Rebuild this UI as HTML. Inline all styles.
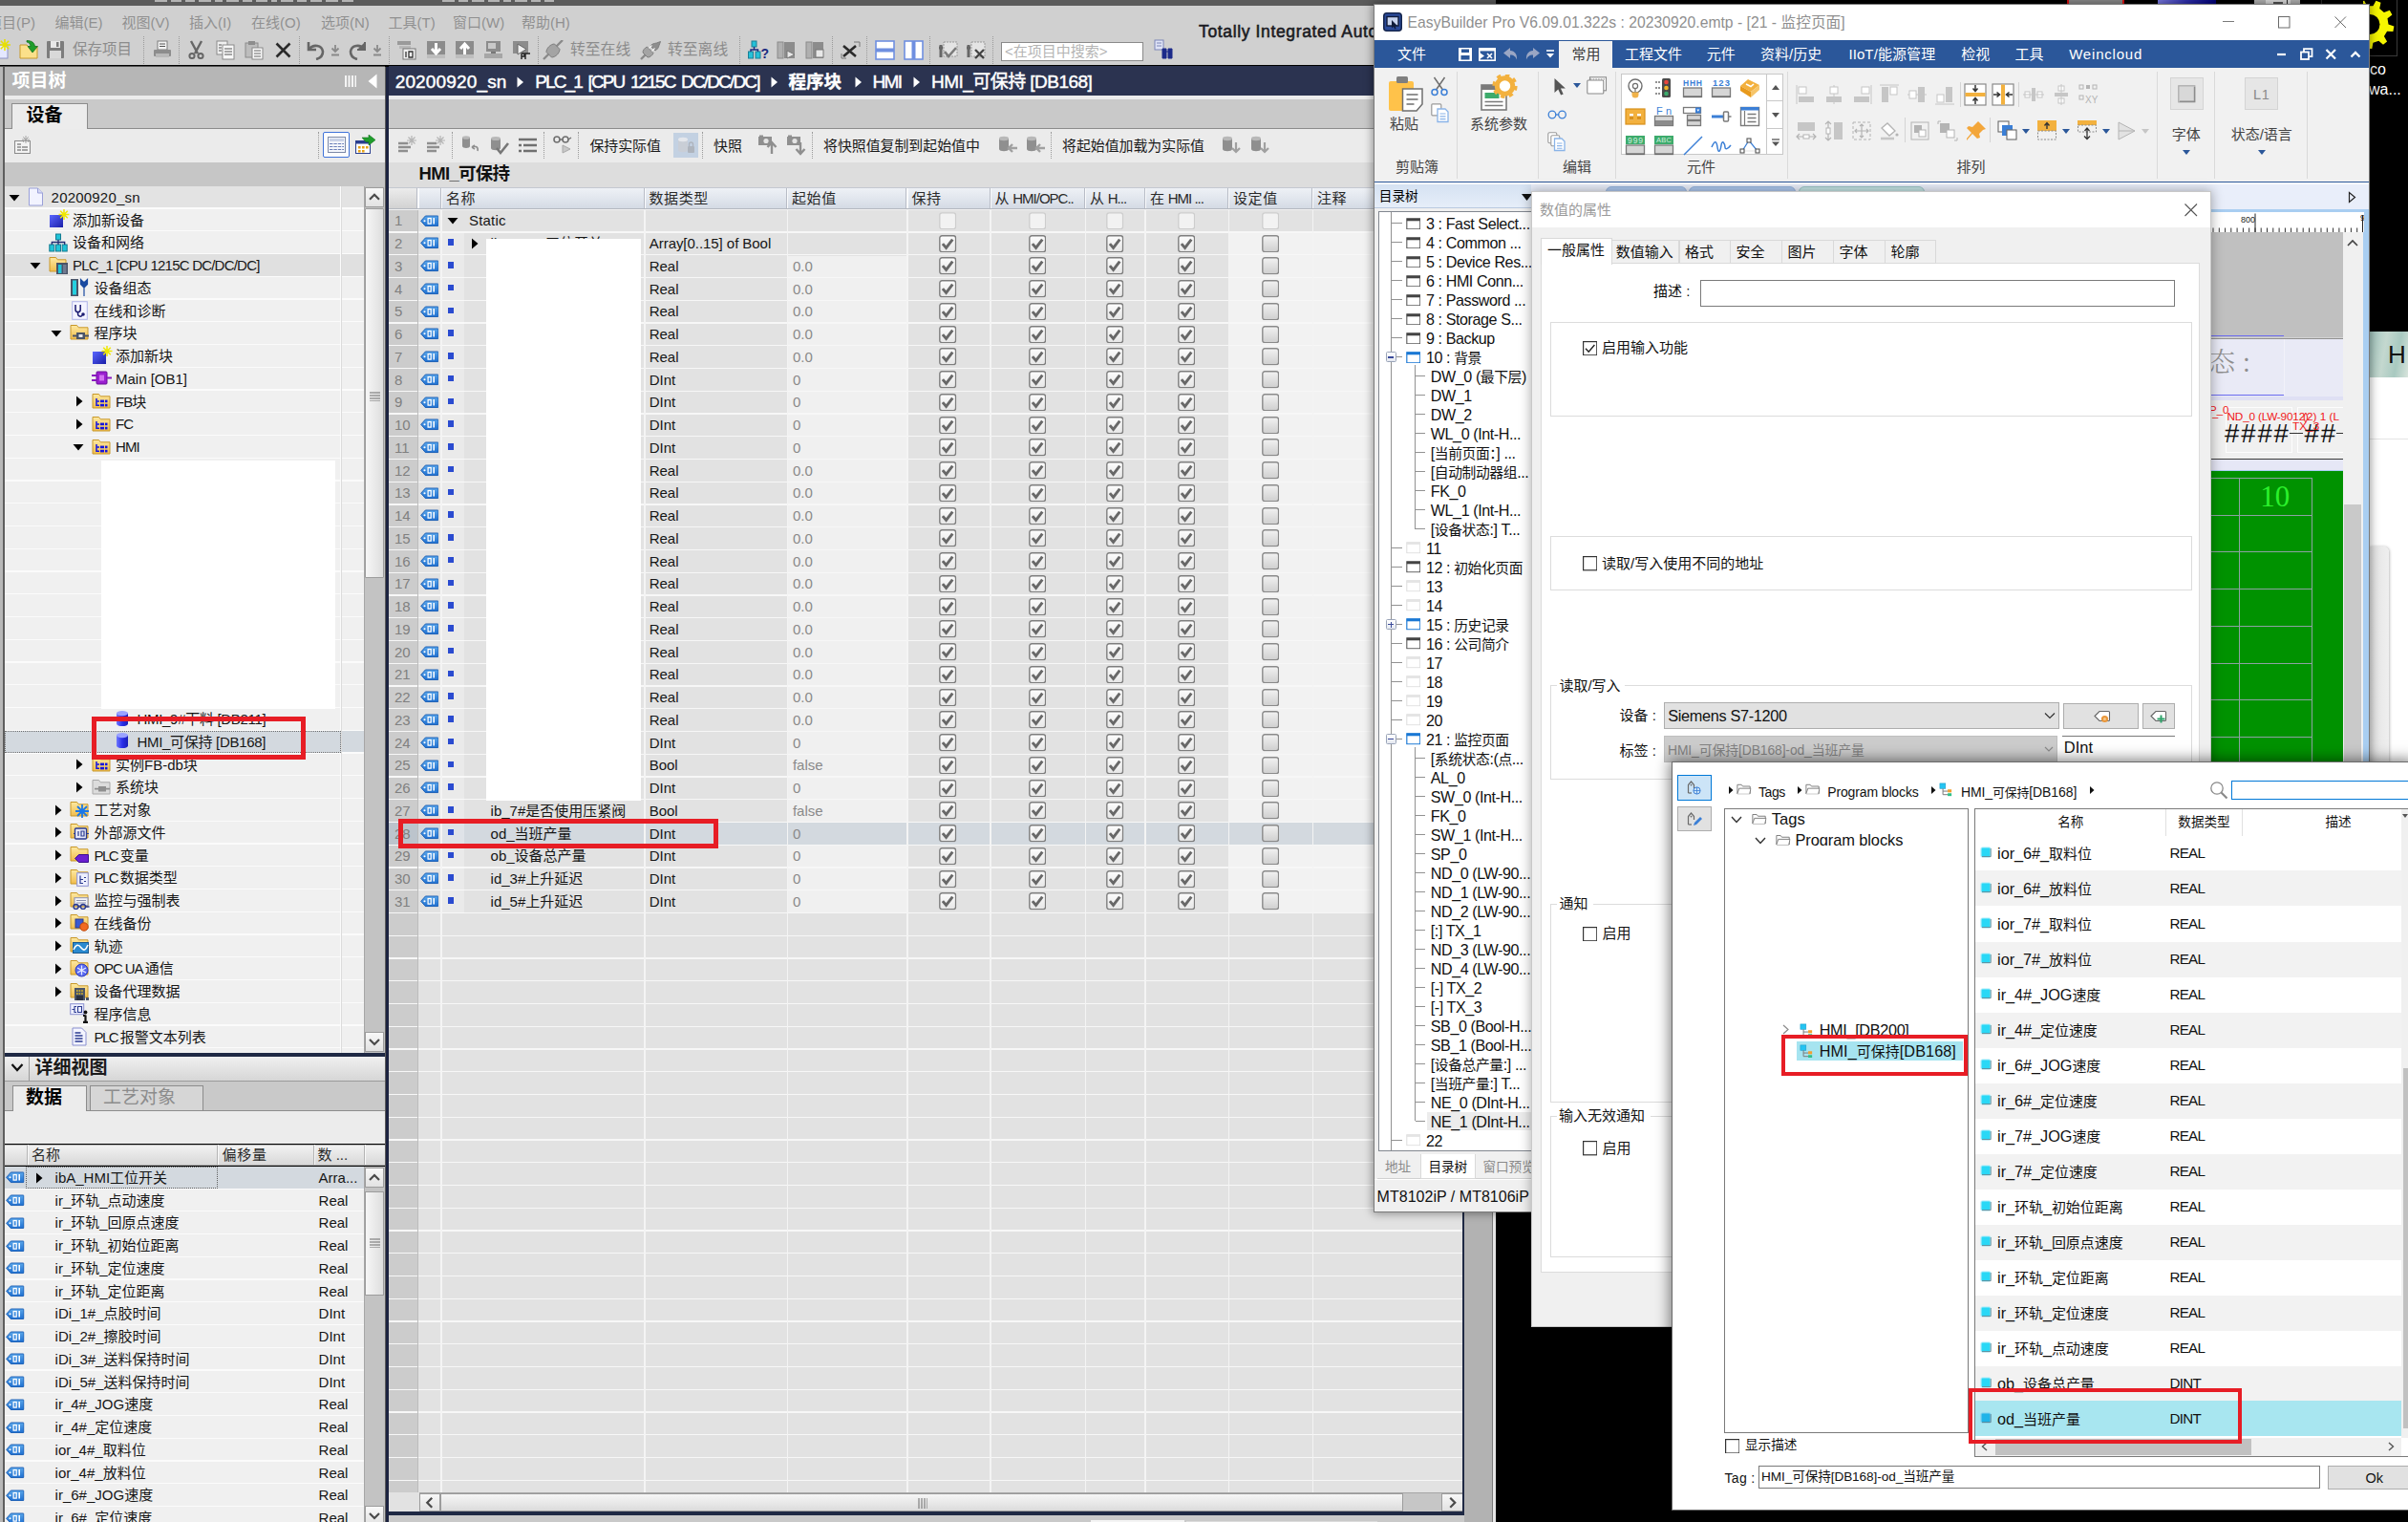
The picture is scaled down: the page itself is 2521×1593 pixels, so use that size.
<!DOCTYPE html>
<html lang="zh"><head><meta charset="utf-8"><title>TIA Portal / EasyBuilder Pro</title><style>
html,body{margin:0;padding:0}
body{width:2521px;height:1593px;overflow:hidden;position:relative;background:#000;font-family:'Liberation Sans','Noto Sans CJK SC',sans-serif}
#r{position:absolute;left:0;top:0;width:2521px;height:1593px;overflow:hidden}
#r div,#r svg{position:absolute}
.t{font-family:'Liberation Sans','Noto Sans CJK SC',sans-serif}
.e{font-family:'Liberation Sans','Noto Sans CJK SC',sans-serif;font-size:15.6px;color:#1a1a1a}
.c{font-size:.92em}
</style></head><body>
<svg width="0" height="0" style="position:absolute"><defs>
<linearGradient id="gtag" x1="0" y1="0" x2="0" y2="1"><stop offset="0" stop-color="#5aa6ea"/><stop offset="1" stop-color="#1e6fd0"/></linearGradient>
<linearGradient id="gfold" x1="0" y1="0" x2="0" y2="1"><stop offset="0" stop-color="#fde9a2"/><stop offset="1" stop-color="#f1bd4c"/></linearGradient>
<linearGradient id="gdb" x1="0" y1="0" x2="1" y2="0"><stop offset="0" stop-color="#6f78ff"/><stop offset=".5" stop-color="#2a2fe8"/><stop offset="1" stop-color="#1a1fb8"/></linearGradient>
<linearGradient id="gadd" x1="0" y1="0" x2="1" y2="1"><stop offset="0" stop-color="#5a66ff"/><stop offset="1" stop-color="#1a1fa8"/></linearGradient>
<linearGradient id="gchk" x1="0" y1="0" x2="0" y2="1"><stop offset="0" stop-color="#fdfdfd"/><stop offset="1" stop-color="#e6e6e6"/></linearGradient>
<linearGradient id="gchk2" x1="0" y1="0" x2="0" y2="1"><stop offset="0" stop-color="#f2f2f2"/><stop offset="1" stop-color="#cfcfcf"/></linearGradient>
<symbol id="tag" viewBox="0 0 20 13"><path d="M0.6 6.5L5.5 1h13.2a.8.8 0 0 1 .8.8v9.4a.8.8 0 0 1-.8.8H5.5z" fill="url(#gtag)" stroke="#1558b0" stroke-width=".9"/><circle cx="4.6" cy="6.5" r="1.1" fill="#fff"/><rect x="8.3" y="3.6" width="3.2" height="5.8" fill="none" stroke="#fff" stroke-width="1.3"/><path d="M14.6 3.2v6.6" stroke="#fff" stroke-width="1.6"/></symbol>
<symbol id="fold" viewBox="0 0 20 18"><path d="M1 2.5h6.5l1.8 2.3H19v12.2H1z" fill="url(#gfold)" stroke="#c8982a" stroke-width="1"/></symbol>
<symbol id="foldb" viewBox="0 0 20 18"><path d="M1 2.5h6.5l1.8 2.3H19v12.2H1z" fill="url(#gfold)" stroke="#c8982a" stroke-width="1"/><path d="M5 7v7.2h3M5 10h3" stroke="#1414e0" stroke-width="1.5" fill="none"/><rect x="9" y="8.6" width="4" height="2.6" fill="#1414e0"/><rect x="9" y="12.8" width="4" height="2.6" fill="#1414e0"/><rect x="14" y="8.6" width="2.5" height="2.6" fill="#1414e0"/><rect x="14" y="12.8" width="2.5" height="2.6" fill="#1414e0"/></symbol>
<symbol id="foldg" viewBox="0 0 20 18"><path d="M1 2.5h6.5l1.8 2.3H19v12.2H1z" fill="#dcdcdc" stroke="#a8a8a8" stroke-width="1"/><rect x="7" y="9" width="8" height="5.5" fill="#8f8f8f"/><path d="M3 11.7h4M15 11.7h4" stroke="#8f8f8f" stroke-width="1.8"/></symbol>
<symbol id="db" viewBox="0 0 14 18"><path d="M1 3.5v11c0 3.4 12 3.4 12 0v-11z" fill="url(#gdb)"/><ellipse cx="7" cy="3.6" rx="6" ry="2.6" fill="#9aa2ff"/></symbol>
<symbol id="addn" viewBox="0 0 22 20"><rect x="1" y="6" width="14" height="13" fill="url(#gadd)"/><path d="M16 0v11M10.5 5.5h11M12.2 1.7l7.6 7.6M19.8 1.7l-7.6 7.6" stroke="#f0e800" stroke-width="1.5"/></symbol>
<symbol id="aR" viewBox="0 0 8 12"><path d="M1 0.5l6.5 5.5L1 11.5z" fill="#000"/></symbol>
<symbol id="aD" viewBox="0 0 12 8"><path d="M0.5 1h11L6 7.5z" fill="#000"/></symbol>
<symbol id="ck1" viewBox="0 0 17 17"><rect x=".75" y=".75" width="15.5" height="15.5" rx="2.2" fill="url(#gchk)" stroke="#7e7e7e" stroke-width="1.3"/><path d="M3.6 8.4l3.4 4 6.2-8.2" stroke="#686868" stroke-width="2.7" fill="none"/></symbol>
<symbol id="ck0" viewBox="0 0 17 17"><rect x=".75" y=".75" width="15.5" height="15.5" rx="2.2" fill="url(#gchk2)" stroke="#8a8a8a" stroke-width="1.3"/></symbol>
<symbol id="ckd" viewBox="0 0 17 17"><rect x=".75" y=".75" width="15.5" height="15.5" rx="2.2" fill="#f2f2f2" stroke="#cdcdcd" stroke-width="1.2"/></symbol>
<symbol id="ebw" viewBox="0 0 16 13"><rect x=".8" y=".8" width="14.4" height="11.4" fill="#fff" stroke="#555" stroke-width="1.1"/><rect x=".8" y=".8" width="14.4" height="2.6" fill="#444"/></symbol>
<symbol id="ebwb" viewBox="0 0 16 13"><rect x=".8" y=".8" width="14.4" height="11.4" fill="#fff" stroke="#1a78d4" stroke-width="1.2"/><rect x=".8" y=".8" width="14.4" height="2.6" fill="#1a78d4"/></symbol>
<symbol id="ebwe" viewBox="0 0 16 13"><rect x=".8" y=".8" width="14.4" height="11.4" fill="#fff" stroke="#dcdcdc" stroke-width="1"/><rect x=".8" y=".8" width="14.4" height="2.2" fill="#e4e4e4"/></symbol>
<symbol id="cy2" viewBox="0 0 12 12"><rect x="1" y="1" width="10" height="10" rx="1.5" fill="#1fb4e8" stroke="#7fd0ee" stroke-width="1.2"/><path d="M2 10.6h9.2V2" stroke="#5a6a74" stroke-width="1" fill="none" opacity=".7"/></symbol>
<symbol id="cy" viewBox="0 0 12 12"><rect x="1" y="1" width="10" height="10" rx="1.5" fill="#29d8f6" stroke="#a8ecfa" stroke-width="1.2"/><path d="M2 10.6h9.2V2" stroke="#5a6a74" stroke-width="1" fill="none" opacity=".7"/></symbol>
<symbol id="tfold" viewBox="0 0 18 14"><path d="M1 1.5h5l1.5 2H16.5V12.5H1z" fill="none" stroke="#7a7a7a" stroke-width="1.1"/><path d="M1 12.5l2.2-6.5h14.3l-1.5 6.5" fill="#fff" stroke="#7a7a7a" stroke-width="1.1"/></symbol>
<symbol id="ttag" viewBox="0 0 16 16"><rect x="1" y="1" width="6.500" height="6" fill="#24c4f2" stroke="#1a9ac8" stroke-width=".6"/><path d="M4.500 7v7h5.500M4.500 10h5.500" stroke="#7a7a7a" stroke-width="1.100" fill="none"/><rect x="10" y="8" width="4.500" height="3.400" fill="#f2a030"/><rect x="10" y="12.400" width="4.500" height="3.400" fill="#2fc08a"/></symbol>
</defs></svg>
<div id="r">
<div style="left:0px;top:0px;width:1566px;height:6px;background:#5b5b5b"></div>
<div style="left:0px;top:5.5px;width:1600px;height:31px;background:#d0d0d0"></div>
<div style="left:0px;top:36px;width:1600px;height:32px;background:#d0d0d0"></div>
<div style="left:162px;top:0px;width:13px;height:1.6px;background:#b4b4b4"></div>
<div style="left:179px;top:0px;width:11px;height:1.6px;background:#b4b4b4"></div>
<div style="left:194px;top:0px;width:10px;height:1.6px;background:#b4b4b4"></div>
<div style="left:208px;top:0px;width:13px;height:1.6px;background:#b4b4b4"></div>
<div style="left:225px;top:0px;width:8px;height:1.6px;background:#b4b4b4"></div>
<div style="left:237px;top:0px;width:13px;height:1.6px;background:#b4b4b4"></div>
<div style="left:254px;top:0px;width:10px;height:1.6px;background:#b4b4b4"></div>
<div style="left:268px;top:0px;width:12px;height:1.6px;background:#b4b4b4"></div>
<div style="left:284px;top:0px;width:6px;height:1.6px;background:#b4b4b4"></div>
<div style="left:294px;top:0px;width:13px;height:1.6px;background:#b4b4b4"></div>
<div style="left:311px;top:0px;width:10px;height:1.6px;background:#b4b4b4"></div>
<div style="left:325px;top:0px;width:12px;height:1.6px;background:#b4b4b4"></div>
<div style="left:341px;top:0px;width:13px;height:1.6px;background:#b4b4b4"></div>
<div style="left:358px;top:0px;width:12px;height:1.6px;background:#b4b4b4"></div>
<div style="left:463px;top:0px;width:13px;height:1.6px;background:#b4b4b4"></div>
<div style="left:480px;top:0px;width:10px;height:1.6px;background:#b4b4b4"></div>
<div style="left:494px;top:0px;width:13px;height:1.6px;background:#b4b4b4"></div>
<div style="left:511px;top:0px;width:12px;height:1.6px;background:#b4b4b4"></div>
<div style="left:527px;top:0px;width:8px;height:1.6px;background:#b4b4b4"></div>
<div style="left:539px;top:0px;width:13px;height:1.6px;background:#b4b4b4"></div>
<div style="left:556px;top:0px;width:10px;height:1.6px;background:#b4b4b4"></div>
<div style="left:570px;top:0px;width:10px;height:1.6px;background:#b4b4b4"></div>
<div class="t" style="left:-13px;top:12.3px;height:24px;line-height:24px;white-space:pre;color:#909090;font-size:15px">项目(P)</div>
<div class="t" style="left:57.5px;top:12.3px;height:24px;line-height:24px;white-space:pre;color:#909090;font-size:15px">编辑(E)</div>
<div class="t" style="left:127.5px;top:12.3px;height:24px;line-height:24px;white-space:pre;color:#909090;font-size:15px">视图(V)</div>
<div class="t" style="left:198px;top:12.3px;height:24px;line-height:24px;white-space:pre;color:#909090;font-size:15px">插入(I)</div>
<div class="t" style="left:263px;top:12.3px;height:24px;line-height:24px;white-space:pre;color:#909090;font-size:15px">在线(O)</div>
<div class="t" style="left:336px;top:12.3px;height:24px;line-height:24px;white-space:pre;color:#909090;font-size:15px">选项(N)</div>
<div class="t" style="left:406.5px;top:12.3px;height:24px;line-height:24px;white-space:pre;color:#909090;font-size:15px">工具(T)</div>
<div class="t" style="left:474px;top:12.3px;height:24px;line-height:24px;white-space:pre;color:#909090;font-size:15px">窗口(W)</div>
<div class="t" style="left:546px;top:12.3px;height:24px;line-height:24px;white-space:pre;color:#909090;font-size:15px">帮助(H)</div>
<div class="t" style="left:76px;top:40.3px;height:24px;line-height:24px;white-space:pre;color:#8c8c8c;font-size:15.5px">保存项目</div>
<div class="t" style="left:597px;top:40.3px;height:24px;line-height:24px;white-space:pre;color:#8c8c8c;font-size:15.8px">转至在线</div>
<div class="t" style="left:699px;top:40.3px;height:24px;line-height:24px;white-space:pre;color:#8c8c8c;font-size:15.8px">转至离线</div>
<div style="left:150px;top:38px;width:0px;height:29px;border-left:1px dotted #9a9a9a"></div>
<div style="left:186.5px;top:38px;width:0px;height:29px;border-left:1px dotted #9a9a9a"></div>
<div style="left:313px;top:38px;width:0px;height:29px;border-left:1px dotted #9a9a9a"></div>
<div style="left:406.5px;top:38px;width:0px;height:29px;border-left:1px dotted #9a9a9a"></div>
<div style="left:562.5px;top:38px;width:0px;height:29px;border-left:1px dotted #9a9a9a"></div>
<div style="left:774px;top:38px;width:0px;height:29px;border-left:1px dotted #9a9a9a"></div>
<div style="left:871px;top:38px;width:0px;height:29px;border-left:1px dotted #9a9a9a"></div>
<div style="left:906.5px;top:38px;width:0px;height:29px;border-left:1px dotted #9a9a9a"></div>
<div style="left:973px;top:38px;width:0px;height:29px;border-left:1px dotted #9a9a9a"></div>
<div style="left:1039px;top:38px;width:0px;height:29px;border-left:1px dotted #9a9a9a"></div>
<svg style="left:-3px;top:41px;" width="14" height="21" viewBox="0 0 14 21"><rect x="0" y="6" width="11" height="14" fill="#e4e8ff" stroke="#8c93c6"/><path d="M8 0v12M2 6h12M3.8 1.8l8.4 8.4M12.2 1.8l-8.4 8.4" stroke="#e8e000" stroke-width="1.6"/></svg>
<svg style="left:20px;top:41px;" width="22" height="22" viewBox="0 0 22 22"><path d="M1 6h7l2 2h9v12h-18z" fill="#fbe08a" stroke="#c89a2a"/><path d="M8 1.500c5 0 8 2 8.500 6h3l-5.500 6.500-5-6.500h3c-.3-2.500-1.500-4-4-4.500z" fill="#1f9e2c" stroke="#0d6a16" stroke-width=".7"/></svg>
<svg style="left:48px;top:42px;" width="20" height="20" viewBox="0 0 20 20"><rect x="1" y="1" width="18" height="18" rx="1" fill="#7d7d7d"/><rect x="5" y="1" width="10" height="7" fill="#e8e8e8"/><rect x="4" y="11" width="12" height="8" fill="#d9d9d9"/><rect x="11" y="2" width="2.5" height="5" fill="#7d7d7d"/></svg>
<svg style="left:160px;top:42px;" width="20" height="20" viewBox="0 0 20 20"><rect x="5" y="1" width="10" height="9" fill="#f4f4f4" stroke="#7d7d7d"/><path d="M7 4h6M7 6.5h6" stroke="#555"/><rect x="1" y="10" width="18" height="7" rx="1" fill="#8d8d8d"/><rect x="3" y="14" width="14" height="4" fill="#b9b9b9"/></svg>
<svg style="left:197px;top:42px;" width="17" height="21" viewBox="0 0 17 21"><path d="M3 1l7 13M14 1l-7 13" stroke="#666" stroke-width="2.4"/><circle cx="4" cy="16.5" r="2.6" fill="none" stroke="#666" stroke-width="2"/><circle cx="13" cy="16.5" r="2.6" fill="none" stroke="#666" stroke-width="2"/></svg>
<svg style="left:226px;top:42px;" width="21" height="21" viewBox="0 0 21 21"><rect x="1" y="1" width="11" height="14" fill="#f0f0f0" stroke="#8a8a8a"/><rect x="7" y="5" width="12" height="15" fill="#f8f8f8" stroke="#8a8a8a"/><path d="M9 9h8M9 12h8M9 15h8" stroke="#555" stroke-width="1.2"/><path d="M3 5h3M3 8h3M3 11h3" stroke="#555" stroke-width="1.2"/></svg>
<svg style="left:256px;top:42px;" width="21" height="21" viewBox="0 0 21 21"><rect x="1" y="3" width="13" height="15" fill="#bdbdbd" stroke="#8a8a8a"/><rect x="4" y="1" width="7" height="4" fill="#8d8d8d"/><rect x="8" y="8" width="11" height="12" fill="#f8f8f8" stroke="#8a8a8a"/><path d="M10 11h7M10 14h7M10 17h7" stroke="#666" stroke-width="1.2"/></svg>
<svg style="left:288px;top:44px;" width="17" height="17" viewBox="0 0 17 17"><path d="M1.5 1.5l14 14M15.5 1.5l-14 14" stroke="#2a2a2a" stroke-width="2.6"/></svg>
<svg style="left:320px;top:42px;" width="22" height="21" viewBox="0 0 22 21"><path d="M3 2v8h8" fill="none" stroke="#666" stroke-width="2.6"/><path d="M4 9c4-5 13-4 14 3 0 4-3 7-7 8" fill="none" stroke="#666" stroke-width="2.6"/></svg>
<svg style="left:346px;top:47px;" width="10" height="12" viewBox="0 0 10 12"><path d="M5 0v6M1.5 3.5l3.5 3.5 3.5-3.5M1 10.5h8" stroke="#8a8a8a" stroke-width="1.8" fill="none"/></svg>
<svg style="left:363px;top:42px;" width="22" height="21" viewBox="0 0 22 21"><path d="M19 2v8h-8" fill="#666" stroke="#666" stroke-width="2"/><path d="M18 9c-4-5-13-4-14 3 0 4 3 7 7 8" fill="none" stroke="#666" stroke-width="2.6"/></svg>
<svg style="left:390px;top:47px;" width="10" height="12" viewBox="0 0 10 12"><path d="M5 0v6M1.5 3.5l3.5 3.5 3.5-3.5M1 10.5h8" stroke="#8a8a8a" stroke-width="1.8" fill="none"/></svg>
<svg style="left:415px;top:42px;" width="21" height="21" viewBox="0 0 21 21"><rect x="1" y="1" width="14" height="4" fill="#9a9a9a"/><rect x="3" y="6" width="12" height="3" fill="#b8b8b8"/><rect x="7" y="9" width="13" height="11" fill="#f2f2f2" stroke="#777"/><path d="M10 12v6M13 12h4v6h-4z" stroke="#333" fill="none" stroke-width="1.3"/></svg>
<svg style="left:445.5px;top:42px;" width="21" height="21" viewBox="0 0 21 21"><rect x="1" y="1" width="19" height="17" fill="#8c8c8c"/><rect x="1" y="15" width="19" height="4" fill="#bdbdbd"/><path d="M10.5 3v9M6 9l4.5 5 4.5-5" stroke="#fff" stroke-width="3" fill="none"/></svg>
<svg style="left:475.5px;top:42px;" width="21" height="21" viewBox="0 0 21 21"><rect x="1" y="1" width="19" height="17" fill="#8c8c8c"/><rect x="1" y="15" width="19" height="4" fill="#bdbdbd"/><path d="M10.5 15v-9M6 9l4.5-5 4.5 5" stroke="#fff" stroke-width="3" fill="none"/></svg>
<svg style="left:506px;top:42px;" width="21" height="21" viewBox="0 0 21 21"><rect x="3" y="1" width="15" height="11" fill="#8c8c8c"/><rect x="5" y="3" width="8" height="6" fill="#c9c9c9"/><rect x="1" y="14" width="19" height="5" fill="#a6a6a6"/><rect x="8" y="12" width="5" height="2" fill="#777"/></svg>
<svg style="left:536px;top:42px;" width="21" height="21" viewBox="0 0 21 21"><rect x="1" y="1" width="16" height="13" fill="#8c8c8c"/><path d="M6 4v11l9-5.5z" fill="#efefef" stroke="#666"/><path d="M10 14v6M10 14h3v3h-3M14 20v-6M14 14h5" stroke="#222" stroke-width="1.4" fill="none"/></svg>
<svg style="left:568px;top:42px;" width="22" height="21" viewBox="0 0 22 21"><path d="M1 20l6-6M14 7l7-7" stroke="#8a8a8a" stroke-width="2.4"/><path d="M4 12.500l5.500 5.500c4 0 8.500-4.500 8.500-8.500l-5.500-5.500c-4 0-8.500 4.500-8.500 8.500z" fill="#a4a4a4" stroke="#7e7e7e"/></svg>
<svg style="left:670px;top:42px;" width="22" height="21" viewBox="0 0 22 21"><path d="M1 20l5-5" stroke="#8a8a8a" stroke-width="2.400"/><path d="M3 13l5 5c2.500 0 5-2 6-4.500l-6.500-6.500c-2.500 1-4.500 3.500-4.500 6z" fill="#a4a4a4" stroke="#7e7e7e"/><path d="M11 6l5 5c2-1 3.500-3 4-5.500l1.500-4-4 1.500c-2.500.5-5.500 1-6.500 3z" fill="#8e8e8e" stroke="#7e7e7e"/><path d="M9.500 8.500l3-3M12.500 11.500l3-3" stroke="#f0f0f0" stroke-width="1.200"/></svg>
<svg style="left:783px;top:42px;" width="22" height="21" viewBox="0 0 22 21"><rect x="4" y="1" width="5" height="6" fill="#25c1d8" stroke="#1b7f96"/><rect x="0.5" y="12" width="5" height="7" fill="#25c1d8" stroke="#1b7f96"/><rect x="8" y="12" width="5" height="7" fill="#25c1d8" stroke="#1b7f96"/><path d="M6.5 7v3M3 12v-2h7.5v2" stroke="#1a2a80" fill="none" stroke-width="1.4"/><text x="13.5" y="19" font-size="14" font-weight="bold" fill="#1a2a80" font-family="Liberation Sans,sans-serif">?</text></svg>
<svg style="left:813px;top:42px;" width="21" height="21" viewBox="0 0 21 21"><rect x="1" y="2" width="6" height="17" fill="#b0b0b0" stroke="#8a8a8a"/><rect x="8" y="2" width="11" height="17" fill="#8c8c8c"/><path d="M11 11v8l8-4z" fill="#e8e8e8" stroke="#777"/></svg>
<svg style="left:843px;top:42px;" width="21" height="21" viewBox="0 0 21 21"><rect x="1" y="2" width="6" height="17" fill="#b0b0b0" stroke="#8a8a8a"/><rect x="8" y="2" width="11" height="17" fill="#8c8c8c"/><rect x="11" y="10" width="8" height="8" fill="#e8e8e8" stroke="#777"/></svg>
<svg style="left:880px;top:43px;" width="21" height="19" viewBox="0 0 21 19"><path d="M3 5l13 11M16 5l-13 11" stroke="#2a2a2a" stroke-width="2.6"/><path d="M14 1h6v5" stroke="#777" fill="none"/><path d="M1 13v5h5" stroke="#777" fill="none"/></svg>
<svg style="left:916px;top:42px;" width="21" height="21" viewBox="0 0 21 21"><rect x="1" y="1" width="19" height="19" fill="#fff" stroke="#6f8fe0" stroke-width="1.6"/><rect x="1" y="8.5" width="19" height="4" fill="#6f8fe0"/></svg>
<svg style="left:946px;top:42px;" width="21" height="21" viewBox="0 0 21 21"><rect x="1" y="1" width="19" height="19" fill="#fff" stroke="#6f8fe0" stroke-width="1.6"/><rect x="8.5" y="1" width="4" height="19" fill="#6f8fe0"/></svg>
<svg style="left:982px;top:42px;" width="22" height="21" viewBox="0 0 22 21"><rect x="6" y="2" width="14" height="15" fill="#e4e4e4" stroke="#999" stroke-dasharray="2 1"/><path d="M3 5v13M1 8h4" stroke="#666" stroke-width="3"/><path d="M7 12l4 5 8-9" stroke="#7a7a7a" stroke-width="2.6" fill="none"/></svg>
<svg style="left:1011px;top:42px;" width="22" height="21" viewBox="0 0 22 21"><rect x="6" y="2" width="14" height="15" fill="#e4e4e4" stroke="#999" stroke-dasharray="2 1"/><path d="M3 5v13M1 8h4" stroke="#666" stroke-width="3"/><path d="M10 10l9 9M19 10l-9 9" stroke="#444" stroke-width="2.4" fill="none"/></svg>
<svg style="left:1208px;top:41px;" width="22" height="22" viewBox="0 0 22 22"><rect x="1" y="1" width="9" height="10" fill="#dfe3f6" stroke="#7d86b8"/><path d="M3 4h5M3 7h5" stroke="#7d86b8"/><path d="M9 10h4v10h-4zM15 10h4v10h-4zM13 13h2" fill="#1c2b8a" stroke="#1c2b8a"/></svg>
<div style="left:1047.8px;top:43.6px;width:149px;height:20.7px;background:#fff;border:1px solid #8a8a8a;box-sizing:border-box"></div>
<div class="t" style="left:1052px;top:42px;height:24px;line-height:24px;white-space:pre;color:#b4b4b4;font-size:15px">&lt;在项目中搜索&gt;</div>
<div class="t" style="left:1255px;top:20.6px;height:24px;line-height:24px;white-space:pre;color:#1a1a22;font-size:17.5px;-webkit-text-stroke:.55px #1a1a22;letter-spacing:.64px">Totally Integrated Automation</div>
<div style="left:0px;top:68.5px;width:403px;height:1.9px;background:linear-gradient(#707070,#333)"></div>
<div style="left:0px;top:70.3px;width:2.6px;height:1523px;background:#b8b8b8"></div>
<div style="left:2.6px;top:70.3px;width:2px;height:1523px;background:#5e5e5e"></div>
<div style="left:4.6px;top:70.3px;width:398.4px;height:30px;background:#b6b6b6"></div>
<div class="t" style="left:12.5px;top:72.8px;height:24px;line-height:24px;white-space:pre;color:#fff;font-size:19px;font-weight:bold">项目树</div>
<svg style="left:359.5px;top:78px;" width="14" height="14" viewBox="0 0 14 14"><path d="M1 1h2v12h-2zM4.5 1h2v12h-2zM8 1h2v12h-2zM11.5 1h1.5v12h-1.5z" fill="#f4f4f4"/></svg>
<svg style="left:385px;top:77px;" width="10" height="16" viewBox="0 0 10 16"><path d="M9.5 0.5v15l-9-7.5z" fill="#fff"/></svg>
<div style="left:4.6px;top:100px;width:398.4px;height:4px;background:#ececec"></div>
<div style="left:4.6px;top:104px;width:398.4px;height:31px;background:#c9c9c9;border-bottom:1px solid #8c8c8c;box-sizing:border-box"></div>
<div style="left:12.2px;top:108px;width:79.6px;height:27px;background:#ececec;border:1px solid #8c8c8c;border-bottom:none;box-sizing:border-box"></div>
<div class="t" style="left:27.4px;top:109px;height:24px;line-height:24px;white-space:pre;color:#000;font-size:19px;font-weight:bold">设备</div>
<div style="left:4.6px;top:135px;width:398.4px;height:34.6px;background:#ebebeb"></div>
<div style="left:333px;top:138px;width:0px;height:28px;border-left:1px dotted #9a9a9a"></div>
<div style="left:338.4px;top:137.8px;width:27.4px;height:27.2px;background:#fdfdfd;border:1px solid #3f73d9;border-radius:2px;box-sizing:border-box"></div>
<svg style="left:342.5px;top:142.5px;" width="19" height="18" viewBox="0 0 19 18"><rect x="0.5" y="0.5" width="18" height="16" fill="#f4f6fb" stroke="#7d8aa8"/><rect x="2" y="2" width="15" height="3" fill="#c9d2e6"/><path d="M2 7.5h15M2 10.5h15M2 13.5h15" stroke="#6b7fb8" stroke-width="1.2" stroke-dasharray="3.4 1"/></svg>
<svg style="left:371.5px;top:141px;" width="22" height="21" viewBox="0 0 22 21"><rect x="0.5" y="6.5" width="15" height="13" fill="#fff" stroke="#2a3f8f"/><rect x="0.5" y="6.5" width="15" height="3" fill="#2a3f8f"/><path d="M3 12h2.6v2.6h-2.6zM7 12h2.6v2.6h-2.6zM11 12h2.6v2.6h-2.6zM3 16h2.6v2.6h-2.6zM7 16h2.6v2.6h-2.6z" fill="#e8a317"/><path d="M7 3h7v-3l7 5.5-7 5.5v-3.5h-3z" fill="#1f9e2c" stroke="#12701c" stroke-width=".6"/></svg>
<svg style="left:13.5px;top:142px;" width="21" height="20" viewBox="0 0 21 20"><rect x="1.5" y="5.5" width="16" height="13" fill="#f2f2f2" stroke="#8a8a8a"/><path d="M4 9h4M4 12h4M4 15h4M9 12h6M9 15h6" stroke="#8a8a8a" stroke-width="1.4"/><path d="M13 0v8M9 4h8M10.2 1.2l5.6 5.6M15.8 1.2l-5.6 5.6" stroke="#a6a6a6" stroke-width="1"/></svg>
<div style="left:4.6px;top:169.6px;width:398.4px;height:25.2px;background:#c6c6c6"></div>
<div style="left:4.6px;top:195.1px;width:376px;height:906.5px;overflow:hidden;background:repeating-linear-gradient(#f0f0f0 0,#f0f0f0 22.35px,#fbfbfb 22.35px,#fbfbfb 23.75px)"></div>
<div style="left:4.6px;top:195.1px;width:376px;height:22.4px;background:#e3e3e3"></div>
<div style="left:4.6px;top:266.35px;width:376px;height:22.4px;background:#e0e0e0"></div>
<div style="left:355.6px;top:195.1px;width:1.6px;height:906.5px;background:#fbfbfb"></div>
<div style="left:357.2px;top:195.1px;width:0.8px;height:906.5px;background:#dcdcdc"></div>
<div style="left:4.6px;top:764.5px;width:352.6px;height:23.2px;background:#d3d9df;border:1px dotted #6e6e6e;box-sizing:border-box"></div>
<div style="left:358px;top:764.9px;width:22.6px;height:22.6px;background:#d3d9df"></div>
<div style="left:4.6px;top:195.1px;width:376px;height:906.5px;overflow:hidden">
<svg style="left:4px;top:7.68px;" width="12" height="8"><use href="#aD"/></svg>
<svg style="left:24px;top:1.18px;" width="17" height="20" viewBox="0 0 17 20"><path d="M1.5 1h9l5 5v13h-14z" fill="#f2f3ff" stroke="#9aa0d8"/><path d="M10.5 1v5h5" fill="#d5d8f5" stroke="#9aa0d8"/></svg>
<div class="t" style="left:49px;top:-0.22px;height:24px;line-height:24px;white-space:pre;color:#161616;font-size:15px;letter-spacing:.2px;">20200920_sn</div>
<svg style="left:46.4px;top:23.92px;" width="22" height="20"><use href="#addn"/></svg>
<div class="t" style="left:71.4px;top:23.52px;height:24px;line-height:24px;white-space:pre;color:#161616;font-size:15px;">添加新设备</div>
<svg style="left:46.4px;top:48.67px;" width="20" height="20" viewBox="0 0 20 20"><rect x="7.5" y="1" width="5" height="6" fill="#20c4d8" stroke="#157a90"/><rect x="0.8" y="12" width="5" height="7" fill="#20c4d8" stroke="#157a90"/><rect x="7.5" y="12" width="5" height="7" fill="#20c4d8" stroke="#157a90"/><rect x="14.2" y="12" width="5" height="7" fill="#20c4d8" stroke="#157a90"/><path d="M10 7v5M3.3 12V9.5h13.4V12" stroke="#1a2a70" fill="none" stroke-width="1.3"/></svg>
<div class="t" style="left:71.4px;top:47.27px;height:24px;line-height:24px;white-space:pre;color:#161616;font-size:15px;">设备和网络</div>
<svg style="left:26.4px;top:78.92px;" width="12" height="8"><use href="#aD"/></svg>
<svg style="left:46.4px;top:71.42px;" width="21" height="21" viewBox="0 0 21 21"><path d="M1 2.5h6.5l1.8 2.3H18v12.2H1z" fill="url(#gfold)" stroke="#c8982a"/><rect x="8" y="8" width="12" height="12" fill="#4a5468"/><rect x="10" y="10" width="3.5" height="9" fill="#20c4d8"/><rect x="15" y="10" width="3.5" height="9" fill="#707a90"/></svg>
<div class="t" style="left:71.4px;top:71.02px;height:24px;line-height:24px;white-space:pre;color:#161616;font-size:15px;letter-spacing:-0.78px;">PLC_1 [CPU 1215C DC/DC/DC]</div>
<svg style="left:68.9px;top:96.17px;" width="20" height="20" viewBox="0 0 20 20"><rect x="1" y="1" width="8" height="18" fill="#4a5468"/><rect x="3" y="2.5" width="4" height="15" fill="#25d0e0"/><path d="M15 19v-9l-3.5-3.5v-5l2.5 2.5h2l2.5-2.5v5l-3.5 3.5" fill="#1a4aa0" stroke="#1a4aa0" stroke-width="1.2"/></svg>
<div class="t" style="left:93.9px;top:94.77px;height:24px;line-height:24px;white-space:pre;color:#161616;font-size:15px;">设备组态</div>
<svg style="left:70.9px;top:119.93px;" width="17" height="20" viewBox="0 0 17 20"><rect x=".7" y=".7" width="15.6" height="18.6" fill="#f4f4ff" stroke="#b0b4e8"/><path d="M4 4v5a2.6 2.6 0 0 0 5.2 0V4M6.6 11.6v2.5a2.5 2.5 0 0 0 4.5 1" stroke="#1a1a70" stroke-width="1.5" fill="none"/><circle cx="12" cy="14" r="1.8" fill="#1a1a70"/></svg>
<div class="t" style="left:93.9px;top:118.53px;height:24px;line-height:24px;white-space:pre;color:#161616;font-size:15px;">在线和诊断</div>
<svg style="left:48.9px;top:150.18px;" width="12" height="8"><use href="#aD"/></svg>
<svg style="left:68.9px;top:142.68px;" width="21" height="21" viewBox="0 0 21 21"><path d="M1 2.5h6.5l1.8 2.3H19v12.2H1z" fill="url(#gfold)" stroke="#c8982a"/><rect x="7" y="10" width="9" height="7" fill="#4a5468"/><rect x="9.5" y="12" width="4" height="3" fill="#e8e8e8"/><path d="M3 13.5h4M16 13.5h4" stroke="#4a5468" stroke-width="2.2"/></svg>
<div class="t" style="left:93.9px;top:142.28px;height:24px;line-height:24px;white-space:pre;color:#161616;font-size:15px;">程序块</div>
<svg style="left:91.4px;top:166.43px;" width="22" height="20"><use href="#addn"/></svg>
<div class="t" style="left:116.4px;top:166.03px;height:24px;line-height:24px;white-space:pre;color:#161616;font-size:15px;">添加新块</div>
<svg style="left:91.4px;top:193.18px;" width="21" height="16" viewBox="0 0 21 16"><rect x="5" y="1" width="11" height="13" rx="1" fill="#9a1fd0" stroke="#6a0e98"/><rect x="8" y="4.5" width="5" height="6" fill="#d070f0"/><path d="M0 5h5M0 10h5M16 7.5h5" stroke="#8a18c0" stroke-width="2.2"/></svg>
<div class="t" style="left:116.4px;top:189.78px;height:24px;line-height:24px;white-space:pre;color:#161616;font-size:15px;">Main [OB1]</div>
<svg style="left:74.9px;top:218.93px;" width="8" height="12"><use href="#aR"/></svg>
<svg style="left:91.4px;top:214.93px;" width="20" height="18"><use href="#foldb"/></svg>
<div class="t" style="left:116.4px;top:213.53px;height:24px;line-height:24px;white-space:pre;color:#161616;font-size:15px;letter-spacing:-.9px;">FB块</div>
<svg style="left:74.9px;top:242.68px;" width="8" height="12"><use href="#aR"/></svg>
<svg style="left:91.4px;top:238.68px;" width="20" height="18"><use href="#foldb"/></svg>
<div class="t" style="left:116.4px;top:237.28px;height:24px;line-height:24px;white-space:pre;color:#161616;font-size:15px;letter-spacing:-.9px;">FC</div>
<svg style="left:71.4px;top:268.93px;" width="12" height="8"><use href="#aD"/></svg>
<svg style="left:91.4px;top:262.43px;" width="20" height="18"><use href="#foldb"/></svg>
<div class="t" style="left:116.4px;top:261.03px;height:24px;line-height:24px;white-space:pre;color:#161616;font-size:15px;letter-spacing:-.9px;">HMI</div>
<svg style="left:116.4px;top:547.42px;" width="14" height="18"><use href="#db"/></svg>
<div class="t" style="left:138.9px;top:546.02px;height:24px;line-height:24px;white-space:pre;color:#161616;font-size:15px;letter-spacing:-0.3px;">HMI_9#下料 [DB211]</div>
<svg style="left:116.4px;top:571.17px;" width="14" height="18"><use href="#db"/></svg>
<div class="t" style="left:138.9px;top:569.77px;height:24px;line-height:24px;white-space:pre;color:#161616;font-size:15px;letter-spacing:-0.3px;">HMI_可保持 [DB168]</div>
<svg style="left:74.9px;top:598.92px;" width="8" height="12"><use href="#aR"/></svg>
<svg style="left:91.4px;top:594.92px;" width="20" height="18"><use href="#foldb"/></svg>
<div class="t" style="left:116.4px;top:593.52px;height:24px;line-height:24px;white-space:pre;color:#161616;font-size:15px;">实例FB-db块</div>
<svg style="left:74.9px;top:622.67px;" width="8" height="12"><use href="#aR"/></svg>
<svg style="left:91.4px;top:618.67px;" width="20" height="18"><use href="#foldg"/></svg>
<div class="t" style="left:116.4px;top:617.27px;height:24px;line-height:24px;white-space:pre;color:#161616;font-size:15px;">系统块</div>
<svg style="left:52.4px;top:646.42px;" width="8" height="12"><use href="#aR"/></svg>
<svg style="left:68.9px;top:641.42px;" width="20" height="18"><use href="#fold"/></svg>
<svg style="left:74.9px;top:646.42px;" width="14" height="14" viewBox="0 0 14 14"><path d="M7 0v14M0 7h14M2 2l10 10M12 2l-10 10" stroke="#1a78e8" stroke-width="1.8"/><circle cx="7" cy="7" r="2" fill="#1a78e8"/></svg>
<div class="t" style="left:93.9px;top:641.02px;height:24px;line-height:24px;white-space:pre;color:#161616;font-size:15px;">工艺对象</div>
<svg style="left:52.4px;top:670.17px;" width="8" height="12"><use href="#aR"/></svg>
<svg style="left:68.9px;top:665.17px;" width="20" height="18"><use href="#fold"/></svg>
<svg style="left:72.9px;top:671.17px;" width="16" height="13" viewBox="0 0 16 13"><rect x="1.5" y="1" width="12" height="11" rx="1" fill="#e8eaf8" stroke="#2a3a90" stroke-width="1.3"/><path d="M5 4v5M8 4h3v5h-3z" stroke="#2a3a90" fill="none" stroke-width="1.2"/><path d="M0 6.5h2M13 6.5h3" stroke="#2a3a90"/></svg>
<div class="t" style="left:93.9px;top:664.77px;height:24px;line-height:24px;white-space:pre;color:#161616;font-size:15px;">外部源文件</div>
<svg style="left:52.4px;top:693.92px;" width="8" height="12"><use href="#aR"/></svg>
<svg style="left:68.9px;top:688.92px;" width="20" height="18"><use href="#fold"/></svg>
<svg style="left:73.9px;top:698.92px;" width="15" height="9" viewBox="0 0 15 9"><path d="M0.5 4.5l4-4h10v8h-10z" fill="#6a1fd0" stroke="#3a0e90"/></svg>
<div class="t" style="left:93.9px;top:688.52px;height:24px;line-height:24px;white-space:pre;color:#161616;font-size:15px;"><span style="letter-spacing:-1.5px">PLC </span>变量</div>
<svg style="left:52.4px;top:717.67px;" width="8" height="12"><use href="#aR"/></svg>
<svg style="left:68.9px;top:712.67px;" width="20" height="18"><use href="#fold"/></svg>
<svg style="left:75.9px;top:717.67px;" width="13" height="15" viewBox="0 0 13 15"><rect x=".7" y=".7" width="11.6" height="13.6" fill="#eef0ff" stroke="#8a90d0"/><path d="M4 3.5v8h3M4 7.5h3M8 5.5h2M8 9.5h2" stroke="#2a3a90" stroke-width="1.2" fill="none"/></svg>
<div class="t" style="left:93.9px;top:712.27px;height:24px;line-height:24px;white-space:pre;color:#161616;font-size:15px;"><span style="letter-spacing:-1.5px">PLC </span>数据类型</div>
<svg style="left:52.4px;top:741.42px;" width="8" height="12"><use href="#aR"/></svg>
<svg style="left:68.9px;top:736.42px;" width="20" height="18"><use href="#fold"/></svg>
<svg style="left:70.9px;top:743.42px;" width="19" height="13" viewBox="0 0 19 13"><rect x="3" y=".7" width="14" height="8" fill="#f4f4f8" stroke="#8a90b0"/><path d="M5 3.5h10M5 6h10" stroke="#8a90b0"/><circle cx="4.5" cy="10" r="2.5" fill="none" stroke="#2a3a90" stroke-width="1.4"/><circle cx="12" cy="10" r="2.5" fill="none" stroke="#2a3a90" stroke-width="1.4"/><path d="M7 10h2.5M14.5 10h4" stroke="#2a3a90" stroke-width="1.3"/></svg>
<div class="t" style="left:93.9px;top:736.02px;height:24px;line-height:24px;white-space:pre;color:#161616;font-size:15px;">监控与强制表</div>
<svg style="left:52.4px;top:765.17px;" width="8" height="12"><use href="#aR"/></svg>
<svg style="left:68.9px;top:760.17px;" width="20" height="18"><use href="#fold"/></svg>
<svg style="left:73.9px;top:766.17px;" width="15" height="14" viewBox="0 0 15 14"><rect x="1" y="1" width="8" height="9" fill="#3a5ad0" stroke="#2a3a90"/><circle cx="10" cy="9" r="4.2" fill="#f26a1f" stroke="#c04a10"/></svg>
<div class="t" style="left:93.9px;top:759.77px;height:24px;line-height:24px;white-space:pre;color:#161616;font-size:15px;">在线备份</div>
<svg style="left:52.4px;top:788.92px;" width="8" height="12"><use href="#aR"/></svg>
<svg style="left:68.9px;top:783.92px;" width="20" height="18"><use href="#fold"/></svg>
<svg style="left:71.9px;top:790.92px;" width="17" height="12" viewBox="0 0 17 12"><rect x=".5" y=".5" width="16" height="11" fill="#2a8ad0" stroke="#1a5a90"/><path d="M1 8c3-6 5-6 8-2s5 2 7-3" stroke="#fff" stroke-width="1.6" fill="none"/></svg>
<div class="t" style="left:93.9px;top:783.52px;height:24px;line-height:24px;white-space:pre;color:#161616;font-size:15px;">轨迹</div>
<svg style="left:52.4px;top:812.67px;" width="8" height="12"><use href="#aR"/></svg>
<svg style="left:68.9px;top:807.67px;" width="20" height="18"><use href="#fold"/></svg>
<svg style="left:73.9px;top:812.67px;" width="15" height="15" viewBox="0 0 15 15"><circle cx="7.5" cy="7.5" r="6.5" fill="#5a6af0" stroke="#2a3ac0"/><path d="M7.5 2.5v10M3 5l9 5M12 5l-9 5" stroke="#e8ecff" stroke-width="1.3"/></svg>
<div class="t" style="left:93.9px;top:807.27px;height:24px;line-height:24px;white-space:pre;color:#161616;font-size:15px;"><span style="letter-spacing:-1.1px">OPC UA </span>通信</div>
<svg style="left:52.4px;top:836.42px;" width="8" height="12"><use href="#aR"/></svg>
<svg style="left:68.9px;top:831.42px;" width="20" height="18"><use href="#fold"/></svg>
<svg style="left:72.9px;top:837.42px;" width="16" height="15" viewBox="0 0 16 15"><rect x="1" y="1" width="11" height="13" fill="#4a5468"/><path d="M3 4h7M3 7h7" stroke="#e8c020" stroke-width="1.6" stroke-dasharray="1.6 1"/><rect x="3" y="9" width="7" height="5" fill="#2a3040"/><rect x="13" y="11" width="3" height="3" fill="#4a5468"/></svg>
<div class="t" style="left:93.9px;top:831.02px;height:24px;line-height:24px;white-space:pre;color:#161616;font-size:15px;">设备代理数据</div>
<svg style="left:68.9px;top:855.17px;" width="21" height="21" viewBox="0 0 21 21"><rect x=".7" y=".7" width="14" height="11" fill="#eef0ff" stroke="#8a90d0"/><path d="M2.5 6.5h2.5v-3h2M5 6.5v3h2M8.5 3.5h4v6h-4z" stroke="#2a3a90" fill="none" stroke-width="1.1"/><circle cx="16.5" cy="9.5" r="1.9" fill="#111"/><path d="M16.5 12.5v7M14 13h2.5M14 19.8h5" stroke="#111" stroke-width="2.2" fill="none"/></svg>
<div class="t" style="left:93.9px;top:854.77px;height:24px;line-height:24px;white-space:pre;color:#161616;font-size:15px;">程序信息</div>
<svg style="left:70.9px;top:879.92px;" width="17" height="20" viewBox="0 0 17 20"><path d="M1 1h9.5l4.5 4.5v13.5h-14z" fill="#f4f5ff" stroke="#8a90d0"/><path d="M3.5 6h6M3.5 9h8M3.5 12h8M3.5 15h8" stroke="#2a3a90" stroke-width="1.3"/></svg>
<div class="t" style="left:93.9px;top:878.52px;height:24px;line-height:24px;white-space:pre;color:#161616;font-size:15px;"><span style="letter-spacing:-1.5px">PLC </span>报警文本列表</div>
<div class="t" style="left:93.9px;top:902.27px;height:24px;line-height:24px;white-space:pre;color:#161616;font-size:15px;"></div>
</div>
<div style="left:105.8px;top:481.5px;width:245.4px;height:260px;background:#fff"></div>
<div style="left:380.6px;top:195.1px;width:22.4px;height:906.5px;background:#c3c3c3;border-left:1px solid #a6a6a6;box-sizing:border-box"></div>
<div style="left:382px;top:196px;width:20px;height:20.5px;background:linear-gradient(#f8f8f8,#e2e2e2);border:1px solid #9c9c9c;box-sizing:border-box"></div>
<svg style="left:382px;top:196px;" width="20" height="20.5" viewBox="0 0 20 20.5"><path d="M5.0 12.75l5-5 5 5" stroke="#4a4a4a" stroke-width="2.2" fill="none"/></svg>
<div style="left:382px;top:1080px;width:20px;height:21px;background:linear-gradient(#f8f8f8,#e2e2e2);border:1px solid #9c9c9c;box-sizing:border-box"></div>
<svg style="left:382px;top:1080px;" width="20" height="21" viewBox="0 0 20 21"><path d="M5.0 8.0l5 5 5-5" stroke="#4a4a4a" stroke-width="2.2" fill="none"/></svg>
<div style="left:382px;top:218px;width:20.4px;height:387px;background:linear-gradient(90deg,#f6f6f6,#dedede);border:1px solid #9c9c9c;box-sizing:border-box;border-radius:1px"></div>
<svg style="left:387px;top:410px;" width="11" height="10" viewBox="0 0 11 10"><path d="M0 1h11M0 4h11M0 7h11M0 10h11" stroke="#6a6a6a" stroke-width="1"/></svg>
<div style="left:96.2px;top:750.2px;width:223.6px;height:44.6px;border:5.2px solid #e71d25;box-sizing:border-box"></div>
<div style="left:4.6px;top:1101.6px;width:398.4px;height:4px;background:#1f2944"></div>
<div style="left:4.6px;top:1105.6px;width:398.4px;height:26px;background:linear-gradient(#f0f0f0,#d6d6d6);border-bottom:1px solid #9a9a9a;box-sizing:border-box"></div>
<svg style="left:10.5px;top:1112px;" width="14" height="11" viewBox="0 0 14 11"><path d="M1.5 2l5.5 6 5.5-6" stroke="#111" stroke-width="2.2" fill="none"/></svg>
<div style="left:30.4px;top:1106px;width:1px;height:25px;background:#9a9a9a"></div>
<div class="t" style="left:36.6px;top:1105.8px;height:24px;line-height:24px;white-space:pre;color:#1a1a1a;font-size:19px;font-weight:bold">详细视图</div>
<div style="left:4.6px;top:1131.6px;width:398.4px;height:31.6px;background:#c9c9c9;border-bottom:1px solid #8c8c8c;box-sizing:border-box"></div>
<div style="left:13.3px;top:1135.8px;width:78.2px;height:27.4px;background:#ececec;border:1px solid #8c8c8c;border-bottom:none;box-sizing:border-box"></div>
<div class="t" style="left:27px;top:1136.5px;height:24px;line-height:24px;white-space:pre;color:#000;font-size:19px;font-weight:bold">数据</div>
<div style="left:94.2px;top:1135.8px;width:118.6px;height:26.4px;background:#d6d6d6;border:1px solid #8c8c8c;border-bottom:none;box-sizing:border-box"></div>
<div class="t" style="left:108px;top:1136.5px;height:24px;line-height:24px;white-space:pre;color:#8c8c8c;font-size:19px">工艺对象</div>
<div style="left:4.6px;top:1163.2px;width:398.4px;height:34.3px;background:#ececec"></div>
<div style="left:4.6px;top:1197.5px;width:398.4px;height:22px;background:linear-gradient(#f2f2f2,#d8d8d8);border-top:1px solid #b8b8b8;border-bottom:1px solid #a8a8a8;box-sizing:border-box"></div>
<div style="left:28px;top:1198px;width:1px;height:21px;background:#b4b4b4"></div>
<div style="left:29px;top:1198px;width:1px;height:21px;background:#f8f8f8"></div>
<div style="left:227.4px;top:1198px;width:1px;height:21px;background:#b4b4b4"></div>
<div style="left:228.4px;top:1198px;width:1px;height:21px;background:#f8f8f8"></div>
<div style="left:327.5px;top:1198px;width:1px;height:21px;background:#b4b4b4"></div>
<div style="left:328.5px;top:1198px;width:1px;height:21px;background:#f8f8f8"></div>
<div style="left:381px;top:1198px;width:1px;height:21px;background:#b4b4b4"></div>
<div style="left:382px;top:1198px;width:1px;height:21px;background:#f8f8f8"></div>
<div class="t" style="left:33px;top:1197px;height:24px;line-height:24px;white-space:pre;color:#2a2a2a;font-size:15px">名称</div>
<div class="t" style="left:232.5px;top:1197px;height:24px;line-height:24px;white-space:pre;color:#2a2a2a;font-size:15px;letter-spacing:.8px">偏移量</div>
<div class="t" style="left:332.5px;top:1197px;height:24px;line-height:24px;white-space:pre;color:#2a2a2a;font-size:15px">数 ...</div>
<div style="left:4.6px;top:1221.3px;width:376px;height:371.7px;overflow:hidden;background:repeating-linear-gradient(#f0f0f0 0,#f0f0f0 22.35px,#fbfbfb 22.35px,#fbfbfb 23.75px)">
<div style="left:0px;top:0px;width:376px;height:22.5px;background:#d3d9df"></div>
<div style="left:22px;top:-0.5px;width:201.5px;height:23.5px;border:1px dotted #5e5e5e;box-sizing:border-box"></div>
<svg style="left:1.5px;top:4.98px;" width="19.5" height="12.6"><use href="#tag"/></svg>
<svg style="left:32.5px;top:5.28px;" width="8" height="12"><use href="#aR"/></svg>
<div class="t" style="left:53px;top:-0.42px;height:24px;line-height:24px;white-space:pre;color:#161616;font-size:15px">ibA_HMI工位开关</div>
<div class="t" style="left:329px;top:-0.42px;height:24px;line-height:24px;white-space:pre;color:#161616;font-size:15px">Arra...</div>
<svg style="left:1.5px;top:28.72px;" width="19.5" height="12.6"><use href="#tag"/></svg>
<div class="t" style="left:53px;top:23.32px;height:24px;line-height:24px;white-space:pre;color:#161616;font-size:15px">ir_环轨_点动速度</div>
<div class="t" style="left:329px;top:23.32px;height:24px;line-height:24px;white-space:pre;color:#161616;font-size:15px">Real</div>
<svg style="left:1.5px;top:52.48px;" width="19.5" height="12.6"><use href="#tag"/></svg>
<div class="t" style="left:53px;top:47.07px;height:24px;line-height:24px;white-space:pre;color:#161616;font-size:15px">ir_环轨_回原点速度</div>
<div class="t" style="left:329px;top:47.07px;height:24px;line-height:24px;white-space:pre;color:#161616;font-size:15px">Real</div>
<svg style="left:1.5px;top:76.23px;" width="19.5" height="12.6"><use href="#tag"/></svg>
<div class="t" style="left:53px;top:70.83px;height:24px;line-height:24px;white-space:pre;color:#161616;font-size:15px">ir_环轨_初始位距离</div>
<div class="t" style="left:329px;top:70.83px;height:24px;line-height:24px;white-space:pre;color:#161616;font-size:15px">Real</div>
<svg style="left:1.5px;top:99.98px;" width="19.5" height="12.6"><use href="#tag"/></svg>
<div class="t" style="left:53px;top:94.58px;height:24px;line-height:24px;white-space:pre;color:#161616;font-size:15px">ir_环轨_定位速度</div>
<div class="t" style="left:329px;top:94.58px;height:24px;line-height:24px;white-space:pre;color:#161616;font-size:15px">Real</div>
<svg style="left:1.5px;top:123.73px;" width="19.5" height="12.6"><use href="#tag"/></svg>
<div class="t" style="left:53px;top:118.33px;height:24px;line-height:24px;white-space:pre;color:#161616;font-size:15px">ir_环轨_定位距离</div>
<div class="t" style="left:329px;top:118.33px;height:24px;line-height:24px;white-space:pre;color:#161616;font-size:15px">Real</div>
<svg style="left:1.5px;top:147.47px;" width="19.5" height="12.6"><use href="#tag"/></svg>
<div class="t" style="left:53px;top:142.08px;height:24px;line-height:24px;white-space:pre;color:#161616;font-size:15px">iDi_1#_点胶时间</div>
<div class="t" style="left:329px;top:142.08px;height:24px;line-height:24px;white-space:pre;color:#161616;font-size:15px">DInt</div>
<svg style="left:1.5px;top:171.22px;" width="19.5" height="12.6"><use href="#tag"/></svg>
<div class="t" style="left:53px;top:165.83px;height:24px;line-height:24px;white-space:pre;color:#161616;font-size:15px">iDi_2#_擦胶时间</div>
<div class="t" style="left:329px;top:165.83px;height:24px;line-height:24px;white-space:pre;color:#161616;font-size:15px">DInt</div>
<svg style="left:1.5px;top:194.97px;" width="19.5" height="12.6"><use href="#tag"/></svg>
<div class="t" style="left:53px;top:189.58px;height:24px;line-height:24px;white-space:pre;color:#161616;font-size:15px">iDi_3#_送料保持时间</div>
<div class="t" style="left:329px;top:189.58px;height:24px;line-height:24px;white-space:pre;color:#161616;font-size:15px">DInt</div>
<svg style="left:1.5px;top:218.72px;" width="19.5" height="12.6"><use href="#tag"/></svg>
<div class="t" style="left:53px;top:213.33px;height:24px;line-height:24px;white-space:pre;color:#161616;font-size:15px">iDi_5#_送料保持时间</div>
<div class="t" style="left:329px;top:213.33px;height:24px;line-height:24px;white-space:pre;color:#161616;font-size:15px">DInt</div>
<svg style="left:1.5px;top:242.47px;" width="19.5" height="12.6"><use href="#tag"/></svg>
<div class="t" style="left:53px;top:237.08px;height:24px;line-height:24px;white-space:pre;color:#161616;font-size:15px">ir_4#_JOG速度</div>
<div class="t" style="left:329px;top:237.08px;height:24px;line-height:24px;white-space:pre;color:#161616;font-size:15px">Real</div>
<svg style="left:1.5px;top:266.22px;" width="19.5" height="12.6"><use href="#tag"/></svg>
<div class="t" style="left:53px;top:260.82px;height:24px;line-height:24px;white-space:pre;color:#161616;font-size:15px">ir_4#_定位速度</div>
<div class="t" style="left:329px;top:260.82px;height:24px;line-height:24px;white-space:pre;color:#161616;font-size:15px">Real</div>
<svg style="left:1.5px;top:289.97px;" width="19.5" height="12.6"><use href="#tag"/></svg>
<div class="t" style="left:53px;top:284.57px;height:24px;line-height:24px;white-space:pre;color:#161616;font-size:15px">ior_4#_取料位</div>
<div class="t" style="left:329px;top:284.57px;height:24px;line-height:24px;white-space:pre;color:#161616;font-size:15px">Real</div>
<svg style="left:1.5px;top:313.72px;" width="19.5" height="12.6"><use href="#tag"/></svg>
<div class="t" style="left:53px;top:308.32px;height:24px;line-height:24px;white-space:pre;color:#161616;font-size:15px">ior_4#_放料位</div>
<div class="t" style="left:329px;top:308.32px;height:24px;line-height:24px;white-space:pre;color:#161616;font-size:15px">Real</div>
<svg style="left:1.5px;top:337.47px;" width="19.5" height="12.6"><use href="#tag"/></svg>
<div class="t" style="left:53px;top:332.07px;height:24px;line-height:24px;white-space:pre;color:#161616;font-size:15px">ir_6#_JOG速度</div>
<div class="t" style="left:329px;top:332.07px;height:24px;line-height:24px;white-space:pre;color:#161616;font-size:15px">Real</div>
<svg style="left:1.5px;top:361.22px;" width="19.5" height="12.6"><use href="#tag"/></svg>
<div class="t" style="left:53px;top:355.82px;height:24px;line-height:24px;white-space:pre;color:#161616;font-size:15px">ir_6#_定位速度</div>
<div class="t" style="left:329px;top:355.82px;height:24px;line-height:24px;white-space:pre;color:#161616;font-size:15px">Real</div>
</div>
<div style="left:380.6px;top:1221.3px;width:22.4px;height:371.7px;background:#c3c3c3;border-left:1px solid #a6a6a6;box-sizing:border-box"></div>
<div style="left:382px;top:1221.5px;width:20px;height:21px;background:linear-gradient(#f8f8f8,#e2e2e2);border:1px solid #9c9c9c;box-sizing:border-box"></div>
<svg style="left:382px;top:1221.5px;" width="20" height="21" viewBox="0 0 20 21"><path d="M5.0 13.0l5-5 5 5" stroke="#4a4a4a" stroke-width="2.2" fill="none"/></svg>
<div style="left:382px;top:1575.5px;width:20px;height:21px;background:linear-gradient(#f8f8f8,#e2e2e2);border:1px solid #9c9c9c;box-sizing:border-box"></div>
<svg style="left:382px;top:1575.5px;" width="20" height="21" viewBox="0 0 20 21"><path d="M5.0 8.0l5 5 5-5" stroke="#4a4a4a" stroke-width="2.2" fill="none"/></svg>
<div style="left:382px;top:1246.5px;width:20.4px;height:109px;background:linear-gradient(90deg,#f6f6f6,#dedede);border:1px solid #9c9c9c;box-sizing:border-box"></div>
<svg style="left:387px;top:1296px;" width="11" height="10" viewBox="0 0 11 10"><path d="M0 1h11M0 4h11M0 7h11M0 10h11" stroke="#6a6a6a" stroke-width="1"/></svg>
<div style="left:402.9px;top:70.3px;width:0.7px;height:1523px;background:#5a5a5a"></div>
<div style="left:403.6px;top:70.3px;width:3.5px;height:1523px;background:#1c2340"></div>
<div style="left:406.7px;top:68.8px;width:1157.9px;height:31.5px;background:#2b3350"></div>
<div class="t" style="left:413.7px;top:73.6px;height:24px;line-height:24px;white-space:pre;color:#fff;font-size:19px;-webkit-text-stroke:.45px #fff;letter-spacing:.15px;">20200920_sn</div>
<div class="t" style="left:560.2px;top:73.6px;height:24px;line-height:24px;white-space:pre;color:#fff;font-size:19px;-webkit-text-stroke:.45px #fff;letter-spacing:-1.85px;word-spacing:3px;">PLC_1 [CPU 1215C DC/DC/DC]</div>
<div class="t" style="left:825.5px;top:73.6px;height:24px;line-height:24px;white-space:pre;color:#fff;font-size:19px;-webkit-text-stroke:.45px #fff;font-weight:bold;font-size:18.5px;">程序块</div>
<div class="t" style="left:913.5px;top:73.6px;height:24px;line-height:24px;white-space:pre;color:#fff;font-size:19px;-webkit-text-stroke:.45px #fff;letter-spacing:-1.6px;">HMI</div>
<div class="t" style="left:975px;top:73.6px;height:24px;line-height:24px;white-space:pre;color:#fff;font-size:19px;-webkit-text-stroke:.45px #fff;letter-spacing:-.54px;">HMI_可保持 [DB168]</div>
<svg style="left:540.7px;top:79.5px;" width="8" height="12" viewBox="0 0 8 12"><path d="M.5 .5l6.5 5.5-6.5 5.5z" fill="#fff"/></svg>
<svg style="left:806.8px;top:79.5px;" width="8" height="12" viewBox="0 0 8 12"><path d="M.5 .5l6.5 5.5-6.5 5.5z" fill="#fff"/></svg>
<svg style="left:894.8px;top:79.5px;" width="8" height="12" viewBox="0 0 8 12"><path d="M.5 .5l6.5 5.5-6.5 5.5z" fill="#fff"/></svg>
<svg style="left:955.8px;top:79.5px;" width="8" height="12" viewBox="0 0 8 12"><path d="M.5 .5l6.5 5.5-6.5 5.5z" fill="#fff"/></svg>
<div style="left:407.1px;top:100px;width:1157.9px;height:4px;background:#ececec"></div>
<div style="left:407.1px;top:104px;width:1157.9px;height:31px;background:#c9c9c9;border-bottom:1px solid #8c8c8c;box-sizing:border-box"></div>
<div style="left:407.1px;top:135px;width:1123.9px;height:34.6px;background:#ebebeb"></div>
<div class="t" style="left:617.4px;top:140.6px;height:24px;line-height:24px;white-space:pre;color:#1a1a1a;font-size:14.9px">保持实际值</div>
<div class="t" style="left:747px;top:140.6px;height:24px;line-height:24px;white-space:pre;color:#1a1a1a;font-size:14.9px">快照</div>
<div class="t" style="left:862px;top:140.6px;height:24px;line-height:24px;white-space:pre;color:#1a1a1a;font-size:14.9px">将快照值复制到起始值中</div>
<div class="t" style="left:1112px;top:140.6px;height:24px;line-height:24px;white-space:pre;color:#1a1a1a;font-size:14.9px">将起始值加载为实际值</div>
<div style="left:472.7px;top:138px;width:0px;height:28px;border-left:1px dotted #9a9a9a"></div>
<div style="left:569px;top:138px;width:0px;height:28px;border-left:1px dotted #9a9a9a"></div>
<div style="left:605px;top:138px;width:0px;height:28px;border-left:1px dotted #9a9a9a"></div>
<div style="left:735.3px;top:138px;width:0px;height:28px;border-left:1px dotted #9a9a9a"></div>
<div style="left:850.4px;top:138px;width:0px;height:28px;border-left:1px dotted #9a9a9a"></div>
<div style="left:1100.4px;top:138px;width:0px;height:28px;border-left:1px dotted #9a9a9a"></div>
<div style="left:704.7px;top:139px;width:26.2px;height:26px;background:#c3d1e2"></div>
<svg style="left:416px;top:141px;" width="22" height="22" viewBox="0 0 22 22"><path d="M1 9h10M1 13h13M1 17h10" stroke="#8f8f8f" stroke-width="2.4"/><path d="M15 1v10M10 6h10M11.5 2.5l7 7M18.5 2.5l-7 7" stroke="#b4b4b4" stroke-width="1.2"/></svg>
<svg style="left:446px;top:141px;" width="22" height="22" viewBox="0 0 22 22"><path d="M1 9h10M1 13h13M1 17h10" stroke="#8f8f8f" stroke-width="2.4"/><path d="M15 1v10M10 6h10M11.5 2.5l7 7M18.5 2.5l-7 7" stroke="#b4b4b4" stroke-width="1.2"/></svg>
<svg style="left:482px;top:141px;" width="21" height="22" viewBox="0 0 21 22"><path d="M2 3v9c0 2.6 8 2.6 8 0V3z" fill="#8f8f8f"/><ellipse cx="6" cy="3" rx="4" ry="1.8" fill="#b8b8b8"/><path d="M12 13c4-2 7 0 6 4M12 13l3-2M12 13l3 2" stroke="#8f8f8f" stroke-width="1.6" fill="none"/></svg>
<svg style="left:512px;top:141px;" width="22" height="22" viewBox="0 0 22 22"><path d="M2 4v10c0 3 10 3 10 0V4z" fill="#8f8f8f"/><ellipse cx="7" cy="4" rx="5" ry="2" fill="#b8b8b8"/><path d="M8 14l4 5 8-10" stroke="#777" stroke-width="2.6" fill="none"/></svg>
<svg style="left:542px;top:143px;" width="21" height="19" viewBox="0 0 21 19"><path d="M1 3h19M6 9h14M6 15h14M1 9h3M1 15h3" stroke="#707070" stroke-width="2.6"/></svg>
<svg style="left:578px;top:141px;" width="22" height="22" viewBox="0 0 22 22"><circle cx="5" cy="5" r="3" fill="none" stroke="#707070" stroke-width="1.6"/><circle cx="14" cy="5" r="3" fill="none" stroke="#707070" stroke-width="1.6"/><path d="M8 5h3M17 5l3-2" stroke="#707070" stroke-width="1.4"/><path d="M11 11v8l8-4z" fill="#c8c8c8" stroke="#a8a8a8"/></svg>
<svg style="left:708px;top:142px;" width="21" height="21" viewBox="0 0 21 21"><path d="M2 4v11c0 3 10 3 10 0V4z" fill="#c9ced6"/><ellipse cx="7" cy="4" rx="5" ry="2.2" fill="#e4e7ec"/><rect x="12" y="11" width="7" height="7" rx="1" fill="#aeb4bd"/><path d="M13.5 11V9a2 2 0 0 1 4 0v2" stroke="#aeb4bd" fill="none" stroke-width="1.4"/></svg>
<svg style="left:793px;top:140px;" width="22" height="23" viewBox="0 0 22 23"><rect x="1" y="3" width="14" height="9" fill="#8f8f8f"/><circle cx="9" cy="7.5" r="2.6" fill="#e4e4e4"/><rect x="2" y="1.5" width="4" height="2" fill="#8f8f8f"/><path d="M15 21V10M10.5 14l4.5-5 4.5 5" stroke="#8f8f8f" stroke-width="2.4" fill="none"/></svg>
<svg style="left:823px;top:140px;" width="22" height="23" viewBox="0 0 22 23"><rect x="1" y="3" width="14" height="9" fill="#8f8f8f"/><circle cx="9" cy="7.5" r="2.6" fill="#e4e4e4"/><rect x="2" y="1.5" width="4" height="2" fill="#8f8f8f"/><path d="M15 9v11M10.5 16l4.5 5 4.5-5" stroke="#8f8f8f" stroke-width="2.4" fill="none"/></svg>
<svg style="left:1043.5px;top:141px;" width="22" height="22" viewBox="0 0 22 22"><path d="M2 4v11c0 3 10 3 10 0V4z" fill="#8f8f8f"/><ellipse cx="7" cy="4" rx="5" ry="2.2" fill="#b8b8b8"/><path d="M21 14h-8M16 10l-4 4 4 4" stroke="#a0a0a0" stroke-width="2.4" fill="none"/></svg>
<svg style="left:1073px;top:141px;" width="22" height="22" viewBox="0 0 22 22"><path d="M2 4v11c0 3 10 3 10 0V4z" fill="#8f8f8f"/><ellipse cx="7" cy="4" rx="5" ry="2.2" fill="#b8b8b8"/><path d="M21 14h-8M16 10l-4 4 4 4" stroke="#a0a0a0" stroke-width="2.4" fill="none"/></svg>
<svg style="left:1278px;top:141px;" width="22" height="22" viewBox="0 0 22 22"><path d="M2 4v11c0 3 10 3 10 0V4z" fill="#8f8f8f"/><ellipse cx="7" cy="4" rx="5" ry="2.2" fill="#b8b8b8"/><path d="M16 8v9M12 14l4 4 4-4" stroke="#a0a0a0" stroke-width="2.2" fill="none"/></svg>
<svg style="left:1307.5px;top:141px;" width="22" height="22" viewBox="0 0 22 22"><path d="M2 4v11c0 3 10 3 10 0V4z" fill="#8f8f8f"/><ellipse cx="7" cy="4" rx="5" ry="2.2" fill="#b8b8b8"/><path d="M16 8v9M12 14l4 4 4-4" stroke="#a0a0a0" stroke-width="2.2" fill="none"/></svg>
<div style="left:407.1px;top:169.6px;width:1123.9px;height:26.6px;background:#dddddd"></div>
<div class="t" style="left:438.6px;top:170.2px;height:24px;line-height:24px;white-space:pre;color:#111;font-size:18.5px;font-weight:bold;letter-spacing:-.7px">HMI_可保持</div>
<div style="left:407.1px;top:196.2px;width:1123.9px;height:22.4px;background:linear-gradient(#eef1f6,#dfe4ec 60%,#d4dae4);border-top:1px solid #c4c8d0;border-bottom:1px solid #b4b8c0;box-sizing:border-box"></div>
<div style="left:407.1px;top:197px;width:29.3px;height:21px;background:linear-gradient(#ececec,#d2d2d2)"></div>
<div style="left:436.4px;top:197px;width:1px;height:21px;background:#b8bcc6"></div>
<div style="left:437.4px;top:197px;width:1.4px;height:21px;background:#fafbfd"></div>
<div style="left:460.5px;top:197px;width:1px;height:21px;background:#b8bcc6"></div>
<div style="left:461.5px;top:197px;width:1.4px;height:21px;background:#fafbfd"></div>
<div style="left:673.6px;top:197px;width:1px;height:21px;background:#b8bcc6"></div>
<div style="left:674.6px;top:197px;width:1.4px;height:21px;background:#fafbfd"></div>
<div style="left:822.8px;top:197px;width:1px;height:21px;background:#b8bcc6"></div>
<div style="left:823.8px;top:197px;width:1.4px;height:21px;background:#fafbfd"></div>
<div style="left:948.3px;top:197px;width:1px;height:21px;background:#b8bcc6"></div>
<div style="left:949.3px;top:197px;width:1.4px;height:21px;background:#fafbfd"></div>
<div style="left:1035.5px;top:197px;width:1px;height:21px;background:#b8bcc6"></div>
<div style="left:1036.5px;top:197px;width:1.4px;height:21px;background:#fafbfd"></div>
<div style="left:1134.9px;top:197px;width:1px;height:21px;background:#b8bcc6"></div>
<div style="left:1135.9px;top:197px;width:1.4px;height:21px;background:#fafbfd"></div>
<div style="left:1197.7px;top:197px;width:1px;height:21px;background:#b8bcc6"></div>
<div style="left:1198.7px;top:197px;width:1.4px;height:21px;background:#fafbfd"></div>
<div style="left:1284.9px;top:197px;width:1px;height:21px;background:#b8bcc6"></div>
<div style="left:1285.9px;top:197px;width:1.4px;height:21px;background:#fafbfd"></div>
<div style="left:1372.8px;top:197px;width:1px;height:21px;background:#b8bcc6"></div>
<div style="left:1373.8px;top:197px;width:1.4px;height:21px;background:#fafbfd"></div>
<div class="t" style="left:467px;top:195.6px;height:24px;line-height:24px;white-space:pre;color:#2a2a2a;font-size:15px;letter-spacing:.6px;">名称</div>
<div class="t" style="left:679.5px;top:195.6px;height:24px;line-height:24px;white-space:pre;color:#2a2a2a;font-size:15px;letter-spacing:.6px;">数据类型</div>
<div class="t" style="left:829px;top:195.6px;height:24px;line-height:24px;white-space:pre;color:#2a2a2a;font-size:15px;letter-spacing:.6px;">起始值</div>
<div class="t" style="left:954.5px;top:195.6px;height:24px;line-height:24px;white-space:pre;color:#2a2a2a;font-size:15px;letter-spacing:.6px;">保持</div>
<div class="t" style="left:1041.5px;top:195.6px;height:24px;line-height:24px;white-space:pre;color:#2a2a2a;font-size:15px;letter-spacing:-.2px;">从 <span style="letter-spacing:-1px">HMI/OPC..</span></div>
<div class="t" style="left:1141px;top:195.6px;height:24px;line-height:24px;white-space:pre;color:#2a2a2a;font-size:15px;letter-spacing:-.2px;">从 <span style="letter-spacing:-1px">H...</span></div>
<div class="t" style="left:1204px;top:195.6px;height:24px;line-height:24px;white-space:pre;color:#2a2a2a;font-size:15px;letter-spacing:-.2px;">在 <span style="letter-spacing:-1px">HMI ...</span></div>
<div class="t" style="left:1291px;top:195.6px;height:24px;line-height:24px;white-space:pre;color:#2a2a2a;font-size:15px;letter-spacing:.6px;">设定值</div>
<div class="t" style="left:1379px;top:195.6px;height:24px;line-height:24px;white-space:pre;color:#2a2a2a;font-size:15px;letter-spacing:.6px;">注释</div>
<div style="left:407.1px;top:218.6px;width:1123.9px;height:1.6px;background:#f2f2f2"></div>
<div style="left:407.1px;top:220px;width:1123.9px;height:1342px;overflow:hidden;background:#e2e2e2">
<div style="left:416.7px;top:47.5px;width:125.5px;height:688.75px;background:#f0f0f0"></div>
<div style="left:878.8px;top:23.75px;width:246.1px;height:712.5px;background:#f2f2f2"></div>
<div style="left:0px;top:0px;width:30.3px;height:1342px;background:#cccccc"></div>
<div style="left:0px;top:641.25px;width:1123.9px;height:23.75px;background:#d3d9df"></div>
<div style="left:0px;top:641.25px;width:30.3px;height:23.75px;background:#bcc4cc"></div>
<div style="left:0;top:0;width:1123.9px;height:1342px;background:repeating-linear-gradient(transparent 0,transparent 22.3px,#f7f7f7 22.3px,#f7f7f7 23.75px)"></div>
<div style="left:54.2px;top:0px;width:1.5px;height:1342px;background:#f4f4f4"></div>
<div style="left:267.3px;top:0px;width:1.5px;height:1342px;background:#f4f4f4"></div>
<div style="left:416.5px;top:0px;width:1.5px;height:1342px;background:#f4f4f4"></div>
<div style="left:542px;top:0px;width:1.5px;height:1342px;background:#f4f4f4"></div>
<div style="left:629.2px;top:0px;width:1.5px;height:1342px;background:#f4f4f4"></div>
<div style="left:728.6px;top:0px;width:1.5px;height:1342px;background:#f4f4f4"></div>
<div style="left:791.4px;top:0px;width:1.5px;height:1342px;background:#f4f4f4"></div>
<div style="left:878.6px;top:0px;width:1.5px;height:1342px;background:#f4f4f4"></div>
<div style="left:966.5px;top:0px;width:1.5px;height:1342px;background:#f4f4f4"></div>
<div style="left:29.7px;top:0px;width:1.1px;height:1342px;background:#bcbcbc"></div>
<div style="left:55.7px;top:23.75px;width:23px;height:712.5px;background:rgba(255,255,255,.28)"></div>
<div class="t" style="left:5.9px;top:-0.53px;height:24px;line-height:24px;white-space:pre;color:#808080;font-size:15px">1</div>
<svg style="left:32.9px;top:4.67px;" width="19.5" height="12.6"><use href="#tag"/></svg>
<svg style="left:61.4px;top:7.47px;" width="12" height="8"><use href="#aD"/></svg>
<div class="t" style="left:83.9px;top:-0.53px;height:24px;line-height:24px;white-space:pre;color:#161616;font-size:15px;letter-spacing:.2px">Static</div>
<div class="t" style="left:272.7px;top:-0.53px;height:24px;line-height:24px;white-space:pre;color:#161616;font-size:15px;letter-spacing:-.05px"></div>
<svg style="left:576.2px;top:1.97px;" width="18.4" height="18.4"><use href="#ckd"/></svg>
<svg style="left:669.7px;top:1.97px;" width="18.4" height="18.4"><use href="#ckd"/></svg>
<svg style="left:751.3px;top:1.97px;" width="18.4" height="18.4"><use href="#ckd"/></svg>
<svg style="left:826px;top:1.97px;" width="18.4" height="18.4"><use href="#ckd"/></svg>
<svg style="left:913.5px;top:1.97px;" width="18.4" height="18.4"><use href="#ckd"/></svg>
<div class="t" style="left:5.9px;top:23.23px;height:24px;line-height:24px;white-space:pre;color:#808080;font-size:15px">2</div>
<svg style="left:32.9px;top:28.43px;" width="19.5" height="12.6"><use href="#tag"/></svg>
<div style="left:61.9px;top:30.43px;width:6.4px;height:6.4px;background:#2a4bd0"></div>
<svg style="left:85.6px;top:28.73px;" width="8" height="12"><use href="#aR"/></svg>
<div class="t" style="left:106.5px;top:23.23px;height:24px;line-height:24px;white-space:pre;color:#161616;font-size:15px">ibA_HMI工位开关</div>
<div class="t" style="left:272.7px;top:23.23px;height:24px;line-height:24px;white-space:pre;color:#161616;font-size:15px;letter-spacing:-.05px">Array[0..15] of Bool</div>
<svg style="left:576.2px;top:25.73px;" width="18.4" height="18.4"><use href="#ck1"/></svg>
<svg style="left:669.7px;top:25.73px;" width="18.4" height="18.4"><use href="#ck1"/></svg>
<svg style="left:751.3px;top:25.73px;" width="18.4" height="18.4"><use href="#ck1"/></svg>
<svg style="left:826px;top:25.73px;" width="18.4" height="18.4"><use href="#ck1"/></svg>
<svg style="left:913.5px;top:25.73px;" width="18.4" height="18.4"><use href="#ck0"/></svg>
<div class="t" style="left:5.9px;top:46.98px;height:24px;line-height:24px;white-space:pre;color:#808080;font-size:15px">3</div>
<svg style="left:32.9px;top:52.18px;" width="19.5" height="12.6"><use href="#tag"/></svg>
<div style="left:61.9px;top:54.18px;width:6.4px;height:6.4px;background:#2a4bd0"></div>
<div class="t" style="left:272.7px;top:46.98px;height:24px;line-height:24px;white-space:pre;color:#161616;font-size:15px;letter-spacing:-.05px">Real</div>
<div class="t" style="left:422.8px;top:46.98px;height:24px;line-height:24px;white-space:pre;color:#8a8a8a;font-size:15px">0.0</div>
<svg style="left:576.2px;top:49.48px;" width="18.4" height="18.4"><use href="#ck1"/></svg>
<svg style="left:669.7px;top:49.48px;" width="18.4" height="18.4"><use href="#ck1"/></svg>
<svg style="left:751.3px;top:49.48px;" width="18.4" height="18.4"><use href="#ck1"/></svg>
<svg style="left:826px;top:49.48px;" width="18.4" height="18.4"><use href="#ck1"/></svg>
<svg style="left:913.5px;top:49.48px;" width="18.4" height="18.4"><use href="#ck0"/></svg>
<div class="t" style="left:5.9px;top:70.72px;height:24px;line-height:24px;white-space:pre;color:#808080;font-size:15px">4</div>
<svg style="left:32.9px;top:75.92px;" width="19.5" height="12.6"><use href="#tag"/></svg>
<div style="left:61.9px;top:77.92px;width:6.4px;height:6.4px;background:#2a4bd0"></div>
<div class="t" style="left:272.7px;top:70.72px;height:24px;line-height:24px;white-space:pre;color:#161616;font-size:15px;letter-spacing:-.05px">Real</div>
<div class="t" style="left:422.8px;top:70.72px;height:24px;line-height:24px;white-space:pre;color:#8a8a8a;font-size:15px">0.0</div>
<svg style="left:576.2px;top:73.22px;" width="18.4" height="18.4"><use href="#ck1"/></svg>
<svg style="left:669.7px;top:73.22px;" width="18.4" height="18.4"><use href="#ck1"/></svg>
<svg style="left:751.3px;top:73.22px;" width="18.4" height="18.4"><use href="#ck1"/></svg>
<svg style="left:826px;top:73.22px;" width="18.4" height="18.4"><use href="#ck1"/></svg>
<svg style="left:913.5px;top:73.22px;" width="18.4" height="18.4"><use href="#ck0"/></svg>
<div class="t" style="left:5.9px;top:94.47px;height:24px;line-height:24px;white-space:pre;color:#808080;font-size:15px">5</div>
<svg style="left:32.9px;top:99.67px;" width="19.5" height="12.6"><use href="#tag"/></svg>
<div style="left:61.9px;top:101.67px;width:6.4px;height:6.4px;background:#2a4bd0"></div>
<div class="t" style="left:272.7px;top:94.47px;height:24px;line-height:24px;white-space:pre;color:#161616;font-size:15px;letter-spacing:-.05px">Real</div>
<div class="t" style="left:422.8px;top:94.47px;height:24px;line-height:24px;white-space:pre;color:#8a8a8a;font-size:15px">0.0</div>
<svg style="left:576.2px;top:96.97px;" width="18.4" height="18.4"><use href="#ck1"/></svg>
<svg style="left:669.7px;top:96.97px;" width="18.4" height="18.4"><use href="#ck1"/></svg>
<svg style="left:751.3px;top:96.97px;" width="18.4" height="18.4"><use href="#ck1"/></svg>
<svg style="left:826px;top:96.97px;" width="18.4" height="18.4"><use href="#ck1"/></svg>
<svg style="left:913.5px;top:96.97px;" width="18.4" height="18.4"><use href="#ck0"/></svg>
<div class="t" style="left:5.9px;top:118.22px;height:24px;line-height:24px;white-space:pre;color:#808080;font-size:15px">6</div>
<svg style="left:32.9px;top:123.42px;" width="19.5" height="12.6"><use href="#tag"/></svg>
<div style="left:61.9px;top:125.42px;width:6.4px;height:6.4px;background:#2a4bd0"></div>
<div class="t" style="left:272.7px;top:118.22px;height:24px;line-height:24px;white-space:pre;color:#161616;font-size:15px;letter-spacing:-.05px">Real</div>
<div class="t" style="left:422.8px;top:118.22px;height:24px;line-height:24px;white-space:pre;color:#8a8a8a;font-size:15px">0.0</div>
<svg style="left:576.2px;top:120.72px;" width="18.4" height="18.4"><use href="#ck1"/></svg>
<svg style="left:669.7px;top:120.72px;" width="18.4" height="18.4"><use href="#ck1"/></svg>
<svg style="left:751.3px;top:120.72px;" width="18.4" height="18.4"><use href="#ck1"/></svg>
<svg style="left:826px;top:120.72px;" width="18.4" height="18.4"><use href="#ck1"/></svg>
<svg style="left:913.5px;top:120.72px;" width="18.4" height="18.4"><use href="#ck0"/></svg>
<div class="t" style="left:5.9px;top:141.97px;height:24px;line-height:24px;white-space:pre;color:#808080;font-size:15px">7</div>
<svg style="left:32.9px;top:147.17px;" width="19.5" height="12.6"><use href="#tag"/></svg>
<div style="left:61.9px;top:149.17px;width:6.4px;height:6.4px;background:#2a4bd0"></div>
<div class="t" style="left:272.7px;top:141.97px;height:24px;line-height:24px;white-space:pre;color:#161616;font-size:15px;letter-spacing:-.05px">Real</div>
<div class="t" style="left:422.8px;top:141.97px;height:24px;line-height:24px;white-space:pre;color:#8a8a8a;font-size:15px">0.0</div>
<svg style="left:576.2px;top:144.47px;" width="18.4" height="18.4"><use href="#ck1"/></svg>
<svg style="left:669.7px;top:144.47px;" width="18.4" height="18.4"><use href="#ck1"/></svg>
<svg style="left:751.3px;top:144.47px;" width="18.4" height="18.4"><use href="#ck1"/></svg>
<svg style="left:826px;top:144.47px;" width="18.4" height="18.4"><use href="#ck1"/></svg>
<svg style="left:913.5px;top:144.47px;" width="18.4" height="18.4"><use href="#ck0"/></svg>
<div class="t" style="left:5.9px;top:165.72px;height:24px;line-height:24px;white-space:pre;color:#808080;font-size:15px">8</div>
<svg style="left:32.9px;top:170.92px;" width="19.5" height="12.6"><use href="#tag"/></svg>
<div style="left:61.9px;top:172.92px;width:6.4px;height:6.4px;background:#2a4bd0"></div>
<div class="t" style="left:272.7px;top:165.72px;height:24px;line-height:24px;white-space:pre;color:#161616;font-size:15px;letter-spacing:-.05px">DInt</div>
<div class="t" style="left:422.8px;top:165.72px;height:24px;line-height:24px;white-space:pre;color:#8a8a8a;font-size:15px">0</div>
<svg style="left:576.2px;top:168.22px;" width="18.4" height="18.4"><use href="#ck1"/></svg>
<svg style="left:669.7px;top:168.22px;" width="18.4" height="18.4"><use href="#ck1"/></svg>
<svg style="left:751.3px;top:168.22px;" width="18.4" height="18.4"><use href="#ck1"/></svg>
<svg style="left:826px;top:168.22px;" width="18.4" height="18.4"><use href="#ck1"/></svg>
<svg style="left:913.5px;top:168.22px;" width="18.4" height="18.4"><use href="#ck0"/></svg>
<div class="t" style="left:5.9px;top:189.47px;height:24px;line-height:24px;white-space:pre;color:#808080;font-size:15px">9</div>
<svg style="left:32.9px;top:194.67px;" width="19.5" height="12.6"><use href="#tag"/></svg>
<div style="left:61.9px;top:196.67px;width:6.4px;height:6.4px;background:#2a4bd0"></div>
<div class="t" style="left:272.7px;top:189.47px;height:24px;line-height:24px;white-space:pre;color:#161616;font-size:15px;letter-spacing:-.05px">DInt</div>
<div class="t" style="left:422.8px;top:189.47px;height:24px;line-height:24px;white-space:pre;color:#8a8a8a;font-size:15px">0</div>
<svg style="left:576.2px;top:191.97px;" width="18.4" height="18.4"><use href="#ck1"/></svg>
<svg style="left:669.7px;top:191.97px;" width="18.4" height="18.4"><use href="#ck1"/></svg>
<svg style="left:751.3px;top:191.97px;" width="18.4" height="18.4"><use href="#ck1"/></svg>
<svg style="left:826px;top:191.97px;" width="18.4" height="18.4"><use href="#ck1"/></svg>
<svg style="left:913.5px;top:191.97px;" width="18.4" height="18.4"><use href="#ck0"/></svg>
<div class="t" style="left:5.9px;top:213.22px;height:24px;line-height:24px;white-space:pre;color:#808080;font-size:15px">10</div>
<svg style="left:32.9px;top:218.42px;" width="19.5" height="12.6"><use href="#tag"/></svg>
<div style="left:61.9px;top:220.42px;width:6.4px;height:6.4px;background:#2a4bd0"></div>
<div class="t" style="left:272.7px;top:213.22px;height:24px;line-height:24px;white-space:pre;color:#161616;font-size:15px;letter-spacing:-.05px">DInt</div>
<div class="t" style="left:422.8px;top:213.22px;height:24px;line-height:24px;white-space:pre;color:#8a8a8a;font-size:15px">0</div>
<svg style="left:576.2px;top:215.72px;" width="18.4" height="18.4"><use href="#ck1"/></svg>
<svg style="left:669.7px;top:215.72px;" width="18.4" height="18.4"><use href="#ck1"/></svg>
<svg style="left:751.3px;top:215.72px;" width="18.4" height="18.4"><use href="#ck1"/></svg>
<svg style="left:826px;top:215.72px;" width="18.4" height="18.4"><use href="#ck1"/></svg>
<svg style="left:913.5px;top:215.72px;" width="18.4" height="18.4"><use href="#ck0"/></svg>
<div class="t" style="left:5.9px;top:236.97px;height:24px;line-height:24px;white-space:pre;color:#808080;font-size:15px">11</div>
<svg style="left:32.9px;top:242.17px;" width="19.5" height="12.6"><use href="#tag"/></svg>
<div style="left:61.9px;top:244.17px;width:6.4px;height:6.4px;background:#2a4bd0"></div>
<div class="t" style="left:272.7px;top:236.97px;height:24px;line-height:24px;white-space:pre;color:#161616;font-size:15px;letter-spacing:-.05px">DInt</div>
<div class="t" style="left:422.8px;top:236.97px;height:24px;line-height:24px;white-space:pre;color:#8a8a8a;font-size:15px">0</div>
<svg style="left:576.2px;top:239.47px;" width="18.4" height="18.4"><use href="#ck1"/></svg>
<svg style="left:669.7px;top:239.47px;" width="18.4" height="18.4"><use href="#ck1"/></svg>
<svg style="left:751.3px;top:239.47px;" width="18.4" height="18.4"><use href="#ck1"/></svg>
<svg style="left:826px;top:239.47px;" width="18.4" height="18.4"><use href="#ck1"/></svg>
<svg style="left:913.5px;top:239.47px;" width="18.4" height="18.4"><use href="#ck0"/></svg>
<div class="t" style="left:5.9px;top:260.73px;height:24px;line-height:24px;white-space:pre;color:#808080;font-size:15px">12</div>
<svg style="left:32.9px;top:265.93px;" width="19.5" height="12.6"><use href="#tag"/></svg>
<div style="left:61.9px;top:267.93px;width:6.4px;height:6.4px;background:#2a4bd0"></div>
<div class="t" style="left:272.7px;top:260.73px;height:24px;line-height:24px;white-space:pre;color:#161616;font-size:15px;letter-spacing:-.05px">Real</div>
<div class="t" style="left:422.8px;top:260.73px;height:24px;line-height:24px;white-space:pre;color:#8a8a8a;font-size:15px">0.0</div>
<svg style="left:576.2px;top:263.23px;" width="18.4" height="18.4"><use href="#ck1"/></svg>
<svg style="left:669.7px;top:263.23px;" width="18.4" height="18.4"><use href="#ck1"/></svg>
<svg style="left:751.3px;top:263.23px;" width="18.4" height="18.4"><use href="#ck1"/></svg>
<svg style="left:826px;top:263.23px;" width="18.4" height="18.4"><use href="#ck1"/></svg>
<svg style="left:913.5px;top:263.23px;" width="18.4" height="18.4"><use href="#ck0"/></svg>
<div class="t" style="left:5.9px;top:284.48px;height:24px;line-height:24px;white-space:pre;color:#808080;font-size:15px">13</div>
<svg style="left:32.9px;top:289.68px;" width="19.5" height="12.6"><use href="#tag"/></svg>
<div style="left:61.9px;top:291.68px;width:6.4px;height:6.4px;background:#2a4bd0"></div>
<div class="t" style="left:272.7px;top:284.48px;height:24px;line-height:24px;white-space:pre;color:#161616;font-size:15px;letter-spacing:-.05px">Real</div>
<div class="t" style="left:422.8px;top:284.48px;height:24px;line-height:24px;white-space:pre;color:#8a8a8a;font-size:15px">0.0</div>
<svg style="left:576.2px;top:286.98px;" width="18.4" height="18.4"><use href="#ck1"/></svg>
<svg style="left:669.7px;top:286.98px;" width="18.4" height="18.4"><use href="#ck1"/></svg>
<svg style="left:751.3px;top:286.98px;" width="18.4" height="18.4"><use href="#ck1"/></svg>
<svg style="left:826px;top:286.98px;" width="18.4" height="18.4"><use href="#ck1"/></svg>
<svg style="left:913.5px;top:286.98px;" width="18.4" height="18.4"><use href="#ck0"/></svg>
<div class="t" style="left:5.9px;top:308.23px;height:24px;line-height:24px;white-space:pre;color:#808080;font-size:15px">14</div>
<svg style="left:32.9px;top:313.43px;" width="19.5" height="12.6"><use href="#tag"/></svg>
<div style="left:61.9px;top:315.43px;width:6.4px;height:6.4px;background:#2a4bd0"></div>
<div class="t" style="left:272.7px;top:308.23px;height:24px;line-height:24px;white-space:pre;color:#161616;font-size:15px;letter-spacing:-.05px">Real</div>
<div class="t" style="left:422.8px;top:308.23px;height:24px;line-height:24px;white-space:pre;color:#8a8a8a;font-size:15px">0.0</div>
<svg style="left:576.2px;top:310.73px;" width="18.4" height="18.4"><use href="#ck1"/></svg>
<svg style="left:669.7px;top:310.73px;" width="18.4" height="18.4"><use href="#ck1"/></svg>
<svg style="left:751.3px;top:310.73px;" width="18.4" height="18.4"><use href="#ck1"/></svg>
<svg style="left:826px;top:310.73px;" width="18.4" height="18.4"><use href="#ck1"/></svg>
<svg style="left:913.5px;top:310.73px;" width="18.4" height="18.4"><use href="#ck0"/></svg>
<div class="t" style="left:5.9px;top:331.98px;height:24px;line-height:24px;white-space:pre;color:#808080;font-size:15px">15</div>
<svg style="left:32.9px;top:337.18px;" width="19.5" height="12.6"><use href="#tag"/></svg>
<div style="left:61.9px;top:339.18px;width:6.4px;height:6.4px;background:#2a4bd0"></div>
<div class="t" style="left:272.7px;top:331.98px;height:24px;line-height:24px;white-space:pre;color:#161616;font-size:15px;letter-spacing:-.05px">Real</div>
<div class="t" style="left:422.8px;top:331.98px;height:24px;line-height:24px;white-space:pre;color:#8a8a8a;font-size:15px">0.0</div>
<svg style="left:576.2px;top:334.48px;" width="18.4" height="18.4"><use href="#ck1"/></svg>
<svg style="left:669.7px;top:334.48px;" width="18.4" height="18.4"><use href="#ck1"/></svg>
<svg style="left:751.3px;top:334.48px;" width="18.4" height="18.4"><use href="#ck1"/></svg>
<svg style="left:826px;top:334.48px;" width="18.4" height="18.4"><use href="#ck1"/></svg>
<svg style="left:913.5px;top:334.48px;" width="18.4" height="18.4"><use href="#ck0"/></svg>
<div class="t" style="left:5.9px;top:355.73px;height:24px;line-height:24px;white-space:pre;color:#808080;font-size:15px">16</div>
<svg style="left:32.9px;top:360.93px;" width="19.5" height="12.6"><use href="#tag"/></svg>
<div style="left:61.9px;top:362.93px;width:6.4px;height:6.4px;background:#2a4bd0"></div>
<div class="t" style="left:272.7px;top:355.73px;height:24px;line-height:24px;white-space:pre;color:#161616;font-size:15px;letter-spacing:-.05px">Real</div>
<div class="t" style="left:422.8px;top:355.73px;height:24px;line-height:24px;white-space:pre;color:#8a8a8a;font-size:15px">0.0</div>
<svg style="left:576.2px;top:358.23px;" width="18.4" height="18.4"><use href="#ck1"/></svg>
<svg style="left:669.7px;top:358.23px;" width="18.4" height="18.4"><use href="#ck1"/></svg>
<svg style="left:751.3px;top:358.23px;" width="18.4" height="18.4"><use href="#ck1"/></svg>
<svg style="left:826px;top:358.23px;" width="18.4" height="18.4"><use href="#ck1"/></svg>
<svg style="left:913.5px;top:358.23px;" width="18.4" height="18.4"><use href="#ck0"/></svg>
<div class="t" style="left:5.9px;top:379.48px;height:24px;line-height:24px;white-space:pre;color:#808080;font-size:15px">17</div>
<svg style="left:32.9px;top:384.68px;" width="19.5" height="12.6"><use href="#tag"/></svg>
<div style="left:61.9px;top:386.68px;width:6.4px;height:6.4px;background:#2a4bd0"></div>
<div class="t" style="left:272.7px;top:379.48px;height:24px;line-height:24px;white-space:pre;color:#161616;font-size:15px;letter-spacing:-.05px">Real</div>
<div class="t" style="left:422.8px;top:379.48px;height:24px;line-height:24px;white-space:pre;color:#8a8a8a;font-size:15px">0.0</div>
<svg style="left:576.2px;top:381.98px;" width="18.4" height="18.4"><use href="#ck1"/></svg>
<svg style="left:669.7px;top:381.98px;" width="18.4" height="18.4"><use href="#ck1"/></svg>
<svg style="left:751.3px;top:381.98px;" width="18.4" height="18.4"><use href="#ck1"/></svg>
<svg style="left:826px;top:381.98px;" width="18.4" height="18.4"><use href="#ck1"/></svg>
<svg style="left:913.5px;top:381.98px;" width="18.4" height="18.4"><use href="#ck0"/></svg>
<div class="t" style="left:5.9px;top:403.23px;height:24px;line-height:24px;white-space:pre;color:#808080;font-size:15px">18</div>
<svg style="left:32.9px;top:408.43px;" width="19.5" height="12.6"><use href="#tag"/></svg>
<div style="left:61.9px;top:410.43px;width:6.4px;height:6.4px;background:#2a4bd0"></div>
<div class="t" style="left:272.7px;top:403.23px;height:24px;line-height:24px;white-space:pre;color:#161616;font-size:15px;letter-spacing:-.05px">Real</div>
<div class="t" style="left:422.8px;top:403.23px;height:24px;line-height:24px;white-space:pre;color:#8a8a8a;font-size:15px">0.0</div>
<svg style="left:576.2px;top:405.73px;" width="18.4" height="18.4"><use href="#ck1"/></svg>
<svg style="left:669.7px;top:405.73px;" width="18.4" height="18.4"><use href="#ck1"/></svg>
<svg style="left:751.3px;top:405.73px;" width="18.4" height="18.4"><use href="#ck1"/></svg>
<svg style="left:826px;top:405.73px;" width="18.4" height="18.4"><use href="#ck1"/></svg>
<svg style="left:913.5px;top:405.73px;" width="18.4" height="18.4"><use href="#ck0"/></svg>
<div class="t" style="left:5.9px;top:426.98px;height:24px;line-height:24px;white-space:pre;color:#808080;font-size:15px">19</div>
<svg style="left:32.9px;top:432.18px;" width="19.5" height="12.6"><use href="#tag"/></svg>
<div style="left:61.9px;top:434.18px;width:6.4px;height:6.4px;background:#2a4bd0"></div>
<div class="t" style="left:272.7px;top:426.98px;height:24px;line-height:24px;white-space:pre;color:#161616;font-size:15px;letter-spacing:-.05px">Real</div>
<div class="t" style="left:422.8px;top:426.98px;height:24px;line-height:24px;white-space:pre;color:#8a8a8a;font-size:15px">0.0</div>
<svg style="left:576.2px;top:429.48px;" width="18.4" height="18.4"><use href="#ck1"/></svg>
<svg style="left:669.7px;top:429.48px;" width="18.4" height="18.4"><use href="#ck1"/></svg>
<svg style="left:751.3px;top:429.48px;" width="18.4" height="18.4"><use href="#ck1"/></svg>
<svg style="left:826px;top:429.48px;" width="18.4" height="18.4"><use href="#ck1"/></svg>
<svg style="left:913.5px;top:429.48px;" width="18.4" height="18.4"><use href="#ck0"/></svg>
<div class="t" style="left:5.9px;top:450.73px;height:24px;line-height:24px;white-space:pre;color:#808080;font-size:15px">20</div>
<svg style="left:32.9px;top:455.93px;" width="19.5" height="12.6"><use href="#tag"/></svg>
<div style="left:61.9px;top:457.93px;width:6.4px;height:6.4px;background:#2a4bd0"></div>
<div class="t" style="left:272.7px;top:450.73px;height:24px;line-height:24px;white-space:pre;color:#161616;font-size:15px;letter-spacing:-.05px">Real</div>
<div class="t" style="left:422.8px;top:450.73px;height:24px;line-height:24px;white-space:pre;color:#8a8a8a;font-size:15px">0.0</div>
<svg style="left:576.2px;top:453.23px;" width="18.4" height="18.4"><use href="#ck1"/></svg>
<svg style="left:669.7px;top:453.23px;" width="18.4" height="18.4"><use href="#ck1"/></svg>
<svg style="left:751.3px;top:453.23px;" width="18.4" height="18.4"><use href="#ck1"/></svg>
<svg style="left:826px;top:453.23px;" width="18.4" height="18.4"><use href="#ck1"/></svg>
<svg style="left:913.5px;top:453.23px;" width="18.4" height="18.4"><use href="#ck0"/></svg>
<div class="t" style="left:5.9px;top:474.48px;height:24px;line-height:24px;white-space:pre;color:#808080;font-size:15px">21</div>
<svg style="left:32.9px;top:479.68px;" width="19.5" height="12.6"><use href="#tag"/></svg>
<div style="left:61.9px;top:481.68px;width:6.4px;height:6.4px;background:#2a4bd0"></div>
<div class="t" style="left:272.7px;top:474.48px;height:24px;line-height:24px;white-space:pre;color:#161616;font-size:15px;letter-spacing:-.05px">Real</div>
<div class="t" style="left:422.8px;top:474.48px;height:24px;line-height:24px;white-space:pre;color:#8a8a8a;font-size:15px">0.0</div>
<svg style="left:576.2px;top:476.98px;" width="18.4" height="18.4"><use href="#ck1"/></svg>
<svg style="left:669.7px;top:476.98px;" width="18.4" height="18.4"><use href="#ck1"/></svg>
<svg style="left:751.3px;top:476.98px;" width="18.4" height="18.4"><use href="#ck1"/></svg>
<svg style="left:826px;top:476.98px;" width="18.4" height="18.4"><use href="#ck1"/></svg>
<svg style="left:913.5px;top:476.98px;" width="18.4" height="18.4"><use href="#ck0"/></svg>
<div class="t" style="left:5.9px;top:498.23px;height:24px;line-height:24px;white-space:pre;color:#808080;font-size:15px">22</div>
<svg style="left:32.9px;top:503.43px;" width="19.5" height="12.6"><use href="#tag"/></svg>
<div style="left:61.9px;top:505.43px;width:6.4px;height:6.4px;background:#2a4bd0"></div>
<div class="t" style="left:272.7px;top:498.23px;height:24px;line-height:24px;white-space:pre;color:#161616;font-size:15px;letter-spacing:-.05px">Real</div>
<div class="t" style="left:422.8px;top:498.23px;height:24px;line-height:24px;white-space:pre;color:#8a8a8a;font-size:15px">0.0</div>
<svg style="left:576.2px;top:500.73px;" width="18.4" height="18.4"><use href="#ck1"/></svg>
<svg style="left:669.7px;top:500.73px;" width="18.4" height="18.4"><use href="#ck1"/></svg>
<svg style="left:751.3px;top:500.73px;" width="18.4" height="18.4"><use href="#ck1"/></svg>
<svg style="left:826px;top:500.73px;" width="18.4" height="18.4"><use href="#ck1"/></svg>
<svg style="left:913.5px;top:500.73px;" width="18.4" height="18.4"><use href="#ck0"/></svg>
<div class="t" style="left:5.9px;top:521.98px;height:24px;line-height:24px;white-space:pre;color:#808080;font-size:15px">23</div>
<svg style="left:32.9px;top:527.18px;" width="19.5" height="12.6"><use href="#tag"/></svg>
<div style="left:61.9px;top:529.18px;width:6.4px;height:6.4px;background:#2a4bd0"></div>
<div class="t" style="left:272.7px;top:521.98px;height:24px;line-height:24px;white-space:pre;color:#161616;font-size:15px;letter-spacing:-.05px">Real</div>
<div class="t" style="left:422.8px;top:521.98px;height:24px;line-height:24px;white-space:pre;color:#8a8a8a;font-size:15px">0.0</div>
<svg style="left:576.2px;top:524.48px;" width="18.4" height="18.4"><use href="#ck1"/></svg>
<svg style="left:669.7px;top:524.48px;" width="18.4" height="18.4"><use href="#ck1"/></svg>
<svg style="left:751.3px;top:524.48px;" width="18.4" height="18.4"><use href="#ck1"/></svg>
<svg style="left:826px;top:524.48px;" width="18.4" height="18.4"><use href="#ck1"/></svg>
<svg style="left:913.5px;top:524.48px;" width="18.4" height="18.4"><use href="#ck0"/></svg>
<div class="t" style="left:5.9px;top:545.73px;height:24px;line-height:24px;white-space:pre;color:#808080;font-size:15px">24</div>
<svg style="left:32.9px;top:550.93px;" width="19.5" height="12.6"><use href="#tag"/></svg>
<div style="left:61.9px;top:552.93px;width:6.4px;height:6.4px;background:#2a4bd0"></div>
<div class="t" style="left:272.7px;top:545.73px;height:24px;line-height:24px;white-space:pre;color:#161616;font-size:15px;letter-spacing:-.05px">DInt</div>
<div class="t" style="left:422.8px;top:545.73px;height:24px;line-height:24px;white-space:pre;color:#8a8a8a;font-size:15px">0</div>
<svg style="left:576.2px;top:548.23px;" width="18.4" height="18.4"><use href="#ck1"/></svg>
<svg style="left:669.7px;top:548.23px;" width="18.4" height="18.4"><use href="#ck1"/></svg>
<svg style="left:751.3px;top:548.23px;" width="18.4" height="18.4"><use href="#ck1"/></svg>
<svg style="left:826px;top:548.23px;" width="18.4" height="18.4"><use href="#ck1"/></svg>
<svg style="left:913.5px;top:548.23px;" width="18.4" height="18.4"><use href="#ck0"/></svg>
<div class="t" style="left:5.9px;top:569.48px;height:24px;line-height:24px;white-space:pre;color:#808080;font-size:15px">25</div>
<svg style="left:32.9px;top:574.68px;" width="19.5" height="12.6"><use href="#tag"/></svg>
<div style="left:61.9px;top:576.68px;width:6.4px;height:6.4px;background:#2a4bd0"></div>
<div class="t" style="left:272.7px;top:569.48px;height:24px;line-height:24px;white-space:pre;color:#161616;font-size:15px;letter-spacing:-.05px">Bool</div>
<div class="t" style="left:422.8px;top:569.48px;height:24px;line-height:24px;white-space:pre;color:#8a8a8a;font-size:15px">false</div>
<svg style="left:576.2px;top:571.98px;" width="18.4" height="18.4"><use href="#ck1"/></svg>
<svg style="left:669.7px;top:571.98px;" width="18.4" height="18.4"><use href="#ck1"/></svg>
<svg style="left:751.3px;top:571.98px;" width="18.4" height="18.4"><use href="#ck1"/></svg>
<svg style="left:826px;top:571.98px;" width="18.4" height="18.4"><use href="#ck1"/></svg>
<svg style="left:913.5px;top:571.98px;" width="18.4" height="18.4"><use href="#ck0"/></svg>
<div class="t" style="left:5.9px;top:593.23px;height:24px;line-height:24px;white-space:pre;color:#808080;font-size:15px">26</div>
<svg style="left:32.9px;top:598.43px;" width="19.5" height="12.6"><use href="#tag"/></svg>
<div style="left:61.9px;top:600.43px;width:6.4px;height:6.4px;background:#2a4bd0"></div>
<div class="t" style="left:272.7px;top:593.23px;height:24px;line-height:24px;white-space:pre;color:#161616;font-size:15px;letter-spacing:-.05px">DInt</div>
<div class="t" style="left:422.8px;top:593.23px;height:24px;line-height:24px;white-space:pre;color:#8a8a8a;font-size:15px">0</div>
<svg style="left:576.2px;top:595.73px;" width="18.4" height="18.4"><use href="#ck1"/></svg>
<svg style="left:669.7px;top:595.73px;" width="18.4" height="18.4"><use href="#ck1"/></svg>
<svg style="left:751.3px;top:595.73px;" width="18.4" height="18.4"><use href="#ck1"/></svg>
<svg style="left:826px;top:595.73px;" width="18.4" height="18.4"><use href="#ck1"/></svg>
<svg style="left:913.5px;top:595.73px;" width="18.4" height="18.4"><use href="#ck0"/></svg>
<div class="t" style="left:5.9px;top:616.98px;height:24px;line-height:24px;white-space:pre;color:#808080;font-size:15px">27</div>
<svg style="left:32.9px;top:622.18px;" width="19.5" height="12.6"><use href="#tag"/></svg>
<div style="left:61.9px;top:624.18px;width:6.4px;height:6.4px;background:#2a4bd0"></div>
<div class="t" style="left:106.5px;top:616.98px;height:24px;line-height:24px;white-space:pre;color:#161616;font-size:15px">ib_7#是否使用压紧阀</div>
<div class="t" style="left:272.7px;top:616.98px;height:24px;line-height:24px;white-space:pre;color:#161616;font-size:15px;letter-spacing:-.05px">Bool</div>
<div class="t" style="left:422.8px;top:616.98px;height:24px;line-height:24px;white-space:pre;color:#8a8a8a;font-size:15px">false</div>
<svg style="left:576.2px;top:619.48px;" width="18.4" height="18.4"><use href="#ck1"/></svg>
<svg style="left:669.7px;top:619.48px;" width="18.4" height="18.4"><use href="#ck1"/></svg>
<svg style="left:751.3px;top:619.48px;" width="18.4" height="18.4"><use href="#ck1"/></svg>
<svg style="left:826px;top:619.48px;" width="18.4" height="18.4"><use href="#ck1"/></svg>
<svg style="left:913.5px;top:619.48px;" width="18.4" height="18.4"><use href="#ck0"/></svg>
<div class="t" style="left:5.9px;top:640.73px;height:24px;line-height:24px;white-space:pre;color:#808080;font-size:15px">28</div>
<svg style="left:32.9px;top:645.93px;" width="19.5" height="12.6"><use href="#tag"/></svg>
<div style="left:61.9px;top:647.93px;width:6.4px;height:6.4px;background:#2a4bd0"></div>
<div class="t" style="left:106.5px;top:640.73px;height:24px;line-height:24px;white-space:pre;color:#161616;font-size:15px">od_当班产量</div>
<div class="t" style="left:272.7px;top:640.73px;height:24px;line-height:24px;white-space:pre;color:#161616;font-size:15px;letter-spacing:-.05px">DInt</div>
<div class="t" style="left:422.8px;top:640.73px;height:24px;line-height:24px;white-space:pre;color:#8a8a8a;font-size:15px">0</div>
<svg style="left:576.2px;top:643.23px;" width="18.4" height="18.4"><use href="#ck1"/></svg>
<svg style="left:669.7px;top:643.23px;" width="18.4" height="18.4"><use href="#ck1"/></svg>
<svg style="left:751.3px;top:643.23px;" width="18.4" height="18.4"><use href="#ck1"/></svg>
<svg style="left:826px;top:643.23px;" width="18.4" height="18.4"><use href="#ck1"/></svg>
<svg style="left:913.5px;top:643.23px;" width="18.4" height="18.4"><use href="#ck0"/></svg>
<div class="t" style="left:5.9px;top:664.48px;height:24px;line-height:24px;white-space:pre;color:#808080;font-size:15px">29</div>
<svg style="left:32.9px;top:669.68px;" width="19.5" height="12.6"><use href="#tag"/></svg>
<div style="left:61.9px;top:671.68px;width:6.4px;height:6.4px;background:#2a4bd0"></div>
<div class="t" style="left:106.5px;top:664.48px;height:24px;line-height:24px;white-space:pre;color:#161616;font-size:15px">ob_设备总产量</div>
<div class="t" style="left:272.7px;top:664.48px;height:24px;line-height:24px;white-space:pre;color:#161616;font-size:15px;letter-spacing:-.05px">DInt</div>
<div class="t" style="left:422.8px;top:664.48px;height:24px;line-height:24px;white-space:pre;color:#8a8a8a;font-size:15px">0</div>
<svg style="left:576.2px;top:666.98px;" width="18.4" height="18.4"><use href="#ck1"/></svg>
<svg style="left:669.7px;top:666.98px;" width="18.4" height="18.4"><use href="#ck1"/></svg>
<svg style="left:751.3px;top:666.98px;" width="18.4" height="18.4"><use href="#ck1"/></svg>
<svg style="left:826px;top:666.98px;" width="18.4" height="18.4"><use href="#ck1"/></svg>
<svg style="left:913.5px;top:666.98px;" width="18.4" height="18.4"><use href="#ck0"/></svg>
<div class="t" style="left:5.9px;top:688.23px;height:24px;line-height:24px;white-space:pre;color:#808080;font-size:15px">30</div>
<svg style="left:32.9px;top:693.43px;" width="19.5" height="12.6"><use href="#tag"/></svg>
<div style="left:61.9px;top:695.43px;width:6.4px;height:6.4px;background:#2a4bd0"></div>
<div class="t" style="left:106.5px;top:688.23px;height:24px;line-height:24px;white-space:pre;color:#161616;font-size:15px">id_3#上升延迟</div>
<div class="t" style="left:272.7px;top:688.23px;height:24px;line-height:24px;white-space:pre;color:#161616;font-size:15px;letter-spacing:-.05px">DInt</div>
<div class="t" style="left:422.8px;top:688.23px;height:24px;line-height:24px;white-space:pre;color:#8a8a8a;font-size:15px">0</div>
<svg style="left:576.2px;top:690.73px;" width="18.4" height="18.4"><use href="#ck1"/></svg>
<svg style="left:669.7px;top:690.73px;" width="18.4" height="18.4"><use href="#ck1"/></svg>
<svg style="left:751.3px;top:690.73px;" width="18.4" height="18.4"><use href="#ck1"/></svg>
<svg style="left:826px;top:690.73px;" width="18.4" height="18.4"><use href="#ck1"/></svg>
<svg style="left:913.5px;top:690.73px;" width="18.4" height="18.4"><use href="#ck0"/></svg>
<div class="t" style="left:5.9px;top:711.98px;height:24px;line-height:24px;white-space:pre;color:#808080;font-size:15px">31</div>
<svg style="left:32.9px;top:717.18px;" width="19.5" height="12.6"><use href="#tag"/></svg>
<div style="left:61.9px;top:719.18px;width:6.4px;height:6.4px;background:#2a4bd0"></div>
<div class="t" style="left:106.5px;top:711.98px;height:24px;line-height:24px;white-space:pre;color:#161616;font-size:15px">id_5#上升延迟</div>
<div class="t" style="left:272.7px;top:711.98px;height:24px;line-height:24px;white-space:pre;color:#161616;font-size:15px;letter-spacing:-.05px">DInt</div>
<div class="t" style="left:422.8px;top:711.98px;height:24px;line-height:24px;white-space:pre;color:#8a8a8a;font-size:15px">0</div>
<svg style="left:576.2px;top:714.48px;" width="18.4" height="18.4"><use href="#ck1"/></svg>
<svg style="left:669.7px;top:714.48px;" width="18.4" height="18.4"><use href="#ck1"/></svg>
<svg style="left:751.3px;top:714.48px;" width="18.4" height="18.4"><use href="#ck1"/></svg>
<svg style="left:826px;top:714.48px;" width="18.4" height="18.4"><use href="#ck1"/></svg>
<svg style="left:913.5px;top:714.48px;" width="18.4" height="18.4"><use href="#ck0"/></svg>
</div>
<div style="left:509px;top:250.2px;width:162px;height:588px;background:#fff"></div>
<div style="left:417px;top:856.6px;width:335px;height:31.2px;border:5.2px solid #e71d25;box-sizing:border-box"></div>
<div style="left:407.1px;top:1562px;width:1123.9px;height:20.4px;background:#e2e2e2"></div>
<div style="left:438.8px;top:1562px;width:1093.2px;height:20.4px;background:#c6c6c6;border-top:1px solid #a6a6a6;box-sizing:border-box"></div>
<div style="left:439px;top:1563px;width:21.5px;height:19.4px;background:linear-gradient(#f8f8f8,#e2e2e2);border:1px solid #9c9c9c;box-sizing:border-box"></div>
<svg style="left:439px;top:1563px;" width="21.5" height="19.4" viewBox="0 0 21.5 19.4"><path d="M13.25 4.699999999999999l-5 5 5 5" stroke="#4a4a4a" stroke-width="2.2" fill="none"/></svg>
<div style="left:1508.5px;top:1563px;width:23.5px;height:19.4px;background:linear-gradient(#f8f8f8,#e2e2e2);border:1px solid #9c9c9c;box-sizing:border-box"></div>
<svg style="left:1508.5px;top:1563px;" width="23.5" height="19.4" viewBox="0 0 23.5 19.4"><path d="M9.25 4.699999999999999l5 5-5 5" stroke="#4a4a4a" stroke-width="2.2" fill="none"/></svg>
<div style="left:461px;top:1563px;width:1007.5px;height:19.4px;background:linear-gradient(#f6f6f6,#dcdcdc);border:1px solid #9c9c9c;box-sizing:border-box"></div>
<svg style="left:961px;top:1567.5px;" width="10" height="11" viewBox="0 0 10 11"><path d="M1 0v11M4 0v11M7 0v11M10 0v11" stroke="#6a6a6a" stroke-width="1"/></svg>
<div style="left:407.1px;top:1582.4px;width:1124.9px;height:3.6px;background:#1f2944"></div>
<div style="left:407.1px;top:1586px;width:1157.9px;height:7px;background:#c9c9c9"></div>
<div style="left:1141.5px;top:1590.5px;width:98px;height:2.5px;background:#f4f4f4"></div>
<div style="left:1242px;top:1591.5px;width:200px;height:1.5px;background:#dcdcdc"></div>
<div style="left:1531px;top:104px;width:1.6px;height:1482px;background:#1f2944"></div>
<div style="left:1532.6px;top:135px;width:30px;height:1458px;background:#b2b2b2"></div>
<div style="left:1562.4px;top:135px;width:0.9px;height:1458px;background:#7a7a7a"></div>
<div style="left:1563.3px;top:135px;width:2.6px;height:1458px;background:#e6e6e6"></div>
<div style="left:2163.8px;top:0px;width:60.2px;height:4.7px;background:#8c8c8c;border-left:2px solid #e01010;border-right:2px solid #e01010;box-sizing:border-box"></div>
<div style="left:2258.7px;top:0px;width:61.3px;height:4.7px;background:linear-gradient(90deg,#7c7ce4,#3030b0 50%,#00007a)"></div>
<div style="left:2360px;top:0px;width:47.7px;height:4.7px;background:#b4b4b4"></div>
<div style="left:2372px;top:0px;width:26px;height:4.7px;background:#dedede"></div>
<div style="left:2380px;top:2px;width:10px;height:2.7px;background:#555"></div>
<div style="left:2394px;top:0px;width:1px;height:5px;background:#2a2a2a"></div>
<div style="left:2430px;top:0px;width:1px;height:5px;background:#2a2a2a"></div>
<svg style="left:2474px;top:0px;" width="40" height="58" viewBox="0 0 40 58"><path d="M26.5 25.5 L32.4 27.6 L31.4 32.9 L25.1 32.7 L21.9 38.0 L25.1 43.5 L21.0 46.8 L16.3 42.7 L10.4 44.7 L9.3 50.9 L4.0 50.8 L3.1 44.6 L-2.7 42.4 L-7.6 46.4 L-11.6 43.0 L-8.3 37.6 L-11.3 32.2 L-17.6 32.2 L-18.5 26.9 L-12.5 25.0 L-11.3 18.8 L-16.1 14.8 L-13.4 10.2 L-7.6 12.6 L-2.8 8.6 L-3.9 2.4 L1.2 0.7 L4.2 6.2 L10.4 6.3 L13.5 0.8 L18.5 2.7 L17.2 8.9 L21.9 13.0 L27.8 10.8 L30.4 15.5 L25.5 19.3Z" fill="#f6f600"/><circle cx="7" cy="25.5" r="10.500" fill="#000"/></svg>
<div style="left:2509px;top:0px;width:1px;height:58px;background:#3a3a3a"></div>
<div style="left:2480px;top:57.5px;width:30px;height:1px;background:#3a3a3a"></div>
<div class="e" style="left:2481px;top:61.2px;height:24px;line-height:24px;white-space:pre;color:#fff;font-size:16px">co</div>
<div class="e" style="left:2480px;top:82.2px;height:24px;line-height:24px;white-space:pre;color:#fff;font-size:16px">wa...</div>
<div style="left:2480px;top:346.5px;width:41px;height:48px;background:linear-gradient(100deg,#9fc4bd,#c4d8cf 40%,#a8c9c0 70%,#d8e4dc)"></div>
<div class="e" style="left:2500px;top:359px;height:24px;line-height:24px;white-space:pre;color:#111;font-size:26px">H</div>
<div style="left:2480px;top:394.5px;width:41px;height:403px;background:#fff"></div>
<div style="left:2480px;top:459px;width:41px;height:1px;background:#e4e4e4"></div>
<div style="left:2480px;top:572px;width:20.5px;height:226px;background:linear-gradient(90deg,#e2e2e2,#efefef);border-radius:0 6px 0 0;box-shadow:1px 0 3px rgba(0,0,0,.25)"></div>
<div style="left:1438px;top:3.8px;width:1043px;height:1264.8px;background:#fff;box-shadow:0 0 9px 1px rgba(0,0,0,.4);border:1px solid #7a7a7a;box-sizing:border-box"></div>
<div style="left:1439px;top:4.8px;width:1041px;height:37.4px;background:#fff"></div>
<svg style="left:1448px;top:13px;" width="20" height="20" viewBox="0 0 20 20"><rect x=".8" y=".8" width="18.4" height="18.4" rx="3" fill="#2a4a9a" stroke="#16264e" stroke-width="1.6"/><rect x="4" y="4.5" width="12" height="9.5" fill="#c8d4ee" stroke="#101c3a" stroke-width="1.4"/><path d="M9 8l6 6-2.6.2 1.2 2.6-1.4.6-1.2-2.6L9 16.4z" fill="#101c3a"/></svg>
<div class="e" style="left:1473.6px;top:11.6px;height:24px;line-height:24px;white-space:pre;color:#8f8f8f;font-size:15.7px;letter-spacing:.02px">EasyBuilder Pro V6.09.01.322s : 20230920.emtp - [21 - 监控页面]</div>
<svg style="left:2327px;top:15px;" width="13" height="15" viewBox="0 0 13 15"><path d="M0 7.5h12" stroke="#7a7a7a" stroke-width="1"/></svg>
<svg style="left:2385px;top:17px;" width="13" height="13" viewBox="0 0 13 13"><rect x=".5" y=".5" width="11.5" height="11.5" fill="none" stroke="#6a6a6a" stroke-width="1"/></svg>
<svg style="left:2444px;top:17px;" width="13" height="13" viewBox="0 0 13 13"><path d="M.5 .5l11.500 11.500M12 .5L.5 12" stroke="#6a6a6a" stroke-width="1"/></svg>
<div style="left:1439px;top:42px;width:1041px;height:29.2px;background:#2b579a"></div>
<div class="e" style="left:1463px;top:45.4px;height:24px;line-height:24px;white-space:pre;color:#fff;font-size:15px">文件</div>
<svg style="left:1526px;top:49px;" width="16" height="16" viewBox="0 0 16 16"><path d="M1 1h14v14H1z" fill="#fff"/><rect x="4" y="2.500" width="8" height="3.500" fill="#2b579a"/><rect x="3.5" y="9" width="9" height="4.500" fill="#2b579a"/></svg>
<svg style="left:1548px;top:49px;" width="18" height="16" viewBox="0 0 18 16"><rect x=".8" y="1.8" width="16.4" height="12.4" fill="none" stroke="#fff" stroke-width="1.6"/><rect x=".8" y="1" width="16.4" height="3.4" fill="#fff"/><path d="M1 6l5 3.5L1 13z" fill="#fff"/><path d="M9 7l5 5M14 7l-5 5" stroke="#fff" stroke-width="1.6"/></svg>
<svg style="left:1574px;top:50px;" width="15" height="13" viewBox="0 0 15 13"><path d="M7 0L0 5.5 7 11V7.5c4 0 6 2 7 5 .4-6-2-9-7-9.5z" fill="#9aa6c4"/></svg>
<svg style="left:1597px;top:50px;" width="15" height="13" viewBox="0 0 15 13"><path d="M8 0l7 5.5L8 11V7.5c-4 0-6 2-7 5-.4-6 2-9 7-9.5z" fill="#9aa6c4"/></svg>
<svg style="left:1619px;top:52px;" width="8" height="9" viewBox="0 0 8 9"><path d="M0 1h8" stroke="#fff" stroke-width="1.6"/><path d="M0 4h8L4 8.6z" fill="#fff"/></svg>
<div style="left:1631.8px;top:42.6px;width:56.4px;height:28.8px;background:#f1f1f1"></div>
<div class="e" style="left:1645.5px;top:45.4px;height:24px;line-height:24px;white-space:pre;color:#3a3a3a;font-size:15px">常用</div>
<div class="e" style="left:1701px;top:45.4px;height:24px;line-height:24px;white-space:pre;color:#fff;font-size:15px;letter-spacing:0px">工程文件</div>
<div class="e" style="left:1786.8px;top:45.4px;height:24px;line-height:24px;white-space:pre;color:#fff;font-size:15px;letter-spacing:0px">元件</div>
<div class="e" style="left:1843px;top:45.4px;height:24px;line-height:24px;white-space:pre;color:#fff;font-size:15px;letter-spacing:0px">资料/历史</div>
<div class="e" style="left:1935.4px;top:45.4px;height:24px;line-height:24px;white-space:pre;color:#fff;font-size:15px;letter-spacing:0.1px">IIoT/能源管理</div>
<div class="e" style="left:2053.3px;top:45.4px;height:24px;line-height:24px;white-space:pre;color:#fff;font-size:15px;letter-spacing:0px">检视</div>
<div class="e" style="left:2109.5px;top:45.4px;height:24px;line-height:24px;white-space:pre;color:#fff;font-size:15px;letter-spacing:0px">工具</div>
<div class="e" style="left:2166.2px;top:45.4px;height:24px;line-height:24px;white-space:pre;color:#fff;font-size:15px;letter-spacing:0.8px">Weincloud</div>
<svg style="left:2383px;top:51.5px;" width="12" height="10" viewBox="0 0 12 10"><path d="M1 5h9" stroke="#fff" stroke-width="2.2"/></svg>
<svg style="left:2407.5px;top:50px;" width="14" height="13" viewBox="0 0 14 13"><rect x="1" y="4.5" width="8" height="7.5" fill="none" stroke="#fff" stroke-width="1.8"/><path d="M4 4V1.2h8.5v8H9.5" fill="none" stroke="#fff" stroke-width="1.8"/></svg>
<svg style="left:2433.8px;top:50.5px;" width="13" height="12" viewBox="0 0 13 12"><path d="M1.5 1l9.5 9.5M11 1L1.5 10.5" stroke="#fff" stroke-width="2.2"/></svg>
<svg style="left:2460px;top:51.5px;" width="12" height="9" viewBox="0 0 12 9"><path d="M1.5 7.5L6 3l4.5 4.5" stroke="#fff" stroke-width="2.4" fill="none"/></svg>
<div style="left:1439px;top:71.2px;width:1041px;height:120.3px;background:#f1f1f1;border-bottom:1.4px solid #2b579a;box-sizing:border-box"></div>
<div style="left:1525.2px;top:75px;width:1px;height:112px;background:#dadada"></div>
<div style="left:1610.4px;top:75px;width:1px;height:112px;background:#dadada"></div>
<div style="left:1690.6px;top:75px;width:1px;height:112px;background:#dadada"></div>
<div style="left:1870.6px;top:75px;width:1px;height:112px;background:#dadada"></div>
<div style="left:2257.5px;top:75px;width:1px;height:112px;background:#dadada"></div>
<div style="left:2318.4px;top:75px;width:1px;height:112px;background:#dadada"></div>
<div style="left:2414.5px;top:75px;width:1px;height:112px;background:#dadada"></div>
<div class="e" style="left:1333.6px;top:163.3px;width:300px;height:24px;line-height:24px;white-space:pre;text-align:center;color:#444;font-size:15px">剪贴簿</div>
<div class="e" style="left:1501px;top:163.3px;width:300px;height:24px;line-height:24px;white-space:pre;text-align:center;color:#444;font-size:15px">编辑</div>
<div class="e" style="left:1630.9px;top:163.3px;width:300px;height:24px;line-height:24px;white-space:pre;text-align:center;color:#444;font-size:15px">元件</div>
<div class="e" style="left:1913.5px;top:163.3px;width:300px;height:24px;line-height:24px;white-space:pre;text-align:center;color:#444;font-size:15px">排列</div>
<svg style="left:1453.5px;top:79px;" width="36" height="38" viewBox="0 0 36 38"><rect x="0" y="6" width="26" height="31" rx="2" fill="#ffc24a"/><rect x="8" y="1" width="12" height="7" rx="1.5" fill="#7f7f7f"/><path d="M14.5 14h20.5v16l-6 7H14.5z" fill="#fff" stroke="#6f6f6f" stroke-width="1.5"/><path d="M18.5 20h12M18.5 25h12M18.5 30h8" stroke="#6f6f6f" stroke-width="1.5"/></svg>
<div class="e" style="left:1319.9px;top:118.4px;width:300px;height:24px;line-height:24px;white-space:pre;text-align:center;color:#444;font-size:15px">粘贴</div>
<svg style="left:1498px;top:80px;" width="19" height="21" viewBox="0 0 19 21"><path d="M3.5 1l9 13M14.5 1l-9 13" stroke="#6f6f6f" stroke-width="1.5"/><circle cx="4" cy="16.5" r="3" fill="none" stroke="#3b7fd6" stroke-width="1.5"/><circle cx="14" cy="16.5" r="3" fill="none" stroke="#3b7fd6" stroke-width="1.5"/></svg>
<svg style="left:1498px;top:108px;" width="19" height="21" viewBox="0 0 19 21"><rect x=".8" y=".8" width="10" height="12" rx="1" fill="#fff" stroke="#9a9a9a" stroke-width="1.2"/><path d="M7 6h8l3 3v10.5H7z" fill="#fff" stroke="#8ab4e8" stroke-width="1.3"/><path d="M9.5 11h6M9.5 13.8h6M9.5 16.6h6" stroke="#8ab4e8" stroke-width="1.2"/></svg>
<svg style="left:1549px;top:78px;" width="40" height="40" viewBox="0 0 40 40"><rect x="2" y="11" width="26" height="26" fill="#fff" stroke="#7a7a7a" stroke-width="1.6"/><rect x="2" y="11" width="26" height="5" fill="#7a7a7a"/><rect x="5.5" y="19" width="15" height="6" fill="#3dab6c"/><path d="M5.5 28.5h19M5.5 32.5h19" stroke="#7a7a7a" stroke-width="1.6"/><circle cx="26.5" cy="12" r="8.2" fill="#fff" stroke="#f3b13e" stroke-width="5"/><circle cx="26.5" cy="12" r="11.4" fill="none" stroke="#f3b13e" stroke-width="3.4" stroke-dasharray="4.4 4.55"/></svg>
<div class="e" style="left:1419px;top:118.4px;width:300px;height:24px;line-height:24px;white-space:pre;text-align:center;color:#444;font-size:15px">系统参数</div>
<svg style="left:1626px;top:81px;" width="14" height="20" viewBox="0 0 14 20"><path d="M1.5 1v15l3.8-3.4 2.8 6 2.6-1.2-2.8-5.8h5z" fill="#555"/></svg>
<svg style="left:1647px;top:87px;" width="8" height="5" viewBox="0 0 8 5"><path d="M0 0h8L4 5z" fill="#2b579a"/></svg>
<svg style="left:1661px;top:80px;" width="22" height="20" viewBox="0 0 22 20"><rect x="3.5" y=".8" width="17" height="14" fill="#fff" stroke="#8a8a8a" stroke-width="1.1"/><path d="M4 3h16" stroke="#8a8a8a" stroke-dasharray="1.5 1.2"/><rect x=".8" y="4" width="17" height="14" rx="1" fill="#fff" stroke="#8a8a8a" stroke-width="1.1"/></svg>
<svg style="left:1620px;top:114px;" width="21" height="12" viewBox="0 0 21 12"><circle cx="5" cy="6" r="3.8" fill="none" stroke="#3b7fd6" stroke-width="1.3"/><circle cx="15.5" cy="6" r="3.8" fill="none" stroke="#3b7fd6" stroke-width="1.3"/><path d="M8.8 6h3" stroke="#3b7fd6" stroke-width="1.3"/></svg>
<svg style="left:1620px;top:138px;" width="20" height="21" viewBox="0 0 20 21"><rect x=".8" y=".8" width="9" height="11" rx="1.5" fill="#fff" stroke="#9a9a9a" stroke-width="1.1"/><rect x="3.8" y="3.8" width="9" height="11" rx="1.5" fill="#fff" stroke="#9a9a9a" stroke-width="1.1"/><path d="M7.5 7h7.5l3 3v9.5H7.5z" fill="#fff" stroke="#8ab4e8" stroke-width="1.3"/><path d="M10 12h5.5M10 14.6h5.5M10 17.2h5.5" stroke="#8ab4e8" stroke-width="1.1"/></svg>
<div style="left:1696.6px;top:76.7px;width:170px;height:85.8px;background:#fff;border:1px solid #c8c8c8;box-sizing:border-box"></div>
<div style="left:1849.4px;top:76.7px;width:17.2px;height:85.8px;background:#fff;border:1px solid #c8c8c8;box-sizing:border-box"></div>
<div style="left:1849.4px;top:105.2px;width:17.2px;height:1px;background:#c8c8c8"></div>
<div style="left:1849.4px;top:134.4px;width:17.2px;height:1px;background:#c8c8c8"></div>
<svg style="left:1854.5px;top:89px;" width="8" height="5" viewBox="0 0 8 5"><path d="M0 5h8L4 0z" fill="#555"/></svg>
<svg style="left:1854.5px;top:118px;" width="8" height="5" viewBox="0 0 8 5"><path d="M0 0h8L4 5z" fill="#555"/></svg>
<svg style="left:1854.5px;top:145px;" width="8" height="8" viewBox="0 0 8 8"><path d="M0 1h8" stroke="#555" stroke-width="1.3"/><path d="M0 3.5h8L4 8z" fill="#555"/></svg>
<svg style="left:1701px;top:80.7px;" width="22" height="22" viewBox="0 0 22 22"><circle cx="11" cy="9" r="7" fill="#fff" stroke="#6f6f6f" stroke-width="1.4"/><circle cx="11" cy="9" r="2.6" fill="none" stroke="#6f6f6f" stroke-width="1.2"/><path d="M11 11.5v5" stroke="#6f6f6f" stroke-width="1.2"/><path d="M7.5 15.5h7v2.5a3.5 3.5 0 0 1-7 0z" fill="#f0b24a"/></svg>
<svg style="left:1731px;top:80.7px;" width="22" height="22" viewBox="0 0 22 22"><rect x="9" y="1" width="9" height="20" rx="1.5" fill="#4a4a4a"/><circle cx="13.5" cy="5" r="2.3" fill="#e8453c"/><circle cx="13.5" cy="11" r="2.3" fill="#f0b429"/><circle cx="13.5" cy="17" r="2.3" fill="#3dab6c"/><path d="M2 5h5M2 11h5M2 17h5" stroke="#6f6f6f" stroke-width="1.3" stroke-dasharray="2 1"/></svg>
<svg style="left:1761px;top:80.7px;" width="22" height="22" viewBox="0 0 22 22"><text x="1" y="8.5" font-size="8.5" font-weight="bold" fill="#3b7fd6" font-family="Liberation Sans,sans-serif" textLength="20">HHH</text><rect x="1.5" y="11" width="19" height="9.5" fill="#d6d6d6" stroke="#7a7a7a" stroke-width="1.3"/><path d="M2 20.2h18.5" stroke="#6a6a6a" stroke-width="1.6"/></svg>
<svg style="left:1790.8px;top:80.7px;" width="22" height="22" viewBox="0 0 22 22"><text x="2" y="8.5" font-size="9.5" font-weight="bold" fill="#3b7fd6" font-family="Liberation Sans,sans-serif" textLength="18">123</text><rect x="1.5" y="11" width="19" height="9.5" fill="#d6d6d6" stroke="#7a7a7a" stroke-width="1.3"/><path d="M2 20.2h18.5" stroke="#6a6a6a" stroke-width="1.6"/></svg>
<svg style="left:1820.7px;top:80.7px;" width="22" height="22" viewBox="0 0 22 22"><path d="M1 9l8-7 12 6-9 7z" fill="#f3b13e"/><path d="M1 9l11 6v6L1 14z" fill="#e89a1c"/><path d="M12 15l9-7v5l-9 8z" fill="#f6c56a"/><path d="M7 7l5 2.5 3-2.5" stroke="#fff" stroke-width="1.6" fill="none"/></svg>
<svg style="left:1701px;top:111px;" width="22" height="22" viewBox="0 0 22 22"><rect x="1" y="3" width="20" height="16" fill="#f3b13e" stroke="#d8901c" stroke-width="1.2"/><rect x="5" y="8" width="4" height="6.5" fill="#fff"/><rect x="13" y="8" width="4" height="6.5" fill="#fff"/><rect x="5" y="10.5" width="4" height="4" fill="#d8901c"/><rect x="13" y="10.5" width="4" height="4" fill="#d8901c"/></svg>
<svg style="left:1731px;top:111px;" width="22" height="22" viewBox="0 0 22 22"><text x="3" y="9" font-size="11" fill="#3b7fd6" font-family="Liberation Sans,sans-serif" textLength="16">Fn</text><rect x="1.5" y="10.5" width="19" height="10" fill="#d6d6d6" stroke="#7a7a7a" stroke-width="1.3"/><path d="M2 16h18.5" stroke="#6a6a6a" stroke-width="1.4"/><rect x="2" y="16.5" width="18" height="3.6" fill="#8c8c8c"/></svg>
<svg style="left:1761px;top:111px;" width="22" height="22" viewBox="0 0 22 22"><rect x="1.5" y="1.5" width="18" height="6" fill="#fff" stroke="#7a7a7a" stroke-width="1.3"/><rect x="14" y="1.5" width="5.5" height="6" fill="#3b7fd6"/><path d="M15.3 3.6h3l-1.5 2.2z" fill="#fff"/><rect x="5.5" y="9.5" width="14" height="5" fill="#d6d6d6" stroke="#7a7a7a" stroke-width="1.3"/><rect x="5.5" y="15.5" width="14" height="5" fill="#d6d6d6" stroke="#7a7a7a" stroke-width="1.3"/></svg>
<svg style="left:1790.8px;top:111px;" width="22" height="22" viewBox="0 0 22 22"><path d="M1 11h13" stroke="#3b7fd6" stroke-width="3"/><rect x="13.5" y="6" width="5" height="10" rx="1" fill="#fff" stroke="#7a7a7a" stroke-width="1.5"/><path d="M18.5 11h3" stroke="#7a7a7a" stroke-width="1.5"/></svg>
<svg style="left:1820.7px;top:111px;" width="22" height="22" viewBox="0 0 22 22"><rect x="1.5" y="1.5" width="19" height="19" fill="#fff" stroke="#7a7a7a" stroke-width="1.4"/><rect x="1.5" y="1" width="19" height="3.5" fill="#3b7fd6"/><path d="M5.5 5v15" stroke="#7a7a7a" stroke-width="1.2"/><path d="M8.5 8.5h9M8.5 12.5h9M8.5 16.5h9" stroke="#7a7a7a" stroke-width="1.5"/></svg>
<svg style="left:1701px;top:140.5px;" width="22" height="22" viewBox="0 0 22 22"><rect x="1" y="1" width="20" height="9" fill="#3dab6c"/><text x="3" y="8.5" font-size="8.5" fill="#cfeedd" font-family="Liberation Sans,sans-serif" textLength="16">999</text><rect x="1.5" y="11" width="19" height="9.5" fill="#d6d6d6" stroke="#7a7a7a" stroke-width="1.3"/><path d="M2 20.2h18.5" stroke="#6a6a6a" stroke-width="1.6"/></svg>
<svg style="left:1731px;top:140.5px;" width="22" height="22" viewBox="0 0 22 22"><rect x="1" y="1" width="20" height="9" fill="#3dab6c"/><text x="3" y="8.3" font-size="7.5" fill="#cfeedd" font-family="Liberation Sans,sans-serif" textLength="16">ABC</text><rect x="1.5" y="11" width="19" height="9.5" fill="#d6d6d6" stroke="#7a7a7a" stroke-width="1.3"/><path d="M2 20.2h18.5" stroke="#6a6a6a" stroke-width="1.6"/></svg>
<svg style="left:1761px;top:140.5px;" width="22" height="22" viewBox="0 0 22 22"><path d="M2 21L21 2" stroke="#3b7fd6" stroke-width="1.5"/></svg>
<svg style="left:1790.8px;top:140.5px;" width="22" height="22" viewBox="0 0 22 22"><path d="M1 13c3-7 5-7 6 0s3 5 4-2 4-1 4 2 3 2 6-2" stroke="#3b7fd6" stroke-width="1.5" fill="none"/></svg>
<svg style="left:1820.7px;top:140.5px;" width="22" height="22" viewBox="0 0 22 22"><path d="M3 17l7-11 9 11z" stroke="#3b7fd6" stroke-width="1.3" fill="none"/><path d="M3 17h16" stroke="#f1f1f1" stroke-width="2"/><rect x="1" y="15" width="4" height="4" fill="#fff" stroke="#555" stroke-width="1.1"/><rect x="8" y="4" width="4" height="4" fill="#fff" stroke="#555" stroke-width="1.1"/><rect x="17" y="15" width="4" height="4" fill="#fff" stroke="#555" stroke-width="1.1"/></svg>
<svg style="left:1880px;top:88px;" width="22" height="22" viewBox="0 0 22 22"><path d="M1 1v20" stroke="#c6c6c6"/><rect x="3" y="3" width="8" height="7" fill="#fff" stroke="#c6c6c6"/><rect x="3" y="13" width="16" height="6" fill="#c6c6c6"/></svg>
<svg style="left:1908.7px;top:88px;" width="22" height="22" viewBox="0 0 22 22"><path d="M11 1v20" stroke="#c6c6c6"/><rect x="7" y="3" width="8" height="7" fill="#fff" stroke="#c6c6c6"/><rect x="3" y="13" width="16" height="6" fill="#c6c6c6"/></svg>
<svg style="left:1937.8px;top:88px;" width="22" height="22" viewBox="0 0 22 22"><path d="M21 1v20" stroke="#c6c6c6"/><rect x="11" y="3" width="8" height="7" fill="#fff" stroke="#c6c6c6"/><rect x="3" y="13" width="16" height="6" fill="#c6c6c6"/></svg>
<svg style="left:1966.7px;top:88px;" width="22" height="22" viewBox="0 0 22 22"><path d="M1 1h20" stroke="#c6c6c6"/><rect x="3" y="3" width="7" height="16" fill="#c6c6c6"/><rect x="12" y="3" width="7" height="8" fill="#fff" stroke="#c6c6c6"/></svg>
<svg style="left:1995.9px;top:88px;" width="22" height="22" viewBox="0 0 22 22"><path d="M1 11h20" stroke="#c6c6c6"/><rect x="3" y="7" width="7" height="8" fill="#fff" stroke="#c6c6c6"/><rect x="12" y="3" width="7" height="16" fill="#c6c6c6"/></svg>
<svg style="left:2024.5px;top:88px;" width="22" height="22" viewBox="0 0 22 22"><path d="M1 21h20" stroke="#c6c6c6"/><rect x="3" y="11" width="7" height="8" fill="#fff" stroke="#c6c6c6"/><rect x="12" y="3" width="7" height="16" fill="#c6c6c6"/></svg>
<div style="left:2051.5px;top:86px;width:1px;height:26px;background:#d4d4d4"></div>
<svg style="left:2055.5px;top:87px;" width="24" height="24" viewBox="0 0 24 24"><g transform="rotate(0 12 12)"><rect x="1" y="1" width="22" height="22" fill="#fff" stroke="#8a8a8a" stroke-width="1.2"/><rect x="1.5" y="10" width="21" height="4" fill="#f3b13e"/><path d="M12 2v6M9.5 5.5L12 8.6l2.5-3.1M12 22v-6M9.5 18.5L12 15.4l2.5 3.1" stroke="#333" stroke-width="1.5" fill="none"/></g></svg>
<svg style="left:2084.5px;top:87px;" width="24" height="24" viewBox="0 0 24 24"><g transform="rotate(90 12 12)"><rect x="1" y="1" width="22" height="22" fill="#fff" stroke="#8a8a8a" stroke-width="1.2"/><rect x="1.5" y="10" width="21" height="4" fill="#f3b13e"/><path d="M12 2v6M9.5 5.5L12 8.6l2.5-3.1M12 22v-6M9.5 18.5L12 15.4l2.5 3.1" stroke="#333" stroke-width="1.5" fill="none"/></g></svg>
<div style="left:2112.5px;top:86px;width:1px;height:26px;background:#d4d4d4"></div>
<svg style="left:2117.5px;top:88px;" width="22" height="22" viewBox="0 0 22 22"><rect x="9" y="4" width="4" height="14" fill="#c6c6c6"/><rect x="2" y="8" width="5" height="6" fill="#fff" stroke="#c6c6c6"/><rect x="15" y="8" width="5" height="6" fill="#fff" stroke="#c6c6c6"/><path d="M0 11h22" stroke="#c6c6c6"/></svg>
<svg style="left:2147px;top:88px;" width="22" height="22" viewBox="0 0 22 22"><rect x="4" y="9" width="14" height="4" fill="#c6c6c6"/><rect x="8" y="2" width="6" height="5" fill="#fff" stroke="#c6c6c6"/><rect x="8" y="15" width="6" height="5" fill="#fff" stroke="#c6c6c6"/><path d="M11 0v22" stroke="#c6c6c6"/></svg>
<svg style="left:2176px;top:88px;" width="24" height="22" viewBox="0 0 24 22"><rect x="1" y="1" width="4" height="4" fill="none" stroke="#b4b4b4"/><rect x="1" y="12" width="4" height="4" fill="none" stroke="#b4b4b4"/><rect x="8" y="1" width="4" height="4" fill="#b4b4b4"/><rect x="15" y="1" width="4" height="4" fill="none" stroke="#b4b4b4"/><text x="7" y="20" font-size="10" fill="#b4b4b4" font-family="Liberation Sans,sans-serif">XY</text></svg>
<svg style="left:1880px;top:125.6px;" width="22" height="22" viewBox="0 0 22 22"><rect x="2" y="2" width="18" height="9" fill="#c6c6c6"/><path d="M1 17h20M4 14l-3 3 3 3M18 14l3 3-3 3" stroke="#b4b4b4" fill="none" stroke-width="1.2"/><rect x="8" y="15" width="6" height="4" fill="#fff" stroke="#b4b4b4"/></svg>
<svg style="left:1908.7px;top:125.6px;" width="22" height="22" viewBox="0 0 22 22"><rect x="11" y="2" width="9" height="18" fill="#c6c6c6"/><path d="M5 1v20M2 4l3-3 3 3M2 18l3 3 3-3" stroke="#b4b4b4" fill="none" stroke-width="1.2"/><rect x="3" y="8" width="4" height="6" fill="#fff" stroke="#b4b4b4"/></svg>
<svg style="left:1937.8px;top:125.6px;" width="22" height="22" viewBox="0 0 22 22"><rect x="2" y="2" width="18" height="18" fill="none" stroke="#b4b4b4" stroke-dasharray="3 2"/><path d="M11 4v14M4 11h14M9 6l2-2 2 2M9 16l2 2 2-2M6 9l-2 2 2 2M16 9l2 2-2 2" stroke="#b4b4b4" fill="none" stroke-width="1.2"/></svg>
<svg style="left:1966.7px;top:125.6px;" width="22" height="22" viewBox="0 0 22 22"><path d="M3 8l6-5 8 8-6 5z" fill="#fff" stroke="#b4b4b4" stroke-width="1.3"/><path d="M2 19h14" stroke="#c6c6c6" stroke-width="2.6"/><circle cx="19" cy="15" r="1.6" fill="#b4b4b4"/></svg>
<div style="left:1993.5px;top:123px;width:1px;height:26px;background:#d4d4d4"></div>
<svg style="left:1998.5px;top:125.6px;" width="22" height="22" viewBox="0 0 22 22"><rect x="2" y="2" width="18" height="18" fill="none" stroke="#b4b4b4"/><rect x="5" y="5" width="8" height="8" fill="#b4b4b4"/><rect x="10" y="10" width="7" height="7" fill="#fff" stroke="#b4b4b4"/></svg>
<svg style="left:2027.5px;top:125.6px;" width="22" height="22" viewBox="0 0 22 22"><rect x="3" y="3" width="10" height="10" fill="#b4b4b4"/><rect x="10" y="10" width="8" height="8" fill="#fff" stroke="#b4b4b4"/><path d="M1 1h3M1 1v3M21 21h-3M21 21v-3" stroke="#b4b4b4"/></svg>
<svg style="left:2058px;top:126px;" width="22" height="22" viewBox="0 0 22 22"><path d="M13 1l8 8-3 1-4 4 1 4-3 1-5-5-6 7 0-2 5-6-5-5 2-2 4 1 4-4z" fill="#f3a63a"/></svg>
<div style="left:2083px;top:123px;width:1px;height:26px;background:#d4d4d4"></div>
<svg style="left:2091px;top:126px;" width="22" height="22" viewBox="0 0 22 22"><rect x="1" y="1" width="11" height="11" fill="#fff" stroke="#6a6a6a" stroke-width="1.1"/><rect x="5" y="5" width="11" height="11" fill="#3b7fd6"/><rect x="10" y="10" width="10" height="10" fill="#fff" stroke="#6a6a6a" stroke-width="1.1"/></svg>
<svg style="left:2117px;top:135px;" width="8" height="5" viewBox="0 0 8 5"><path d="M0 0h8L4 5z" fill="#2b579a"/></svg>
<svg style="left:2132px;top:125px;" width="24" height="23" viewBox="0 0 24 23"><rect x="1" y="1" width="20" height="11" fill="#f3b13e"/><path d="M11 10V4M8.5 6.5L11 3.6l2.5 2.9" stroke="#333" stroke-width="1.4" fill="none"/><rect x="1.5" y="12" width="19" height="9" fill="none" stroke="#8a8a8a" stroke-dasharray="2 1.5"/></svg>
<svg style="left:2159px;top:135px;" width="8" height="5" viewBox="0 0 8 5"><path d="M0 0h8L4 5z" fill="#2b579a"/></svg>
<svg style="left:2174px;top:125px;" width="24" height="23" viewBox="0 0 24 23"><rect x="1" y="1" width="20" height="5" fill="#f3b13e"/><rect x="1.5" y="6" width="19" height="7" fill="none" stroke="#8a8a8a" stroke-dasharray="2 1.5"/><path d="M11 9v11M8.5 12L11 9l2.500 3M8 17.500l3 3 3-3" stroke="#333" stroke-width="1.3" fill="none"/></svg>
<svg style="left:2201px;top:135px;" width="8" height="5" viewBox="0 0 8 5"><path d="M0 0h8L4 5z" fill="#2b579a"/></svg>
<svg style="left:2217px;top:127px;" width="20" height="20" viewBox="0 0 20 20"><path d="M1 1v18l17-9z" fill="#e2e2e2" stroke="#b4b4b4"/><path d="M1 10h17" stroke="#b4b4b4"/></svg>
<svg style="left:2242px;top:135px;" width="8" height="5" viewBox="0 0 8 5"><path d="M0 0h8L4 5z" fill="#c6c6c6"/></svg>
<div style="left:2272.2px;top:81.4px;width:34.6px;height:34px;background:#e6e6e6;border:1px solid #d4d4d4;box-sizing:border-box"></div>
<svg style="left:2280px;top:89px;" width="19" height="19" viewBox="0 0 19 19"><rect x=".8" y=".8" width="17" height="17" fill="#d8d8d8" stroke="#a8a8a8" stroke-width="1.2"/><path d="M2 17.2h15.5V2" stroke="#8c8c8c" stroke-width="1.4" fill="none"/></svg>
<div class="e" style="left:2138.7px;top:128.8px;width:300px;height:24px;line-height:24px;white-space:pre;text-align:center;color:#444;font-size:15px">字体</div>
<svg style="left:2285px;top:157px;" width="8" height="5" viewBox="0 0 8 5"><path d="M0 0h8L4 5z" fill="#2b579a"/></svg>
<div style="left:2350.4px;top:81.4px;width:34.6px;height:34px;background:#e6e6e6;border:1px solid #d4d4d4;box-sizing:border-box"></div>
<div class="e" style="left:2217.7px;top:86.6px;width:300px;height:24px;line-height:24px;white-space:pre;text-align:center;color:#8a8a8a;font-size:14.5px;letter-spacing:.5px">L1</div>
<div class="e" style="left:2217.8px;top:128.8px;width:300px;height:24px;line-height:24px;white-space:pre;text-align:center;color:#444;font-size:15px">状态/语言</div>
<svg style="left:2364px;top:157px;" width="8" height="5" viewBox="0 0 8 5"><path d="M0 0h8L4 5z" fill="#2b579a"/></svg>
<div style="left:1439px;top:192.6px;width:1041px;height:26.6px;background:#e9eefa"></div>
<div style="left:1681px;top:194.5px;width:85px;height:8px;background:#adc8ee;border-radius:6px 6px 0 0;border:1px solid #94b2dc;box-sizing:border-box"></div>
<div style="left:1768px;top:194.5px;width:112px;height:8px;background:#adc8ee;border-radius:6px 6px 0 0;border:1px solid #94b2dc;box-sizing:border-box"></div>
<div style="left:1883px;top:195px;width:132px;height:8px;background:#c4e4e4;border-radius:6px 6px 0 0;border:1px solid #9ac4c4;box-sizing:border-box"></div>
<svg style="left:2458px;top:200px;" width="10" height="13" viewBox="0 0 10 13"><path d="M1.5 1.5v10l6-5z" fill="none" stroke="#222" stroke-width="1.2"/></svg>
<div style="left:1439px;top:192.6px;width:164px;height:25px;background:linear-gradient(#d5e2f2,#e6eef9);border-bottom:1px solid #b9c9df;box-sizing:border-box"></div>
<div class="e" style="left:1443.8px;top:194.3px;height:24px;line-height:24px;white-space:pre;color:#000;font-size:13.6px">目录树</div>
<svg style="left:1592.5px;top:203px;" width="11" height="7" viewBox="0 0 11 7"><path d="M0 0h11L5.500 7z" fill="#111"/></svg>
<div style="left:1439px;top:217.6px;width:164px;height:990px;background:#f0f0f0"></div>
<div style="left:1443px;top:221.4px;width:162px;height:984px;background:#fff;border:1px solid #828790;box-sizing:border-box"></div>
<div style="left:1456.1px;top:222.4px;width:1.2px;height:982px;background:#929292"></div>
<div style="left:1481.2px;top:381.73px;width:1px;height:171.91px;background:#929292"></div>
<div style="left:1481.2px;top:781.53px;width:1px;height:391.8px;background:#929292"></div>
<div style="left:1444px;top:222.4px;width:158.600px;height:982px;overflow:hidden">
<div style="left:12.7px;top:10.9px;width:11px;height:1px;background:#929292"></div>
<svg style="left:27.8px;top:5.2px;" width="15.6" height="12.6"><use href="#ebw"/></svg>
<div class="e" style="left:49px;top:-0.3px;height:24px;line-height:24px;white-space:pre;color:#111;font-size:16.1px;letter-spacing:-.42px">3 : Fast Select...</div>
<div style="left:12.7px;top:30.89px;width:11px;height:1px;background:#929292"></div>
<svg style="left:27.8px;top:25.19px;" width="15.6" height="12.6"><use href="#ebw"/></svg>
<div class="e" style="left:49px;top:19.69px;height:24px;line-height:24px;white-space:pre;color:#111;font-size:16.1px;letter-spacing:-.42px">4 : Common ...</div>
<div style="left:12.7px;top:50.88px;width:11px;height:1px;background:#929292"></div>
<svg style="left:27.8px;top:45.18px;" width="15.6" height="12.6"><use href="#ebw"/></svg>
<div class="e" style="left:49px;top:39.68px;height:24px;line-height:24px;white-space:pre;color:#111;font-size:16.1px;letter-spacing:-.42px">5 : Device Res...</div>
<div style="left:12.7px;top:70.87px;width:11px;height:1px;background:#929292"></div>
<svg style="left:27.8px;top:65.17px;" width="15.6" height="12.6"><use href="#ebw"/></svg>
<div class="e" style="left:49px;top:59.67px;height:24px;line-height:24px;white-space:pre;color:#111;font-size:16.1px;letter-spacing:-.42px">6 : HMI Conn...</div>
<div style="left:12.7px;top:90.86px;width:11px;height:1px;background:#929292"></div>
<svg style="left:27.8px;top:85.16px;" width="15.6" height="12.6"><use href="#ebw"/></svg>
<div class="e" style="left:49px;top:79.66px;height:24px;line-height:24px;white-space:pre;color:#111;font-size:16.1px;letter-spacing:-.42px">7 : Password ...</div>
<div style="left:12.7px;top:110.85px;width:11px;height:1px;background:#929292"></div>
<svg style="left:27.8px;top:105.15px;" width="15.6" height="12.6"><use href="#ebw"/></svg>
<div class="e" style="left:49px;top:99.65px;height:24px;line-height:24px;white-space:pre;color:#111;font-size:16.1px;letter-spacing:-.42px">8 : Storage S...</div>
<div style="left:12.7px;top:130.84px;width:11px;height:1px;background:#929292"></div>
<svg style="left:27.8px;top:125.14px;" width="15.6" height="12.6"><use href="#ebw"/></svg>
<div class="e" style="left:49px;top:119.64px;height:24px;line-height:24px;white-space:pre;color:#111;font-size:16.1px;letter-spacing:-.42px">9 : Backup</div>
<div style="left:12.7px;top:150.83px;width:11px;height:1px;background:#929292"></div>
<div style="left:6.8px;top:145.83px;width:11px;height:11px;background:linear-gradient(#fff,#e4e8f0);border:1px solid #9aa4b8;box-sizing:border-box;border-radius:1.5px"></div>
<div style="left:9.3px;top:150.53px;width:6px;height:1.6px;background:#3a4a9a"></div>
<svg style="left:27.8px;top:145.13px;" width="15.6" height="12.6"><use href="#ebwb"/></svg>
<div class="e" style="left:49px;top:139.63px;height:24px;line-height:24px;white-space:pre;color:#111;font-size:16.1px;letter-spacing:-.42px">10 : <span class="c">背景</span></div>
<div style="left:37.7px;top:170.82px;width:10.5px;height:1px;background:#929292"></div>
<div class="e" style="left:53.8px;top:159.62px;height:24px;line-height:24px;white-space:pre;color:#111;font-size:16.1px;letter-spacing:-.42px">DW_0 (<span class="c">最下层</span>)</div>
<div style="left:37.7px;top:190.81px;width:10.5px;height:1px;background:#929292"></div>
<div class="e" style="left:53.8px;top:179.61px;height:24px;line-height:24px;white-space:pre;color:#111;font-size:16.1px;letter-spacing:-.42px">DW_1</div>
<div style="left:37.7px;top:210.8px;width:10.5px;height:1px;background:#929292"></div>
<div class="e" style="left:53.8px;top:199.6px;height:24px;line-height:24px;white-space:pre;color:#111;font-size:16.1px;letter-spacing:-.42px">DW_2</div>
<div style="left:37.7px;top:230.79px;width:10.5px;height:1px;background:#929292"></div>
<div class="e" style="left:53.8px;top:219.59px;height:24px;line-height:24px;white-space:pre;color:#111;font-size:16.1px;letter-spacing:-.42px">WL_0 (Int-H...</div>
<div style="left:37.7px;top:250.78px;width:10.5px;height:1px;background:#929292"></div>
<div class="e" style="left:53.8px;top:239.58px;height:24px;line-height:24px;white-space:pre;color:#111;font-size:16.1px;letter-spacing:-.42px">[<span class="c">当前页面：</span>] ...</div>
<div style="left:37.7px;top:270.77px;width:10.5px;height:1px;background:#929292"></div>
<div class="e" style="left:53.8px;top:259.57px;height:24px;line-height:24px;white-space:pre;color:#111;font-size:16.1px;letter-spacing:-.42px">[<span class="c">自动制动器组</span>...</div>
<div style="left:37.7px;top:290.76px;width:10.5px;height:1px;background:#929292"></div>
<div class="e" style="left:53.8px;top:279.56px;height:24px;line-height:24px;white-space:pre;color:#111;font-size:16.1px;letter-spacing:-.42px">FK_0</div>
<div style="left:37.7px;top:310.75px;width:10.5px;height:1px;background:#929292"></div>
<div class="e" style="left:53.8px;top:299.55px;height:24px;line-height:24px;white-space:pre;color:#111;font-size:16.1px;letter-spacing:-.42px">WL_1 (Int-H...</div>
<div style="left:37.7px;top:330.74px;width:10.5px;height:1px;background:#929292"></div>
<div class="e" style="left:53.8px;top:319.54px;height:24px;line-height:24px;white-space:pre;color:#111;font-size:16.1px;letter-spacing:-.42px">[<span class="c">设备状态</span>:] T...</div>
<div style="left:12.7px;top:350.73px;width:11px;height:1px;background:#929292"></div>
<svg style="left:27.8px;top:345.03px;" width="15.6" height="12.6"><use href="#ebwe"/></svg>
<div class="e" style="left:49px;top:339.53px;height:24px;line-height:24px;white-space:pre;color:#111;font-size:16.1px;letter-spacing:-.42px">11</div>
<div style="left:12.7px;top:370.72px;width:11px;height:1px;background:#929292"></div>
<svg style="left:27.8px;top:365.02px;" width="15.6" height="12.6"><use href="#ebw"/></svg>
<div class="e" style="left:49px;top:359.52px;height:24px;line-height:24px;white-space:pre;color:#111;font-size:16.1px;letter-spacing:-.42px">12 : <span class="c">初始化页面</span></div>
<div style="left:12.7px;top:390.71px;width:11px;height:1px;background:#929292"></div>
<svg style="left:27.8px;top:385.01px;" width="15.6" height="12.6"><use href="#ebwe"/></svg>
<div class="e" style="left:49px;top:379.51px;height:24px;line-height:24px;white-space:pre;color:#111;font-size:16.1px;letter-spacing:-.42px">13</div>
<div style="left:12.7px;top:410.7px;width:11px;height:1px;background:#929292"></div>
<svg style="left:27.8px;top:405px;" width="15.6" height="12.6"><use href="#ebwe"/></svg>
<div class="e" style="left:49px;top:399.5px;height:24px;line-height:24px;white-space:pre;color:#111;font-size:16.1px;letter-spacing:-.42px">14</div>
<div style="left:12.7px;top:430.69px;width:11px;height:1px;background:#929292"></div>
<div style="left:6.8px;top:425.69px;width:11px;height:11px;background:linear-gradient(#fff,#e4e8f0);border:1px solid #9aa4b8;box-sizing:border-box;border-radius:1.5px"></div>
<div style="left:9.3px;top:430.39px;width:6px;height:1.6px;background:#3a4a9a"></div>
<div style="left:11.5px;top:428.19px;width:1.6px;height:6px;background:#3a4a9a"></div>
<svg style="left:27.8px;top:424.99px;" width="15.6" height="12.6"><use href="#ebwb"/></svg>
<div class="e" style="left:49px;top:419.49px;height:24px;line-height:24px;white-space:pre;color:#111;font-size:16.1px;letter-spacing:-.42px">15 : <span class="c">历史记录</span></div>
<div style="left:12.7px;top:450.68px;width:11px;height:1px;background:#929292"></div>
<svg style="left:27.8px;top:444.98px;" width="15.6" height="12.6"><use href="#ebw"/></svg>
<div class="e" style="left:49px;top:439.48px;height:24px;line-height:24px;white-space:pre;color:#111;font-size:16.1px;letter-spacing:-.42px">16 : <span class="c">公司简介</span></div>
<div style="left:12.7px;top:470.67px;width:11px;height:1px;background:#929292"></div>
<svg style="left:27.8px;top:464.97px;" width="15.6" height="12.6"><use href="#ebwe"/></svg>
<div class="e" style="left:49px;top:459.47px;height:24px;line-height:24px;white-space:pre;color:#111;font-size:16.1px;letter-spacing:-.42px">17</div>
<div style="left:12.7px;top:490.66px;width:11px;height:1px;background:#929292"></div>
<svg style="left:27.8px;top:484.96px;" width="15.6" height="12.6"><use href="#ebwe"/></svg>
<div class="e" style="left:49px;top:479.46px;height:24px;line-height:24px;white-space:pre;color:#111;font-size:16.1px;letter-spacing:-.42px">18</div>
<div style="left:12.7px;top:510.65px;width:11px;height:1px;background:#929292"></div>
<svg style="left:27.8px;top:504.95px;" width="15.6" height="12.6"><use href="#ebwe"/></svg>
<div class="e" style="left:49px;top:499.45px;height:24px;line-height:24px;white-space:pre;color:#111;font-size:16.1px;letter-spacing:-.42px">19</div>
<div style="left:12.7px;top:530.64px;width:11px;height:1px;background:#929292"></div>
<svg style="left:27.8px;top:524.94px;" width="15.6" height="12.6"><use href="#ebwe"/></svg>
<div class="e" style="left:49px;top:519.44px;height:24px;line-height:24px;white-space:pre;color:#111;font-size:16.1px;letter-spacing:-.42px">20</div>
<div style="left:12.7px;top:550.63px;width:11px;height:1px;background:#929292"></div>
<div style="left:6.8px;top:545.63px;width:11px;height:11px;background:linear-gradient(#fff,#e4e8f0);border:1px solid #9aa4b8;box-sizing:border-box;border-radius:1.5px"></div>
<div style="left:9.3px;top:550.33px;width:6px;height:1.6px;background:#3a4a9a"></div>
<svg style="left:27.8px;top:544.93px;" width="15.6" height="12.6"><use href="#ebwb"/></svg>
<div class="e" style="left:49px;top:539.43px;height:24px;line-height:24px;white-space:pre;color:#111;font-size:16.1px;letter-spacing:-.42px">21 : <span class="c">监控页面</span></div>
<div style="left:37.7px;top:570.62px;width:10.5px;height:1px;background:#929292"></div>
<div class="e" style="left:53.8px;top:559.42px;height:24px;line-height:24px;white-space:pre;color:#111;font-size:16.1px;letter-spacing:-.42px">[<span class="c">系统状态</span>:(<span class="c">点</span>...</div>
<div style="left:37.7px;top:590.61px;width:10.5px;height:1px;background:#929292"></div>
<div class="e" style="left:53.8px;top:579.41px;height:24px;line-height:24px;white-space:pre;color:#111;font-size:16.1px;letter-spacing:-.42px">AL_0</div>
<div style="left:37.7px;top:610.6px;width:10.5px;height:1px;background:#929292"></div>
<div class="e" style="left:53.8px;top:599.4px;height:24px;line-height:24px;white-space:pre;color:#111;font-size:16.1px;letter-spacing:-.42px">SW_0 (Int-H...</div>
<div style="left:37.7px;top:630.59px;width:10.5px;height:1px;background:#929292"></div>
<div class="e" style="left:53.8px;top:619.39px;height:24px;line-height:24px;white-space:pre;color:#111;font-size:16.1px;letter-spacing:-.42px">FK_0</div>
<div style="left:37.7px;top:650.58px;width:10.5px;height:1px;background:#929292"></div>
<div class="e" style="left:53.8px;top:639.38px;height:24px;line-height:24px;white-space:pre;color:#111;font-size:16.1px;letter-spacing:-.42px">SW_1 (Int-H...</div>
<div style="left:37.7px;top:670.57px;width:10.5px;height:1px;background:#929292"></div>
<div class="e" style="left:53.8px;top:659.37px;height:24px;line-height:24px;white-space:pre;color:#111;font-size:16.1px;letter-spacing:-.42px">SP_0</div>
<div style="left:37.7px;top:690.56px;width:10.5px;height:1px;background:#929292"></div>
<div class="e" style="left:53.8px;top:679.36px;height:24px;line-height:24px;white-space:pre;color:#111;font-size:16.1px;letter-spacing:-.42px">ND_0 (LW-90...</div>
<div style="left:37.7px;top:710.55px;width:10.5px;height:1px;background:#929292"></div>
<div class="e" style="left:53.8px;top:699.35px;height:24px;line-height:24px;white-space:pre;color:#111;font-size:16.1px;letter-spacing:-.42px">ND_1 (LW-90...</div>
<div style="left:37.7px;top:730.54px;width:10.5px;height:1px;background:#929292"></div>
<div class="e" style="left:53.8px;top:719.34px;height:24px;line-height:24px;white-space:pre;color:#111;font-size:16.1px;letter-spacing:-.42px">ND_2 (LW-90...</div>
<div style="left:37.7px;top:750.53px;width:10.5px;height:1px;background:#929292"></div>
<div class="e" style="left:53.8px;top:739.33px;height:24px;line-height:24px;white-space:pre;color:#111;font-size:16.1px;letter-spacing:-.42px">[:] TX_1</div>
<div style="left:37.7px;top:770.52px;width:10.5px;height:1px;background:#929292"></div>
<div class="e" style="left:53.8px;top:759.32px;height:24px;line-height:24px;white-space:pre;color:#111;font-size:16.1px;letter-spacing:-.42px">ND_3 (LW-90...</div>
<div style="left:37.7px;top:790.51px;width:10.5px;height:1px;background:#929292"></div>
<div class="e" style="left:53.8px;top:779.31px;height:24px;line-height:24px;white-space:pre;color:#111;font-size:16.1px;letter-spacing:-.42px">ND_4 (LW-90...</div>
<div style="left:37.7px;top:810.5px;width:10.5px;height:1px;background:#929292"></div>
<div class="e" style="left:53.8px;top:799.3px;height:24px;line-height:24px;white-space:pre;color:#111;font-size:16.1px;letter-spacing:-.42px">[-] TX_2</div>
<div style="left:37.7px;top:830.49px;width:10.5px;height:1px;background:#929292"></div>
<div class="e" style="left:53.8px;top:819.29px;height:24px;line-height:24px;white-space:pre;color:#111;font-size:16.1px;letter-spacing:-.42px">[-] TX_3</div>
<div style="left:37.7px;top:850.48px;width:10.5px;height:1px;background:#929292"></div>
<div class="e" style="left:53.8px;top:839.28px;height:24px;line-height:24px;white-space:pre;color:#111;font-size:16.1px;letter-spacing:-.42px">SB_0 (Bool-H...</div>
<div style="left:37.7px;top:870.47px;width:10.5px;height:1px;background:#929292"></div>
<div class="e" style="left:53.8px;top:859.27px;height:24px;line-height:24px;white-space:pre;color:#111;font-size:16.1px;letter-spacing:-.42px">SB_1 (Bool-H...</div>
<div style="left:37.7px;top:890.46px;width:10.5px;height:1px;background:#929292"></div>
<div class="e" style="left:53.8px;top:879.26px;height:24px;line-height:24px;white-space:pre;color:#111;font-size:16.1px;letter-spacing:-.42px">[<span class="c">设备总产量</span>:] ...</div>
<div style="left:37.7px;top:910.45px;width:10.5px;height:1px;background:#929292"></div>
<div class="e" style="left:53.8px;top:899.25px;height:24px;line-height:24px;white-space:pre;color:#111;font-size:16.1px;letter-spacing:-.42px">[<span class="c">当班产量</span>:] T...</div>
<div style="left:37.7px;top:930.44px;width:10.5px;height:1px;background:#929292"></div>
<div class="e" style="left:53.8px;top:919.24px;height:24px;line-height:24px;white-space:pre;color:#111;font-size:16.1px;letter-spacing:-.42px">NE_0 (DInt-H...</div>
<div style="left:37.7px;top:950.43px;width:10.5px;height:1px;background:#929292"></div>
<div style="left:50px;top:941.33px;width:120px;height:19.6px;background:#ececec"></div>
<div class="e" style="left:53.8px;top:939.23px;height:24px;line-height:24px;white-space:pre;color:#111;font-size:16.1px;letter-spacing:-.42px">NE_1 (DInt-H...</div>
<div style="left:12.7px;top:970.42px;width:11px;height:1px;background:#929292"></div>
<svg style="left:27.8px;top:964.72px;" width="15.6" height="12.6"><use href="#ebwe"/></svg>
<div class="e" style="left:49px;top:959.22px;height:24px;line-height:24px;white-space:pre;color:#111;font-size:16.1px;letter-spacing:-.42px">22</div>
</div>
<div style="left:1439px;top:1207px;width:164px;height:27px;background:#f0f0f0"></div>
<div style="left:1442px;top:1233px;width:162px;height:1px;background:#d0d0d0"></div>
<div style="left:1487px;top:1208.4px;width:57.6px;height:26px;background:#fff;border:1px solid #d9d9d9;border-top:none;box-sizing:border-box"></div>
<div class="e" style="left:1450px;top:1210px;height:24px;line-height:24px;white-space:pre;color:#8a8a8a;font-size:13.6px">地址</div>
<div class="e" style="left:1495.4px;top:1210px;height:24px;line-height:24px;white-space:pre;color:#111;font-size:13.6px">目录树</div>
<div class="e" style="left:1552.4px;top:1210px;height:24px;line-height:24px;white-space:pre;color:#8a8a8a;font-size:13.6px">窗口预览</div>
<div style="left:1439px;top:1234.5px;width:1041px;height:33px;background:#f0f0f0"></div>
<div class="e" style="left:1441.6px;top:1241.4px;height:24px;line-height:24px;white-space:pre;color:#111;font-size:16px;letter-spacing:.02px">MT8102iP / MT8106iP</div>
<div style="left:2315px;top:219.2px;width:165px;height:1015.3px;background:#a9cef1"></div>
<div style="left:2315px;top:221.5px;width:160px;height:21.5px;background:#fff"></div>
<svg style="left:2315px;top:221.5px;" width="160" height="21.5" viewBox="0 0 160 21.5"><path d="M2.0 21v-4.5" stroke="#333" stroke-width="1"/><path d="M8.3 21v-4.5" stroke="#333" stroke-width="1"/><path d="M14.6 21v-4.5" stroke="#333" stroke-width="1"/><path d="M20.8 21v-4.5" stroke="#333" stroke-width="1"/><path d="M27.1 21v-4.5" stroke="#333" stroke-width="1"/><path d="M33.4 21v-4.5" stroke="#333" stroke-width="1"/><path d="M39.7 21v-4.5" stroke="#333" stroke-width="1"/><path d="M46.0 21v-4.5" stroke="#333" stroke-width="1"/><path d="M52.2 21v-4.5" stroke="#333" stroke-width="1"/><path d="M58.5 21v-4.5" stroke="#333" stroke-width="1"/><path d="M64.8 21v-4.5" stroke="#333" stroke-width="1"/><path d="M71.1 21v-4.5" stroke="#333" stroke-width="1"/><path d="M77.4 21v-4.5" stroke="#333" stroke-width="1"/><path d="M83.6 21v-4.5" stroke="#333" stroke-width="1"/><path d="M89.9 21v-4.5" stroke="#333" stroke-width="1"/><path d="M96.2 21v-4.5" stroke="#333" stroke-width="1"/><path d="M102.5 21v-4.5" stroke="#333" stroke-width="1"/><path d="M108.8 21v-4.5" stroke="#333" stroke-width="1"/><path d="M115.0 21v-4.5" stroke="#333" stroke-width="1"/><path d="M121.3 21v-4.5" stroke="#333" stroke-width="1"/><path d="M127.6 21v-4.5" stroke="#333" stroke-width="1"/><path d="M133.9 21v-4.5" stroke="#333" stroke-width="1"/><path d="M140.2 21v-4.5" stroke="#333" stroke-width="1"/><path d="M146.4 21v-4.5" stroke="#333" stroke-width="1"/><path d="M152.7 21v-4.5" stroke="#333" stroke-width="1"/><path d="M46 21V1.500M158.500 21V3" stroke="#222" stroke-width="1"/><text x="31" y="10.5" font-size="9" fill="#222" font-family="Liberation Sans,sans-serif">800</text><text x="156" y="9" font-size="9" fill="#222" font-family="Liberation Sans,sans-serif">9</text></svg>
<div style="left:2315px;top:243px;width:137.5px;height:110px;background:#c0c0c0"></div>
<div style="left:2315px;top:350.8px;width:76px;height:1.2px;background:#6b6bf0"></div>
<div style="left:2315px;top:352.5px;width:137.5px;height:2.6px;background:linear-gradient(#f4f4f4,#6f6f6f)"></div>
<div style="left:2315px;top:355px;width:137.5px;height:64px;background:#e9eaf6"></div>
<div style="left:2391px;top:355px;width:1px;height:58px;background:#f2f2fa"></div>
<div style="left:2315px;top:413px;width:76px;height:1.2px;background:#6b6bf0"></div>
<div style="left:2315px;top:414.5px;width:137.5px;height:4.5px;background:#dfe0f4"></div>
<div style="left:2311.5px;top:357px;height:40px;line-height:40px;white-space:pre;color:#8f8f8f;font-size:28.5px;font-family:'Noto Serif CJK SC','Liberation Serif',serif;font-weight:300">态 :</div>
<div style="left:2315px;top:419px;width:137.5px;height:61px;background:#f0f0f0"></div>
<div style="left:2329.5px;top:425.5px;width:70px;height:48px;border:1px solid #fdfdfd;box-sizing:border-box"></div>
<div style="left:2404.5px;top:425.5px;width:48px;height:48px;border:1px solid #fdfdfd;border-right:none;box-sizing:border-box"></div>
<div class="e" style="left:2329px;top:438.5px;height:30px;line-height:30px;white-space:pre;color:#111;font-size:27.5px;letter-spacing:1.9px">####</div>
<div class="e" style="left:2412.5px;top:438.5px;height:30px;line-height:30px;white-space:pre;color:#111;font-size:27.5px;letter-spacing:1.9px">##</div>
<div style="left:2397px;top:452.5px;width:14px;height:1.2px;background:#333"></div>
<div style="left:2446px;top:452.5px;width:7px;height:1.2px;background:#333"></div>
<div class="e" style="left:2313px;top:421.5px;height:14px;line-height:14px;white-space:pre;color:#f01818;font-size:11.5px">P_0</div>
<div class="e" style="left:2316px;top:429px;height:14px;line-height:14px;white-space:pre;color:#f01818;font-size:11.5px">–</div>
<div class="e" style="left:2331.5px;top:428.5px;height:14px;line-height:14px;white-space:pre;color:#f01818;font-size:11.800px;letter-spacing:-.2px">ND_0 (LW-9012)</div>
<div class="e" style="left:2411px;top:428.5px;height:14px;line-height:14px;white-space:pre;color:#f01818;font-size:11.8px">(2) 1 (L</div>
<div class="e" style="left:2400px;top:438.5px;height:14px;line-height:14px;white-space:pre;color:#f01818;font-size:11.8px">TX_3</div>
<div style="left:2315px;top:480px;width:137.5px;height:1.3px;background:#3a3a3a"></div>
<div style="left:2315px;top:481.3px;width:137.5px;height:11.2px;background:#e6e7f6"></div>
<div style="left:2315px;top:492.5px;width:137.5px;height:305px;background:#009200"></div>
<div style="left:2315px;top:500px;width:105.5px;height:1px;background:#8da2a2"></div>
<div style="left:2315px;top:539.1px;width:105.5px;height:1px;background:#8da2a2"></div>
<div style="left:2315px;top:577.2px;width:105.5px;height:1px;background:#8da2a2"></div>
<div style="left:2315px;top:616px;width:105.5px;height:1px;background:#8da2a2"></div>
<div style="left:2315px;top:655px;width:105.5px;height:1px;background:#8da2a2"></div>
<div style="left:2315px;top:693.8px;width:105.5px;height:1px;background:#8da2a2"></div>
<div style="left:2315px;top:732.2px;width:105.5px;height:1px;background:#8da2a2"></div>
<div style="left:2315px;top:770.9px;width:105.5px;height:1px;background:#8da2a2"></div>
<div style="left:2344.3px;top:500px;width:1px;height:297.5px;background:#8da2a2"></div>
<div style="left:2419.9px;top:500px;width:1px;height:297.5px;background:#8da2a2"></div>
<div style="left:2351.8px;top:504.5px;width:60px;height:30px;line-height:30px;white-space:pre;text-align:center;color:#2cf02c;font-size:31px;font-family:'Liberation Serif',serif">10</div>
<div style="left:2452.5px;top:243px;width:21px;height:991px;background:#f0f0f0"></div>
<svg style="left:2457px;top:250px;" width="12" height="8" viewBox="0 0 12 8"><path d="M1 7l5-5 5 5" stroke="#444" stroke-width="1.600" fill="none"/></svg>
<div style="left:2453.5px;top:528px;width:18px;height:706px;background:#c9c9c9"></div>
<div style="left:1602.6px;top:200.1px;width:712.4px;height:1189.2px;background:#f0f0f0;box-shadow:0 0 11px 1px rgba(0,0,0,.3);border:1px solid #c8c8c8;box-sizing:border-box"></div>
<div style="left:1603.6px;top:201.1px;width:710.4px;height:37px;background:#fff"></div>
<div class="e" style="left:1611.9px;top:208px;height:24px;line-height:24px;white-space:pre;color:#9b9b9b;font-size:15px">数值的属性</div>
<svg style="left:2287px;top:213px;" width="14" height="14" viewBox="0 0 14 14"><path d="M.5 .5l12.5 12.5M13 .5L.5 13" stroke="#555" stroke-width="1.1"/></svg>
<div style="left:1612.7px;top:275.3px;width:690.6px;height:1057px;background:#fff;border:1px solid #dcdcdc;box-sizing:border-box"></div>
<div style="left:1687.3px;top:250.7px;width:71.2px;height:25.2px;background:#f0f0f0;border:1px solid #d9d9d9;box-sizing:border-box"></div>
<div class="e" style="left:1691.8px;top:252.4px;height:24px;line-height:24px;white-space:pre;color:#111;font-size:15px">数值输入</div>
<div style="left:1757.5px;top:250.7px;width:54.5px;height:25.2px;background:#f0f0f0;border:1px solid #d9d9d9;box-sizing:border-box"></div>
<div class="e" style="left:1764px;top:252.4px;height:24px;line-height:24px;white-space:pre;color:#111;font-size:15px">格式</div>
<div style="left:1811px;top:250.7px;width:55px;height:25.2px;background:#f0f0f0;border:1px solid #d9d9d9;box-sizing:border-box"></div>
<div class="e" style="left:1817.5px;top:252.4px;height:24px;line-height:24px;white-space:pre;color:#111;font-size:15px">安全</div>
<div style="left:1865px;top:250.7px;width:55px;height:25.2px;background:#f0f0f0;border:1px solid #d9d9d9;box-sizing:border-box"></div>
<div class="e" style="left:1871.5px;top:252.4px;height:24px;line-height:24px;white-space:pre;color:#111;font-size:15px">图片</div>
<div style="left:1919px;top:250.7px;width:55px;height:25.2px;background:#f0f0f0;border:1px solid #d9d9d9;box-sizing:border-box"></div>
<div class="e" style="left:1925.5px;top:252.4px;height:24px;line-height:24px;white-space:pre;color:#111;font-size:15px">字体</div>
<div style="left:1973px;top:250.7px;width:54px;height:25.2px;background:#f0f0f0;border:1px solid #d9d9d9;box-sizing:border-box"></div>
<div class="e" style="left:1979.5px;top:252.4px;height:24px;line-height:24px;white-space:pre;color:#111;font-size:15px">轮廓</div>
<div style="left:1612.7px;top:248.7px;width:75.3px;height:28px;background:#fff;border:1px solid #d9d9d9;border-bottom:none;box-sizing:border-box"></div>
<div class="e" style="left:1620px;top:249.7px;height:24px;line-height:24px;white-space:pre;color:#111;font-size:15px">一般属性</div>
<div class="e" style="left:1731px;top:293.4px;height:24px;line-height:24px;white-space:pre;color:#111;font-size:15px">描述 :</div>
<div style="left:1780.3px;top:292.6px;width:496.7px;height:28.8px;background:#fff;border:1px solid #7a7a7a;box-sizing:border-box"></div>
<div style="left:1623.3px;top:337.2px;width:672px;height:98.4px;border:1px solid #dcdcdc;box-sizing:border-box"></div>
<svg style="left:1657.1px;top:356.6px;" width="15.4" height="15.4" viewBox="0 0 15.4 15.4"><rect x=".6" y=".6" width="14.200000000000001" height="14.200000000000001" fill="#fff" stroke="#333" stroke-width="1.2"/><path d="M3 7.8l3.2 3.4L12.4 4" stroke="#222" stroke-width="1.4" fill="none"/></svg>
<div class="e" style="left:1677px;top:352.3px;height:24px;line-height:24px;white-space:pre;color:#111;font-size:15px">启用输入功能</div>
<div style="left:1623.3px;top:560.5px;width:672px;height:57.8px;border:1px solid #dcdcdc;box-sizing:border-box"></div>
<svg style="left:1657.1px;top:582.2px;" width="15.4" height="15.4" viewBox="0 0 15.4 15.4"><rect x=".6" y=".6" width="14.200000000000001" height="14.200000000000001" fill="#fff" stroke="#333" stroke-width="1.2"/></svg>
<div class="e" style="left:1677px;top:577.9px;height:24px;line-height:24px;white-space:pre;color:#111;font-size:15px">读取/写入使用不同的地址</div>
<div style="left:1623.3px;top:717.3px;width:672px;height:98.4px;border:1px solid #dcdcdc;box-sizing:border-box"></div>
<div style="left:1629.5px;top:708px;width:71px;height:18px;background:#fff"></div>
<div class="e" style="left:1632.4px;top:705.8px;height:24px;line-height:24px;white-space:pre;color:#111;font-size:15px">读取/写入</div>
<div class="e" style="left:1695.5px;top:737px;height:24px;line-height:24px;white-space:pre;color:#111;font-size:15px">设备 :</div>
<div style="left:1741.9px;top:735.2px;width:413.8px;height:27.4px;background:#e1e1e1;border:1px solid #adadad;box-sizing:border-box"></div>
<div class="e" style="left:1746.3px;top:737.3px;height:24px;line-height:24px;white-space:pre;color:#111;font-size:16.3px;letter-spacing:-.34px">Siemens S7-1200</div>
<svg style="left:2139.5px;top:745px;" width="12" height="8" viewBox="0 0 12 8"><path d="M1 1.500l5 5 5-5" stroke="#333" stroke-width="1.2" fill="none"/></svg>
<div style="left:2160px;top:736px;width:78.8px;height:27.4px;background:#e1e1e1;border:1px solid #adadad;box-sizing:border-box"></div>
<svg style="left:2192px;top:741.5px;" width="18" height="17" viewBox="0 0 18 17"><path d="M1 7.500L6 2.500h9.500a1 1 0 0 1 1 1v8a1 1 0 0 1-1 1H6z" fill="#fff" stroke="#666" stroke-width="1.1"/><circle cx="11.500" cy="10.500" r="3.600" fill="#e8963a"/><circle cx="11.500" cy="10.500" r="1.500" fill="#f6c88a"/></svg>
<div style="left:2243.3px;top:736px;width:33.4px;height:27.4px;background:#e1e1e1;border:1px solid #adadad;box-sizing:border-box"></div>
<svg style="left:2251px;top:741.5px;" width="18" height="17" viewBox="0 0 18 17"><path d="M1 7.500L6 2.500h9.500a1 1 0 0 1 1 1v8a1 1 0 0 1-1 1H6z" fill="#fff" stroke="#666" stroke-width="1.1"/><path d="M11.500 6.500v8M7.500 10.500h8" stroke="#2fa36b" stroke-width="2"/></svg>
<div class="e" style="left:1695.5px;top:773.5px;height:24px;line-height:24px;white-space:pre;color:#111;font-size:15px">标签 :</div>
<div style="left:1741.9px;top:770.3px;width:412px;height:27.4px;background:#cccccc;border:1px solid #bfbfbf;box-sizing:border-box"></div>
<div class="e" style="left:1746px;top:773.3px;height:24px;line-height:24px;white-space:pre;color:#838383;font-size:13.900px;letter-spacing:-.12px">HMI_可保持[DB168]-od_当班产量</div>
<svg style="left:2140px;top:781px;" width="10" height="7" viewBox="0 0 10 7"><path d="M1 1l4 4 4-4" stroke="#8a8a8a" stroke-width="1.200" fill="none"/></svg>
<div style="left:2158.7px;top:770.3px;width:118px;height:27.4px;background:#fff;border-top:1px solid #7a7a7a;box-sizing:border-box"></div>
<div class="e" style="left:2160.8px;top:769.9px;height:24px;line-height:24px;white-space:pre;color:#111;font-size:16.5px">DInt</div>
<div style="left:1623.3px;top:945.5px;width:672px;height:208px;border:1px solid #dcdcdc;box-sizing:border-box"></div>
<div style="left:1629.5px;top:936px;width:38px;height:18px;background:#fff"></div>
<div class="e" style="left:1632.4px;top:933.5px;height:24px;line-height:24px;white-space:pre;color:#111;font-size:15px">通知</div>
<svg style="left:1657.1px;top:969.6px;" width="15.4" height="15.4" viewBox="0 0 15.4 15.4"><rect x=".6" y=".6" width="14.200000000000001" height="14.200000000000001" fill="#fff" stroke="#333" stroke-width="1.2"/></svg>
<div class="e" style="left:1677.4px;top:965.3px;height:24px;line-height:24px;white-space:pre;color:#111;font-size:15px">启用</div>
<div style="left:1623.3px;top:1168px;width:672px;height:147.5px;border:1px solid #dcdcdc;box-sizing:border-box"></div>
<div style="left:1629.5px;top:1158.5px;width:98px;height:18px;background:#fff"></div>
<div class="e" style="left:1632px;top:1155.8px;height:24px;line-height:24px;white-space:pre;color:#111;font-size:15px">输入无效通知</div>
<svg style="left:1657.1px;top:1194.3px;" width="15.4" height="15.4" viewBox="0 0 15.4 15.4"><rect x=".6" y=".6" width="14.200000000000001" height="14.200000000000001" fill="#fff" stroke="#333" stroke-width="1.2"/></svg>
<div class="e" style="left:1677.4px;top:1190.3px;height:24px;line-height:24px;white-space:pre;color:#111;font-size:15px">启用</div>
<div style="left:1750.4px;top:797.4px;width:775.6px;height:783.6px;background:#fff;box-shadow:0 0 14px 2px rgba(0,0,0,.5);border:1px solid #6a6a6a;box-sizing:border-box"></div>
<div style="left:1756.1px;top:811.3px;width:35.8px;height:26.4px;background:#cce4f7;border:1.400px solid #0078d7;box-sizing:border-box"></div>
<svg style="left:1765px;top:816px;" width="18" height="17" viewBox="0 0 18 17"><path d="M2.500 14V5.500L5.500 2l3 3.500V9" fill="none" stroke="#6a6a6a" stroke-width="1.2"/><circle cx="5.500" cy="5.600" r=".9" fill="#6a6a6a"/><path d="M2.500 14H6" stroke="#6a6a6a" stroke-width="1.200"/><circle cx="11.500" cy="11.500" r="3.600" fill="none" stroke="#3b7fd6" stroke-width="1"/><path d="M8 11.500h7M11.500 8v7" stroke="#3b7fd6" stroke-width=".8"/></svg>
<div style="left:1756.1px;top:843.7px;width:35.8px;height:26.4px;background:#e1e1e1;border:1px solid #adadad;box-sizing:border-box"></div>
<svg style="left:1765px;top:848.5px;" width="18" height="17" viewBox="0 0 18 17"><path d="M2.500 14V5.500L5.500 2l3 3.500V9" fill="none" stroke="#6a6a6a" stroke-width="1.2"/><circle cx="5.500" cy="5.600" r=".9" fill="#6a6a6a"/><path d="M2.500 14H6" stroke="#6a6a6a" stroke-width="1.200"/><path d="M8 15l1-3 6-6 2 2-6 6z" fill="#3b7fd6"/></svg>
<svg style="left:1810px;top:822.5px;" width="5" height="8" viewBox="0 0 5 8"><path d="M0 0l4.500 4L0 8z" fill="#111"/></svg>
<svg style="left:1818px;top:820px;" width="15.5" height="12"><use href="#tfold"/></svg>
<div class="e" style="left:1841px;top:816.5px;height:24px;line-height:24px;white-space:pre;color:#111;font-size:14px;letter-spacing:-.4px">Tags</div>
<svg style="left:1882px;top:822.5px;" width="5" height="8" viewBox="0 0 5 8"><path d="M0 0l4.500 4L0 8z" fill="#111"/></svg>
<svg style="left:1890px;top:820px;" width="15.5" height="12"><use href="#tfold"/></svg>
<div class="e" style="left:1913.2px;top:816.5px;height:24px;line-height:24px;white-space:pre;color:#111;font-size:14px;letter-spacing:-.13px">Program blocks</div>
<svg style="left:2022px;top:822.5px;" width="5" height="8" viewBox="0 0 5 8"><path d="M0 0l4.500 4L0 8z" fill="#111"/></svg>
<svg style="left:2030px;top:819px;" width="14.5" height="14.5"><use href="#ttag"/></svg>
<div class="e" style="left:2052.9px;top:816.5px;height:24px;line-height:24px;white-space:pre;color:#111;font-size:14px;letter-spacing:-.1px">HMI_<span class="c">可保持</span>[DB168]</div>
<svg style="left:2188px;top:822.5px;" width="5" height="8" viewBox="0 0 5 8"><path d="M0 0l4.500 4L0 8z" fill="#111"/></svg>
<svg style="left:2312.5px;top:817px;" width="20" height="20" viewBox="0 0 20 20"><circle cx="8" cy="8" r="6.200" fill="#fff" stroke="#8a8a8a" stroke-width="1.300"/><path d="M12.500 12.500l6 6" stroke="#8a8a8a" stroke-width="2.200"/></svg>
<div style="left:2335.9px;top:816.6px;width:190px;height:20.8px;background:#fff;border:1.300px solid #0078d7;box-sizing:border-box"></div>
<div style="left:1805.2px;top:845.5px;width:255.6px;height:654px;background:#fff;border:1px solid #7a7a7a;box-sizing:border-box"></div>
<svg style="left:1812.2px;top:853.8px;" width="12" height="8" viewBox="0 0 12 8"><path d="M1 1l5 5.500L11 1" stroke="#333" stroke-width="1.400" fill="none"/></svg>
<svg style="left:1834px;top:851px;" width="15.5" height="12.5"><use href="#tfold"/></svg>
<div class="e" style="left:1854.7px;top:846.3px;height:24px;line-height:24px;white-space:pre;color:#111;font-size:16.600px">Tags</div>
<svg style="left:1837.4px;top:875.8px;" width="12" height="8" viewBox="0 0 12 8"><path d="M1 1l5 5.500L11 1" stroke="#333" stroke-width="1.400" fill="none"/></svg>
<svg style="left:1859.2px;top:873px;" width="15.5" height="12.5"><use href="#tfold"/></svg>
<div class="e" style="left:1879.5px;top:867.3px;height:24px;line-height:24px;white-space:pre;color:#111;font-size:16.400px;letter-spacing:-.08px">Program blocks</div>
<div style="left:1808px;top:884.7px;width:250px;height:181px;background:#fff"></div>
<svg style="left:1866px;top:1072.2px;" width="8" height="11" viewBox="0 0 8 11"><path d="M1 1l5 4.500L1 10" stroke="#8a8a8a" stroke-width="1.200" fill="none"/></svg>
<svg style="left:1884px;top:1070.5px;" width="14.5" height="14.5"><use href="#ttag"/></svg>
<div class="e" style="left:1904.7px;top:1066px;height:24px;line-height:24px;white-space:pre;color:#111;font-size:16.200px;letter-spacing:-.3px">HMI_[DB200]</div>
<div style="left:1881px;top:1090px;width:173.7px;height:20px;background:#a6e4f0"></div>
<svg style="left:1884px;top:1092.5px;" width="14.5" height="14.5"><use href="#ttag"/></svg>
<div class="e" style="left:1904.7px;top:1087.8px;height:24px;line-height:24px;white-space:pre;color:#111;font-size:16.200px;letter-spacing:.1px">HMI_<span class="c">可保持</span>[DB168]</div>
<div style="left:2067.2px;top:845.5px;width:460px;height:679px;background:#fff;border:1px solid #7a7a7a;box-sizing:border-box"></div>
<div class="e" style="left:2017.8px;top:849.3px;width:300px;height:24px;line-height:24px;white-space:pre;text-align:center;color:#111;font-size:13.600px">名称</div>
<div class="e" style="left:2157.5px;top:849.3px;width:300px;height:24px;line-height:24px;white-space:pre;text-align:center;color:#111;font-size:13.600px">数据类型</div>
<div class="e" style="left:2298px;top:849.3px;width:300px;height:24px;line-height:24px;white-space:pre;text-align:center;color:#111;font-size:13.600px">描述</div>
<div style="left:2267px;top:847px;width:1px;height:27.5px;background:#e0e0e0"></div>
<div style="left:2347.3px;top:847px;width:1px;height:27.5px;background:#e0e0e0"></div>
<svg style="left:2073.3px;top:885.82px;" width="12" height="12"><use href="#cy"/></svg>
<div class="e" style="left:2091.1px;top:880.52px;height:24px;line-height:24px;white-space:pre;color:#111;font-size:16.300px;letter-spacing:-.05px">ior_6#_<span class="c">取料位</span></div>
<div class="e" style="left:2271.5px;top:880.52px;height:24px;line-height:24px;white-space:pre;color:#111;font-size:15.200px;letter-spacing:-.75px">REAL</div>
<div style="left:2068.2px;top:911.44px;width:446px;height:37.04px;background:#f2f2f2"></div>
<svg style="left:2073.3px;top:922.86px;" width="12" height="12"><use href="#cy"/></svg>
<div class="e" style="left:2091.1px;top:917.56px;height:24px;line-height:24px;white-space:pre;color:#111;font-size:16.300px;letter-spacing:-.05px">ior_6#_<span class="c">放料位</span></div>
<div class="e" style="left:2271.5px;top:917.56px;height:24px;line-height:24px;white-space:pre;color:#111;font-size:15.200px;letter-spacing:-.75px">REAL</div>
<svg style="left:2073.3px;top:959.9px;" width="12" height="12"><use href="#cy"/></svg>
<div class="e" style="left:2091.1px;top:954.6px;height:24px;line-height:24px;white-space:pre;color:#111;font-size:16.300px;letter-spacing:-.05px">ior_7#_<span class="c">取料位</span></div>
<div class="e" style="left:2271.5px;top:954.6px;height:24px;line-height:24px;white-space:pre;color:#111;font-size:15.200px;letter-spacing:-.75px">REAL</div>
<div style="left:2068.2px;top:985.52px;width:446px;height:37.04px;background:#f2f2f2"></div>
<svg style="left:2073.3px;top:996.94px;" width="12" height="12"><use href="#cy"/></svg>
<div class="e" style="left:2091.1px;top:991.64px;height:24px;line-height:24px;white-space:pre;color:#111;font-size:16.300px;letter-spacing:-.05px">ior_7#_<span class="c">放料位</span></div>
<div class="e" style="left:2271.5px;top:991.64px;height:24px;line-height:24px;white-space:pre;color:#111;font-size:15.200px;letter-spacing:-.75px">REAL</div>
<svg style="left:2073.3px;top:1033.98px;" width="12" height="12"><use href="#cy"/></svg>
<div class="e" style="left:2091.1px;top:1028.68px;height:24px;line-height:24px;white-space:pre;color:#111;font-size:16.300px;letter-spacing:-.05px">ir_4#_JOG<span class="c">速度</span></div>
<div class="e" style="left:2271.5px;top:1028.68px;height:24px;line-height:24px;white-space:pre;color:#111;font-size:15.200px;letter-spacing:-.75px">REAL</div>
<div style="left:2068.2px;top:1059.6px;width:446px;height:37.04px;background:#f2f2f2"></div>
<svg style="left:2073.3px;top:1071.02px;" width="12" height="12"><use href="#cy"/></svg>
<div class="e" style="left:2091.1px;top:1065.72px;height:24px;line-height:24px;white-space:pre;color:#111;font-size:16.300px;letter-spacing:-.05px">ir_4#_<span class="c">定位速度</span></div>
<div class="e" style="left:2271.5px;top:1065.72px;height:24px;line-height:24px;white-space:pre;color:#111;font-size:15.200px;letter-spacing:-.75px">REAL</div>
<svg style="left:2073.3px;top:1108.06px;" width="12" height="12"><use href="#cy"/></svg>
<div class="e" style="left:2091.1px;top:1102.76px;height:24px;line-height:24px;white-space:pre;color:#111;font-size:16.300px;letter-spacing:-.05px">ir_6#_JOG<span class="c">速度</span></div>
<div class="e" style="left:2271.5px;top:1102.76px;height:24px;line-height:24px;white-space:pre;color:#111;font-size:15.200px;letter-spacing:-.75px">REAL</div>
<div style="left:2068.2px;top:1133.68px;width:446px;height:37.04px;background:#f2f2f2"></div>
<svg style="left:2073.3px;top:1145.1px;" width="12" height="12"><use href="#cy"/></svg>
<div class="e" style="left:2091.1px;top:1139.8px;height:24px;line-height:24px;white-space:pre;color:#111;font-size:16.300px;letter-spacing:-.05px">ir_6#_<span class="c">定位速度</span></div>
<div class="e" style="left:2271.5px;top:1139.8px;height:24px;line-height:24px;white-space:pre;color:#111;font-size:15.200px;letter-spacing:-.75px">REAL</div>
<svg style="left:2073.3px;top:1182.14px;" width="12" height="12"><use href="#cy"/></svg>
<div class="e" style="left:2091.1px;top:1176.84px;height:24px;line-height:24px;white-space:pre;color:#111;font-size:16.300px;letter-spacing:-.05px">ir_7#_JOG<span class="c">速度</span></div>
<div class="e" style="left:2271.5px;top:1176.84px;height:24px;line-height:24px;white-space:pre;color:#111;font-size:15.200px;letter-spacing:-.75px">REAL</div>
<div style="left:2068.2px;top:1207.76px;width:446px;height:37.04px;background:#f2f2f2"></div>
<svg style="left:2073.3px;top:1219.18px;" width="12" height="12"><use href="#cy"/></svg>
<div class="e" style="left:2091.1px;top:1213.88px;height:24px;line-height:24px;white-space:pre;color:#111;font-size:16.300px;letter-spacing:-.05px">ir_7#_<span class="c">定位速度</span></div>
<div class="e" style="left:2271.5px;top:1213.88px;height:24px;line-height:24px;white-space:pre;color:#111;font-size:15.200px;letter-spacing:-.75px">REAL</div>
<svg style="left:2073.3px;top:1256.22px;" width="12" height="12"><use href="#cy"/></svg>
<div class="e" style="left:2091.1px;top:1250.92px;height:24px;line-height:24px;white-space:pre;color:#111;font-size:16.300px;letter-spacing:-.05px">ir_<span class="c">环轨</span>_<span class="c">初始位距离</span></div>
<div class="e" style="left:2271.5px;top:1250.92px;height:24px;line-height:24px;white-space:pre;color:#111;font-size:15.200px;letter-spacing:-.75px">REAL</div>
<div style="left:2068.2px;top:1281.84px;width:446px;height:37.04px;background:#f2f2f2"></div>
<svg style="left:2073.3px;top:1293.26px;" width="12" height="12"><use href="#cy"/></svg>
<div class="e" style="left:2091.1px;top:1287.96px;height:24px;line-height:24px;white-space:pre;color:#111;font-size:16.300px;letter-spacing:-.05px">ir_<span class="c">环轨</span>_<span class="c">回原点速度</span></div>
<div class="e" style="left:2271.5px;top:1287.96px;height:24px;line-height:24px;white-space:pre;color:#111;font-size:15.200px;letter-spacing:-.75px">REAL</div>
<svg style="left:2073.3px;top:1330.3px;" width="12" height="12"><use href="#cy"/></svg>
<div class="e" style="left:2091.1px;top:1325px;height:24px;line-height:24px;white-space:pre;color:#111;font-size:16.300px;letter-spacing:-.05px">ir_<span class="c">环轨</span>_<span class="c">定位距离</span></div>
<div class="e" style="left:2271.5px;top:1325px;height:24px;line-height:24px;white-space:pre;color:#111;font-size:15.200px;letter-spacing:-.75px">REAL</div>
<div style="left:2068.2px;top:1355.92px;width:446px;height:37.04px;background:#f2f2f2"></div>
<svg style="left:2073.3px;top:1367.34px;" width="12" height="12"><use href="#cy"/></svg>
<div class="e" style="left:2091.1px;top:1362.04px;height:24px;line-height:24px;white-space:pre;color:#111;font-size:16.300px;letter-spacing:-.05px">ir_<span class="c">环轨</span>_<span class="c">定位速度</span></div>
<div class="e" style="left:2271.5px;top:1362.04px;height:24px;line-height:24px;white-space:pre;color:#111;font-size:15.200px;letter-spacing:-.75px">REAL</div>
<svg style="left:2073.3px;top:1404.38px;" width="12" height="12"><use href="#cy"/></svg>
<div class="e" style="left:2091.1px;top:1399.08px;height:24px;line-height:24px;white-space:pre;color:#111;font-size:16.300px;letter-spacing:-.05px">ir_<span class="c">环轨</span>_<span class="c">点动速度</span></div>
<div class="e" style="left:2271.5px;top:1399.08px;height:24px;line-height:24px;white-space:pre;color:#111;font-size:15.200px;letter-spacing:-.75px">REAL</div>
<div style="left:2068.2px;top:1430px;width:446px;height:37.04px;background:#f2f2f2"></div>
<svg style="left:2073.3px;top:1441.42px;" width="12" height="12"><use href="#cy"/></svg>
<div class="e" style="left:2091.1px;top:1436.12px;height:24px;line-height:24px;white-space:pre;color:#111;font-size:16.300px;letter-spacing:-.05px">ob_<span class="c">设备总产量</span></div>
<div class="e" style="left:2271.5px;top:1436.12px;height:24px;line-height:24px;white-space:pre;color:#111;font-size:15.200px;letter-spacing:-.75px">DINT</div>
<div style="left:2068.2px;top:1466.04px;width:446px;height:36.5px;background:#a8e6f0"></div>
<svg style="left:2073.3px;top:1478.46px;" width="12" height="12"><use href="#cy2"/></svg>
<div class="e" style="left:2091.1px;top:1473.16px;height:24px;line-height:24px;white-space:pre;color:#111;font-size:16.300px;letter-spacing:-.05px">od_<span class="c">当班产量</span></div>
<div class="e" style="left:2271.5px;top:1473.16px;height:24px;line-height:24px;white-space:pre;color:#111;font-size:15.200px;letter-spacing:-.75px">DINT</div>
<div style="left:2514px;top:846.5px;width:8px;height:658px;background:#f0f0f0"></div>
<div style="left:2515.5px;top:1118px;width:6px;height:377px;background:#c1c1c1"></div>
<svg style="left:2515px;top:852px;" width="6" height="5" viewBox="0 0 6 5"><path d="M0 0h6L3 4z" fill="#555"/></svg>
<div style="left:2068.2px;top:1504.6px;width:446px;height:19px;background:#f0f0f0"></div>
<div style="left:2089px;top:1506px;width:268.4px;height:16.5px;background:#c1c1c1"></div>
<svg style="left:2074px;top:1509px;" width="7" height="10" viewBox="0 0 7 10"><path d="M6 1L1.500 5 6 9" stroke="#555" stroke-width="1.400" fill="none"/></svg>
<svg style="left:2499.5px;top:1509px;" width="7" height="10" viewBox="0 0 7 10"><path d="M1 1l4.500 4L1 9" stroke="#555" stroke-width="1.400" fill="none"/></svg>
<div style="left:1864.9px;top:1082.8px;width:195.5px;height:42.8px;border:4.800px solid #e71d25;box-sizing:border-box"></div>
<div style="left:2061.3px;top:1452.8px;width:285.8px;height:58.4px;border:4.800px solid #e71d25;box-sizing:border-box"></div>
<svg style="left:1805.5px;top:1505.5px;" width="15.6" height="15.6" viewBox="0 0 15.6 15.6"><rect x=".6" y=".6" width="14.4" height="14.4" fill="#fff" stroke="#333" stroke-width="1.2"/></svg>
<div class="e" style="left:1827px;top:1501.4px;height:24px;line-height:24px;white-space:pre;color:#111;font-size:13.600px">显示描述</div>
<div class="e" style="left:1805.5px;top:1534.7px;height:24px;line-height:24px;white-space:pre;color:#111;font-size:14px;letter-spacing:.3px">Tag :</div>
<div style="left:1841px;top:1533.5px;width:587.7px;height:24.4px;background:#fff;border:1px solid #7a7a7a;box-sizing:border-box"></div>
<div class="e" style="left:1844px;top:1533.9px;height:24px;line-height:24px;white-space:pre;color:#111;font-size:13.600px;letter-spacing:-.08px">HMI_可保持[DB168]-od_当班产量</div>
<div style="left:2437.4px;top:1533.5px;width:90px;height:25px;background:#e1e1e1;border:1px solid #adadad;box-sizing:border-box"></div>
<div class="e" style="left:2455.8px;top:1534.7px;width:60px;height:24px;line-height:24px;white-space:pre;text-align:center;color:#111;font-size:14.500px">Ok</div>
</div></body></html>
